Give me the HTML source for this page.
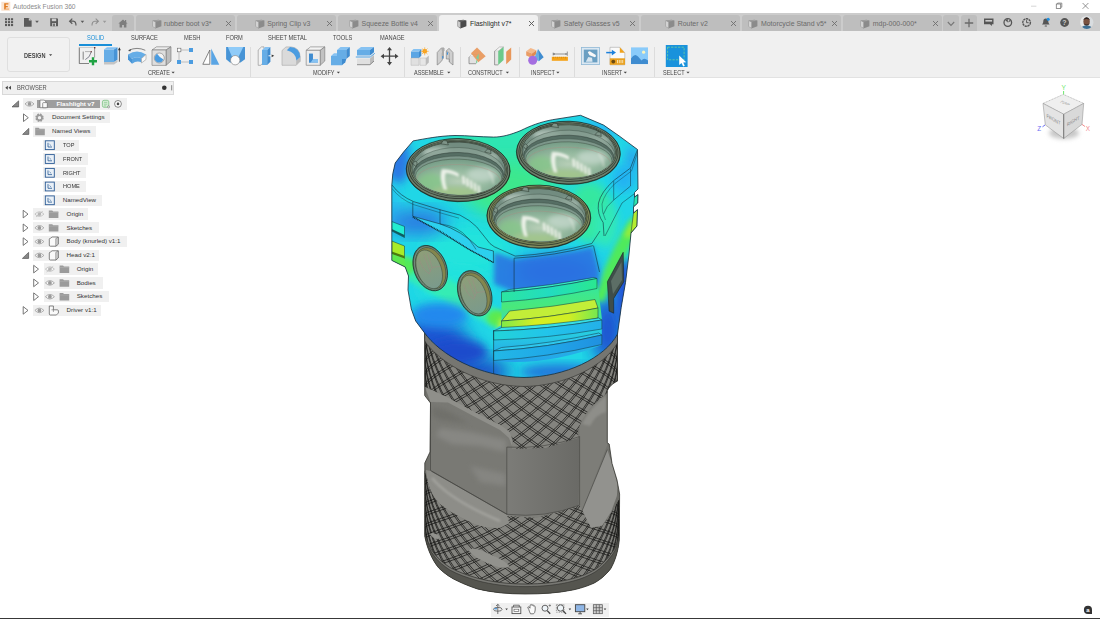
<!DOCTYPE html>
<html lang="en">
<head>
<meta charset="utf-8">
<title>Autodesk Fusion 360</title>
<style>
*{box-sizing:border-box;margin:0;padding:0}
html,body{width:1100px;height:619px;overflow:hidden;background:#fff;font-family:"Liberation Sans",sans-serif;}
#app{position:relative;width:1100px;height:619px;overflow:hidden;background:#fff}
.abs{position:absolute}
#titlebar{position:absolute;left:0;top:0;width:1100px;height:13px;background:#fff}
#titlebar .ttl{position:absolute;left:13px;top:2px;font-size:6.66px;color:#8a8a8a;line-height:9px;white-space:nowrap}
#tabbar{position:absolute;left:0;top:13px;width:1100px;height:18.500px;background:#cccccc}
.tab{position:absolute;top:2px;height:16.500px;background:#bebebe;border-radius:3px 3px 0 0;font-size:6.95px;color:#6a6a6a;line-height:16px;white-space:nowrap}
.tab.active{background:#f0f0f0;color:#2a2a2a}
.tab .tc{position:absolute;left:0;top:0.900px;width:91px;height:16px;display:flex;align-items:center;justify-content:center}
.tab .tc .cube{margin-right:2.5px;flex:none}
.tab .tx{position:absolute;left:89px;top:4.800px}
#toolbar{position:absolute;left:0;top:31px;width:1100px;height:47px;background:#f0f0f0;border-bottom:1px solid #e2e2e2}
.tbtab{position:absolute;top:3px;font-size:6.5px;color:#444;line-height:8px;white-space:nowrap;transform:scaleX(0.875);transform-origin:0 0}
.grp{position:absolute;top:38px;font-size:6.4px;color:#444;line-height:8px;white-space:nowrap;transform:scaleX(0.865);transform-origin:0 0}
.dbox{position:absolute;left:6.5px;top:6px;width:63px;height:35px;border:1px solid #dfdfdf;border-radius:3px;background:#f1f1f1}
.dlbl{position:absolute;left:23.9px;top:20.500px;font-size:6.3px;line-height:8px;color:#444;font-weight:bold;letter-spacing:0;transform:scaleX(0.89);transform-origin:0 0}
.sep{position:absolute;top:16px;width:1px;height:30px;background:#dcdcdc}
#browserhdr{position:absolute;left:2px;top:81px;width:172px;height:13.500px;background:#f0f0f0;border:1px solid #d9d9d9}
.bh{left:16.500px;top:83.800px;font-size:6.700px;color:#555;line-height:8px;white-space:nowrap;transform:scaleX(0.86);transform-origin:0 0}
.row{position:absolute;height:11.400px;background:#f0f0f0}
.rt{position:absolute;font-size:6.220px;line-height:8px;color:#333;white-space:nowrap;transform-origin:0 0}
</style>
</head>
<body>
<div id="app">
<div id="titlebar"><svg class="abs" style="left:1px;top:1px" width="10" height="11" viewBox="0 0 10 11"><rect x="0.3" y="0.8" width="9" height="9" fill="#fbe3cf"/><path d="M3.2 2.2 H7.4 V3.6 H4.8 V5 H6.8 V6.3 H4.8 V8.6 H3.2 Z" fill="#e07a1f"/><path d="M4.6 7.4 H8 V8.8 H4.6 Z" fill="#f4b37a"/></svg><span class="ttl">Autodesk Fusion 360</span>
<svg class="abs" style="left:1026px;top:0" width="74" height="13" viewBox="0 0 74 13"><path d="M5 6.2 H10.4" stroke="#d0d0d0" stroke-width="0.9"/><rect x="30.3" y="4" width="4.4" height="4.4" fill="none" stroke="#777" stroke-width="0.8"/><path d="M31.6 4 V3.1 H35.8 V7.2 H34.8" fill="none" stroke="#777" stroke-width="0.8"/><path d="M56.6 3 L62.4 8.8 M62.4 3 L56.6 8.800" stroke="#777" stroke-width="0.8" fill="none"/></svg></div>
<div id="tabbar">
<svg class="abs" style="left:0;top:0" width="135" height="18" viewBox="0 0 135 18">
<g fill="#5a5a5a">
<rect x="5" y="5.2" width="2.1" height="2.1"/><rect x="8" y="5.2" width="2.1" height="2.1"/><rect x="11" y="5.2" width="2.1" height="2.1"/>
<rect x="5" y="8.1" width="2.1" height="2.1"/><rect x="8" y="8.1" width="2.1" height="2.1"/><rect x="11" y="8.1" width="2.1" height="2.1"/>
<rect x="5" y="11" width="2.1" height="2.1"/><rect x="8" y="11" width="2.1" height="2.1"/><rect x="11" y="11" width="2.1" height="2.1"/>
<path d="M24 5 h4.8 l2.8 2.6 v6.1 h-7.6 z"/>
<path d="M35.200 7.800 h3.600 l-1.800 2.200 z"/>
<path d="M50.2 5.2 h7 l0.8 0.8 v7.2 h-7.8 z"/>
<path d="M80.600 7.800 h3.600 l-1.800 2.200 z"/>
</g>
<path d="M28.8 5 v2.6 h2.8" fill="#ccc" stroke="none"/>
<rect x="51.8" y="5.6" width="4.4" height="2.6" fill="#ccc"/><rect x="52.2" y="10" width="3.8" height="3.2" fill="#ccc"/><rect x="53.2" y="10.6" width="1.6" height="2.6" fill="#5a5a5a"/>
<path d="M72.3 5.6 L69.6 8.2 L72.3 10.8 M69.8 8.2 H73.2 Q76 8.4 76 12.6" fill="none" stroke="#5a5a5a" stroke-width="1.2"/>
<path d="M95.7 5.6 L98.4 8.2 L95.7 10.8 M98.2 8.2 H94.8 Q92 8.4 92 12.6" fill="none" stroke="#8e8e8e" stroke-width="1.1"/>
<path d="M102.800 7.800 h3.600 l-1.800 2.200 z" fill="#9a9a9a"/>
</svg>
<div class="tab" style="left:112px;width:22px"><svg class="abs" style="left:6px;top:4px" width="10" height="9" viewBox="0 0 10 9"><path d="M5 0.4 L9.6 4.6 H8.4 V8.6 H5.9 V6 H4.1 V8.6 H1.6 V4.6 H0.4 Z" fill="#7d7d7d"/><rect x="7" y="1" width="1.2" height="2.2" fill="#7d7d7d"/></svg></div>
<div class="tab" style="left:136px;width:99px"><div class="tc"><svg class="cube" width="10" height="10" viewBox="0 0 10 10"><path d="M0.6 1.6 L6.4 0.8 L9.4 1.6 L9.4 7.2 L3.4 9.4 L0.6 7.6 Z" fill="#8b8b8b"/><path d="M0.9 2.1 L3.4 2.9 L3.4 8.9 L0.9 7.4 Z" fill="#d2d2d2"/><path d="M0.9 1.8 L6.3 1.1 L9 1.8 L3.5 2.6 Z" fill="#a5a5a5"/></svg><span>rubber boot v3*</span></div><svg class="tx" width="7" height="7" viewBox="0 0 7 7"><path d="M1 1 L6 6 M6 1 L1 6" stroke="#6e6e6e" stroke-width="0.9" fill="none"/></svg></div>
<div class="tab" style="left:237px;width:99px"><div class="tc"><svg class="cube" width="10" height="10" viewBox="0 0 10 10"><path d="M0.6 1.6 L6.4 0.8 L9.4 1.6 L9.4 7.2 L3.4 9.4 L0.6 7.6 Z" fill="#8b8b8b"/><path d="M0.9 2.1 L3.4 2.9 L3.4 8.9 L0.9 7.4 Z" fill="#d2d2d2"/><path d="M0.9 1.8 L6.3 1.1 L9 1.8 L3.5 2.6 Z" fill="#a5a5a5"/></svg><span>Spring Clip v3</span></div><svg class="tx" width="7" height="7" viewBox="0 0 7 7"><path d="M1 1 L6 6 M6 1 L1 6" stroke="#6e6e6e" stroke-width="0.9" fill="none"/></svg></div>
<div class="tab" style="left:338px;width:99px"><div class="tc"><svg class="cube" width="10" height="10" viewBox="0 0 10 10"><path d="M0.6 1.6 L6.4 0.8 L9.4 1.6 L9.4 7.2 L3.4 9.4 L0.6 7.6 Z" fill="#8b8b8b"/><path d="M0.9 2.1 L3.4 2.9 L3.4 8.9 L0.9 7.4 Z" fill="#d2d2d2"/><path d="M0.9 1.8 L6.3 1.1 L9 1.8 L3.5 2.6 Z" fill="#a5a5a5"/></svg><span>Squeeze Bottle v4</span></div><svg class="tx" width="7" height="7" viewBox="0 0 7 7"><path d="M1 1 L6 6 M6 1 L1 6" stroke="#6e6e6e" stroke-width="0.9" fill="none"/></svg></div>
<div class="tab active" style="left:439px;width:99px"><div class="tc"><svg class="cube" width="10" height="10" viewBox="0 0 10 10"><path d="M0.6 1.6 L6.4 0.8 L9.4 1.6 L9.4 7.2 L3.4 9.4 L0.6 7.6 Z" fill="#4a4a4a"/><path d="M0.9 2.1 L3.4 2.9 L3.4 8.9 L0.9 7.4 Z" fill="#c8c8c8"/><path d="M0.9 1.8 L6.3 1.1 L9 1.8 L3.5 2.6 Z" fill="#777"/></svg><span>Flashlight v7*</span></div><svg class="tx" width="7" height="7" viewBox="0 0 7 7"><path d="M1 1 L6 6 M6 1 L1 6" stroke="#555" stroke-width="0.9" fill="none"/></svg></div>
<div class="tab" style="left:540px;width:99px"><div class="tc"><svg class="cube" width="10" height="10" viewBox="0 0 10 10"><path d="M0.6 1.6 L6.4 0.8 L9.4 1.6 L9.4 7.2 L3.4 9.4 L0.6 7.6 Z" fill="#8b8b8b"/><path d="M0.9 2.1 L3.4 2.9 L3.4 8.9 L0.9 7.4 Z" fill="#d2d2d2"/><path d="M0.9 1.8 L6.3 1.1 L9 1.8 L3.5 2.6 Z" fill="#a5a5a5"/></svg><span>Safety Glasses v5</span></div><svg class="tx" width="7" height="7" viewBox="0 0 7 7"><path d="M1 1 L6 6 M6 1 L1 6" stroke="#6e6e6e" stroke-width="0.9" fill="none"/></svg></div>
<div class="tab" style="left:641px;width:99px"><div class="tc"><svg class="cube" width="10" height="10" viewBox="0 0 10 10"><path d="M0.6 1.6 L6.4 0.8 L9.4 1.6 L9.4 7.2 L3.4 9.4 L0.6 7.6 Z" fill="#8b8b8b"/><path d="M0.9 2.1 L3.4 2.9 L3.4 8.9 L0.9 7.4 Z" fill="#d2d2d2"/><path d="M0.9 1.8 L6.3 1.1 L9 1.8 L3.5 2.6 Z" fill="#a5a5a5"/></svg><span>Router v2</span></div><svg class="tx" width="7" height="7" viewBox="0 0 7 7"><path d="M1 1 L6 6 M6 1 L1 6" stroke="#6e6e6e" stroke-width="0.9" fill="none"/></svg></div>
<div class="tab" style="left:742px;width:99px"><div class="tc"><svg class="cube" width="10" height="10" viewBox="0 0 10 10"><path d="M0.6 1.6 L6.4 0.8 L9.4 1.6 L9.4 7.2 L3.4 9.4 L0.6 7.6 Z" fill="#8b8b8b"/><path d="M0.9 2.1 L3.4 2.9 L3.4 8.9 L0.9 7.4 Z" fill="#d2d2d2"/><path d="M0.9 1.8 L6.3 1.1 L9 1.8 L3.5 2.6 Z" fill="#a5a5a5"/></svg><span>Motorcycle Stand v5*</span></div><svg class="tx" width="7" height="7" viewBox="0 0 7 7"><path d="M1 1 L6 6 M6 1 L1 6" stroke="#6e6e6e" stroke-width="0.9" fill="none"/></svg></div>
<div class="tab" style="left:843px;width:99px"><div class="tc"><svg class="cube" width="10" height="10" viewBox="0 0 10 10"><path d="M0.6 1.6 L6.4 0.8 L9.4 1.6 L9.4 7.2 L3.4 9.4 L0.6 7.6 Z" fill="#8b8b8b"/><path d="M0.9 2.1 L3.4 2.9 L3.4 8.9 L0.9 7.4 Z" fill="#d2d2d2"/><path d="M0.9 1.8 L6.3 1.1 L9 1.8 L3.5 2.6 Z" fill="#a5a5a5"/></svg><span>mdp-000-000*</span></div><svg class="tx" width="7" height="7" viewBox="0 0 7 7"><path d="M1 1 L6 6 M6 1 L1 6" stroke="#6e6e6e" stroke-width="0.9" fill="none"/></svg></div>
<div class="tab" style="left:943px;width:16px"><svg class="abs" style="left:4px;top:6px" width="8" height="6" viewBox="0 0 8 6"><path d="M0.8 1 L4 4.4 L7.2 1" stroke="#777" stroke-width="1.1" fill="none"/></svg></div>
<div class="tab" style="left:961px;width:16px"><svg class="abs" style="left:3px;top:3px" width="10" height="10" viewBox="0 0 10 10"><path d="M5 0.8 V9.2 M0.8 5 H9.2" stroke="#6a6a6a" stroke-width="1.3" fill="none"/></svg></div>
<svg class="abs" style="left:980px;top:0" width="120" height="18" viewBox="0 0 120 18">
<path d="M4 5.6 h9.5 v5.6 h-1.6 v1.8 l-2 -1.8 h-5.9 z" fill="#555"/><rect x="5.4" y="7" width="6.7" height="1.6" fill="#ccc"/>
<circle cx="27.8" cy="9.5" r="3.8" fill="none" stroke="#555" stroke-width="1.3"/><path d="M27.8 9.5 L25 7 L27.8 6 Z M27.8 9.5 L31 8 L30 6.4 Z" fill="#555"/>
<circle cx="46.6" cy="9.5" r="3.8" fill="none" stroke="#555" stroke-width="1.4" stroke-dasharray="2.2 0.6"/><path d="M46.6 7.2 V9.7 H48.6" fill="none" stroke="#555" stroke-width="1"/>
<path d="M62 11.6 q1.3 -1 1.3 -3.4 q0 -2.6 2.5 -2.6 q2.5 0 2.5 2.6 q0 2.4 1.3 3.4 z" fill="#555"/><rect x="64.6" y="12.4" width="2.4" height="1" rx="0.5" fill="#555"/><circle cx="68.2" cy="6.3" r="1.5" fill="#1e8fe0"/>
<circle cx="84.6" cy="9.5" r="4.4" fill="#555"/>
<clipPath id="avc"><circle cx="106.8" cy="9.3" r="6.6"/></clipPath>
<g clip-path="url(#avc)"><rect x="100" y="2" width="14" height="15" fill="#d9dde0"/><rect x="100" y="2" width="3.5" height="15" fill="#e8e8e8"/><ellipse cx="106.6" cy="8.6" rx="3.2" ry="4.2" fill="#7a5240"/><path d="M103.2 7 q3.4 -5.5 6.8 0 q-3.4 -2 -6.8 0z" fill="#2a2220"/><path d="M103.6 10 q3 5 6 0 q-3 3 -6 0z" fill="#2e2624"/><path d="M100 17 q1 -4.5 6.6 -4.5 q5.6 0 6.6 4.500z" fill="#3d6f94"/></g>
</svg>
<span class="abs" style="left:1062px;top:5px;font-size:7px;font-weight:bold;color:#ccc;line-height:9px;width:5px;text-align:center">?</span>
</div>
<div id="toolbar">
<div class="dbox"></div><span class="dlbl">DESIGN</span>
<span class="tbtab" style="left:86.8px;color:#1a8fd8">SOLID</span>
<span class="tbtab" style="left:131px">SURFACE</span>
<span class="tbtab" style="left:184.2px">MESH</span>
<span class="tbtab" style="left:225.6px">FORM</span>
<span class="tbtab" style="left:267.6px">SHEET METAL</span>
<span class="tbtab" style="left:332.5px">TOOLS</span>
<span class="tbtab" style="left:379.8px">MANAGE</span>
<div class="abs" style="left:79px;top:13px;width:33px;height:1.6px;background:#1a8fd8"></div>
<span class="grp" style="left:147.5px">CREATE</span>
<span class="grp" style="left:312.8px">MODIFY</span>
<span class="grp" style="left:414.2px">ASSEMBLE</span>
<span class="grp" style="left:468.2px">CONSTRUCT</span>
<span class="grp" style="left:531.4px">INSPECT</span>
<span class="grp" style="left:601.8px">INSERT</span>
<span class="grp" style="left:663.2px">SELECT</span>
<div class="sep" style="left:250px"></div><div class="sep" style="left:404px"></div><div class="sep" style="left:459.5px"></div><div class="sep" style="left:518.5px"></div><div class="sep" style="left:574.2px"></div><div class="sep" style="left:654.2px"></div>
<svg class="abs" style="left:0;top:0" width="1100" height="47" viewBox="0 31 1100 47">
<g fill="#444"><path d="M49 54.2 h3.2 l-1.6 1.9z"/><path d="M171.5 71.7 h3.2 l-1.6 1.9z"/><path d="M336.8 71.7 h3.2 l-1.6 1.9z"/><path d="M447.2 71.7 h3.2 l-1.6 1.9z"/><path d="M505.8 71.7 h3.2 l-1.6 1.9z"/><path d="M556.3 71.7 h3.2 l-1.6 1.9z"/><path d="M623.7 71.700 h3.2 l-1.6 1.9z"/><path d="M686.4 71.7 h3.2 l-1.600 1.9z"/></g>
<!-- 1 sketch -->
<g fill="none" stroke-width="0.7"><path d="M79.3 47.4 V63.6" stroke="#444"/><path d="M79.3 47.5 H94.6" stroke="#bbb"/><path d="M94.6 47.4 V57.5" stroke="#777"/><path d="M79.3 63.5 H89" stroke="#555"/><path d="M83.2 51.6 V59.6" stroke="#555"/><path d="M85 51.6 H90" stroke="#999"/><path d="M85.3 59.6 Q90 57.5 91.200 52" stroke="#556"/></g>
<rect x="94" y="47" width="1.4" height="1.4" fill="#633"/><rect x="90.500" y="51" width="1.3" height="1.3" fill="#633"/>
<path d="M93 57.2 V65.2 M89 61.2 H97" stroke="#1fa343" stroke-width="2.4" fill="none"/>
<!-- 2 extrude -->
<path d="M104 49.5 H114 V62 H104Z" fill="#66ade6"/><path d="M104 49.5 L107 47.300 H117.500 L114 49.5Z" fill="#86c2f2"/><path d="M114 49.5 L117.500 47.3 V59.700 L114 62Z" fill="#4794d6"/><path d="M104 62 H114 L117.500 59.7 V62 L114 64.500 H104Z" fill="#c4c4c4"/>
<path d="M119.400 48.5 V61.700" stroke="#333" stroke-width="0.8"/><path d="M118 50.2 L119.400 47.300 L120.800 50.2Z" fill="#333"/>
<!-- 3 revolve -->
<path d="M128 54.500 Q137 48.500 146 54.500 L141.500 58.500 Q137 56 132 58.800Z" fill="#66ade6"/><path d="M128 54.500 L132 58.800 V63.700 L128 59.5Z" fill="#4794d6"/><path d="M132 58.800 Q137 56 141.500 58.500 V62.500 Q137 60 132 63.700Z" fill="#59a3e0"/><path d="M141.500 58.500 L146 54.500 V59.500 L141.500 63Z" fill="#fafafa" stroke="#888" stroke-width="0.5"/>
<path d="M128.800 50.300 Q137 46.500 145.300 50.300" stroke="#555" stroke-width="0.7" fill="none"/><path d="M128 51 L131 49 L130.500 51.200Z" fill="#444"/>
<!-- 4 hole -->
<path d="M152 50 L156.500 46.800 H171 L166 50Z" fill="#ececec" stroke="#777" stroke-width="0.6"/><path d="M166 50 L171 46.800 V61 L166 65.400Z" fill="#bdbdbd" stroke="#777" stroke-width="0.6"/><path d="M152 50 H166 V65.400 H152Z" fill="#dedede" stroke="#777" stroke-width="0.6"/><circle cx="159.300" cy="58" r="5" fill="#f4f4f4" stroke="#888" stroke-width="0.7"/><path d="M157 53.800 Q159.500 57.500 163.500 59.500 Q162 62.600 159.300 62.600 Q154.700 62.300 154.700 58 Q154.900 55 157 53.800Z" fill="#4b9ce0"/>
<!-- 5 pattern -->
<path d="M179 50 H191 M179 50 V62 M179 62 H191" stroke="#aaa" stroke-width="0.7" fill="none"/><rect x="177.300" y="48.200" width="3.600" height="3.600" fill="#fff" stroke="#666" stroke-width="0.600"/><rect x="189" y="48" width="4" height="4" fill="#4b9ce0"/><rect x="177" y="60" width="4" height="4" fill="#4b9ce0"/><rect x="189" y="60" width="4" height="4" fill="#4b9ce0"/>
<!-- 6 mirror -->
<path d="M202.800 64.300 H209.800 V50Z" fill="#fff" stroke="#666" stroke-width="0.8"/><path d="M211.200 48.400 V64.700 H219.300Z" fill="#5aa5e4"/>
<!-- 7 form -->
<path d="M226.100 47 H245 V59.300 L240.500 62.500 H230 L226.100 59.300Z" fill="#4794d6"/><path d="M227.800 47 H243.300 L238.200 57.500 H232.300Z" fill="#8fcbf8"/><circle cx="235.200" cy="60.200" r="4.700" fill="#fbfbfb" stroke="#888" stroke-width="0.7"/>
<!-- 8 press pull -->
<path d="M258.200 50 L261.500 46.900 H264 V62 L260.500 65.300 H258.200Z" fill="#f2f2f2" stroke="#888" stroke-width="0.6"/><path d="M262 50 H267.200 V65 H262Z" fill="#66ade6"/><path d="M262 50 L265.200 46.900 H270.400 L267.200 50Z" fill="#86c2f2"/><path d="M267.200 50 L270.400 46.900 V61.800 L267.200 65Z" fill="#3f8cd0"/><path d="M268.500 55.800 H272" stroke="#fff" stroke-width="1"/><path d="M271.600 54.400 L274.200 55.800 L271.600 57.200Z" fill="#333"/>
<!-- 9 fillet -->
<path d="M282 50.500 L286 46.900 H291 Q299.800 47.500 300.200 57 V61.200 L296.200 65.300 H282Z" fill="#dadada" stroke="#999" stroke-width="0.5"/><path d="M296.200 65.300 L300.200 61.200 V57 L296.200 60.500Z" fill="#bbb"/><path d="M290 47 Q299.800 47.500 300.200 57 L296.400 60.500 Q296 52.500 286.800 50.200Z" fill="#4b9ce0"/>
<!-- 10 shell -->
<path d="M306.200 50.300 L310.500 46.900 H324.800 L320.200 50.300Z" fill="#f4f4f4" stroke="#777" stroke-width="0.6"/><path d="M320.200 50.300 L324.800 46.900 V61 L320.200 65.300Z" fill="#c2c2c2" stroke="#777" stroke-width="0.600"/><path d="M306.200 50.300 H320.200 V65.300 H306.200Z" fill="#ececec" stroke="#777" stroke-width="0.6"/><path d="M309 53.800 H312.800 V59 H318 V62.600 H309Z" fill="#3f8cd0"/><path d="M312.800 59 H318 V62.600 H310.500Z" fill="#86c2f2"/><path d="M309 53.800 H312.800 V59 L310.500 62.600 H309Z" fill="#3f8cd0"/>
<!-- 11 combine -->
<path d="M337 50 L340.500 47 H349.800 L346.300 50Z" fill="#86c2f2"/><path d="M337 50 H346.300 V59 H337Z" fill="#66ade6"/><path d="M346.300 50 L349.800 47 V56 L346.300 59Z" fill="#3f8cd0"/><path d="M331 56 L334 53.200 H337 V56Z" fill="#86c2f2"/><path d="M331 56 H337 V59 H342 V65.300 H331Z" fill="#66ade6"/><path d="M342 59 H346.300 L345.300 62.300 L342 65.300Z" fill="#3f8cd0"/>
<!-- 12 split -->
<path d="M357 50 L361 46.900 H374 L370 50Z" fill="#86c2f2"/><path d="M357 50 H370 V55.500 H357Z" fill="#66ade6"/><path d="M370 50 L374 46.900 V52.300 L370 55.500Z" fill="#3f8cd0"/><path d="M355.800 57 H370.300 L374.800 53.300" stroke="#3a96e0" stroke-width="0.9" fill="none"/><path d="M357 58.500 H370 V64.600 H357Z" fill="#e0e0e0"/><path d="M370 58.500 L374 55 V61 L370 64.600Z" fill="#bcbcbc"/><path d="M357 64.700 H370 L374 61" stroke="#666" stroke-width="0.7" fill="none"/>
<!-- 13 move -->
<path d="M389.500 49 V63.500 M382.500 56.200 H396.500" stroke="#444" stroke-width="1.300" fill="none"/><path d="M389.500 47 L392 50.300 H387Z M389.500 65.400 L392 62.100 H387Z M380.600 56.200 L384 53.700 V58.700Z M398.500 56.200 L395 53.700 V58.700Z" fill="#444"/>
<!-- 14 new component -->
<path d="M411 51.600 L413.500 49 H421.300 L419 51.600Z" fill="#86c2f2"/><path d="M411 51.600 H419 V58 H411Z" fill="#5aa5e4"/><path d="M419 51.600 L421.300 49 V55.800 L419 58Z" fill="#3f8cd0"/><path d="M411 58 H419 V65.300 H411Z" fill="#e0e0e0" stroke="#aaa" stroke-width="0.400"/><path d="M420 58 L422.500 55.600 H428.800 L426 58Z" fill="#f2f2f2"/><path d="M420 58 H426 V65.300 H420Z" fill="#e6e6e6" stroke="#aaa" stroke-width="0.400"/><path d="M426 58 L428.800 55.600 V62.500 L426 65.300Z" fill="#bcbcbc"/>
<circle cx="424.700" cy="51.300" r="2.300" fill="#f79a10"/><path d="M424.700 47.300 V55.300 M420.700 51.300 H428.700 M421.900 48.500 L427.500 54.100 M427.500 48.500 L421.900 54.100" stroke="#f9ab2c" stroke-width="0.700"/>
<!-- 15 joint -->
<path d="M437.200 52.500 L441.300 48 H444 V51 L442.300 52.800 V60 L439.300 63.500 L437.200 65Z" fill="#cfcfcf" stroke="#777" stroke-width="0.600"/><path d="M441.300 48 H444 V58 L442.300 60 V52.800Z" fill="#aaa"/><path d="M446.300 51 L449 48.300 L453 52.500 V65 L449.300 62 V59 H446.300Z" fill="#cfcfcf" stroke="#777" stroke-width="0.600"/><path d="M446.300 51 L449.300 52.800 V62" stroke="#888" stroke-width="0.500" fill="none"/><rect x="442.300" y="56" width="0.900" height="2.600" fill="#2f8ce0"/><rect x="446.900" y="52.300" width="1" height="2.400" fill="#2f8ce0"/>
<!-- 16 offset plane -->
<path d="M469 57 L471.500 54.500 H478 L476 57Z" fill="#f0f0f0" stroke="#999" stroke-width="0.400"/><path d="M469 57 H476 V63.600 H469Z" fill="#e2e2e2"/><path d="M469 57 V63.700 H476" stroke="#666" stroke-width="0.600" fill="none"/><path d="M477 47.600 L485.700 56.300 L478.300 62.200 L471 53.300Z" fill="#e8975a" fill-opacity="0.920"/><path d="M478.700 53.500 L476 58 L478.700 59.700Z" fill="#79cfa0"/><path d="M476.300 60.500 L477.200 60 V63 L476.300 63.600Z" fill="#59c07f"/>
<!-- 17 midplane -->
<path d="M494.600 51.200 L499.500 47 H503.600 L498.200 51.200Z" fill="#f6f6f6" stroke="#888" stroke-width="0.500"/><path d="M494.600 51.200 H498.200 V64.900 H494.600Z" fill="#e6e6e6"/><path d="M494.600 51.200 V64.900 H498.200" stroke="#666" stroke-width="0.600" fill="none"/><path d="M498.200 51.200 L503.600 47 V60 L498.200 64.900Z" fill="#6cc98a"/><path d="M506.200 51.800 L511.200 47.500 V59.500 L506.200 64.300Z" fill="#e8975a"/>
<!-- 18 inspect -->
<path d="M526.200 51.300 L530.600 48 L536.300 50.300 L532 53.600Z" fill="#f4b98c"/><path d="M526.200 51.300 L532 53.600 V58 L526.200 55.500Z" fill="#ea9c66"/><path d="M532 53.600 L536.300 50.300 V54 L532 58Z" fill="#e08a50"/><path d="M538 49 L534 58.500 L538.800 61.200Z" fill="#66ade6"/><path d="M538 49 L538.800 61.200 L543.700 57.200Z" fill="#3f8cd0"/><circle cx="532.700" cy="60.300" r="4.500" fill="#a46ee0"/>
<!-- 19 measure -->
<rect x="551.800" y="56.800" width="16.100" height="4" fill="#f5a31a"/><path d="M553.500 56.800 v1.600 M555.500 56.800 v1 M557.500 56.800 v1.600 M559.500 56.800 v1 M561.500 56.800 v1.600 M563.500 56.800 v1 M565.500 56.800 v1.600" stroke="#c77f08" stroke-width="0.500"/><path d="M553 54 H567 M553.200 52.600 V55.400 M567.300 51.500 V55.800" stroke="#555" stroke-width="0.600" fill="none"/><path d="M553.200 54 l1.500 -0.800 v1.600z M567 54 l-1.500 -0.800 v1.600z" fill="#555"/>
<!-- 20 decal -->
<rect x="581.600" y="47.400" width="17.900" height="17.200" fill="#dbe8f2" stroke="#8fb8d6" stroke-width="0.800"/><rect x="583.800" y="49.600" width="13.600" height="12.800" fill="#6a9fc2"/><path d="M587.800 52.300 Q589.500 50.500 591 52 L595.800 55 Q596.400 56.800 594.800 57.300 L589.500 55.300Z" fill="#f8f8f8"/><path d="M588.300 57 L592 57.800 L592.500 61.800 H585.800Z" fill="#d8e6f0"/>
<!-- 21 insert -->
<path d="M610 47.300 H619.800 L624.800 52.800 V64.800 H610Z" fill="#fafafa" stroke="#999" stroke-width="0.500"/><path d="M619.800 47.300 V52.800 H624.800Z" fill="#f0a21c"/><rect x="609.800" y="58.300" width="15.200" height="6.500" fill="#e8a020"/><circle cx="613.300" cy="61.600" r="1.900" fill="#6b4a10"/><path d="M617.500 60 v3.200 M619.300 60 v3.200 M621 60 v3.200 M622.700 60 v3.200" stroke="#fbe6b8" stroke-width="0.900"/><path d="M606.200 52.600 H612.500" stroke="#1c80dc" stroke-width="1.500"/><path d="M611.800 49.800 L616 52.600 L611.800 55.400Z" fill="#1c80dc"/>
<!-- 22 canvas -->
<rect x="631" y="47.400" width="17" height="16.700" fill="#8acbfa"/><path d="M631 64.100 V58.500 Q634.500 52.500 638 56.500 L641.500 60.500 Q644 57 648 60.500 V64.100Z" fill="#3f8cd0"/><circle cx="643.600" cy="52.200" r="1.600" fill="#f8f4c0"/>
<!-- 23 select -->
<rect x="665.800" y="45" width="21.800" height="22" fill="#1992dc"/><rect x="667.600" y="47.200" width="16.500" height="12.600" fill="none" stroke="#7fdc8c" stroke-width="0.700" stroke-dasharray="2.200 1.300"/><path d="M679.200 55.500 L679.200 65 L681.500 63 L683.200 66.500 L684.800 65.800 L683.200 62.500 L686.200 62.300Z" fill="#fff"/>
</svg>

</div>
<!--BROWSER-->
<div id="browserhdr"></div>
<span class="abs bh">BROWSER</span>
<svg class="abs" style="left:0;top:78px" width="180" height="20" viewBox="0 78 180 20"><path d="M7.800 85.800 V89.800 L5.300 87.800Z M11 85.800 V89.800 L8.500 87.800Z" fill="#444"/><circle cx="164.300" cy="87.800" r="2.300" fill="#333"/><path d="M171.700 85.200 V90.400" stroke="#666" stroke-width="0.800"/></svg>
<div class="row" style="left:23px;top:98.2px;width:104.0px"></div>
<div class="abs" style="left:36.9px;top:99.5px;width:63px;height:8.7px;background:#9e9e9e"></div>
<span class="rt" style="left:56.5px;top:99.6px;color:#fff;font-weight:bold">Flashlight v7</span>
<div class="row" style="left:33.1px;top:112.0px;width:76.9px"></div>
<span class="rt" style="left:52px;top:113.4px">Document Settings</span>
<div class="row" style="left:33.1px;top:125.7px;width:62.6px"></div>
<span class="rt" style="left:52px;top:127.1px">Named Views</span>
<div class="row" style="left:43.3px;top:139.5px;width:35.5px"></div>
<span class="rt" style="left:62.7px;top:140.9px;transform:scaleX(0.9)">TOP</span>
<div class="row" style="left:43.3px;top:153.3px;width:44.4px"></div>
<span class="rt" style="left:62.7px;top:154.7px;transform:scaleX(0.9)">FRONT</span>
<div class="row" style="left:43.3px;top:167.1px;width:42.4px"></div>
<span class="rt" style="left:62.7px;top:168.5px;transform:scaleX(0.9)">RIGHT</span>
<div class="row" style="left:43.3px;top:180.8px;width:42.4px"></div>
<span class="rt" style="left:62.7px;top:182.2px;transform:scaleX(0.9)">HOME</span>
<div class="row" style="left:43.3px;top:194.6px;width:58.6px"></div>
<span class="rt" style="left:62.7px;top:196.0px">NamedView</span>
<div class="row" style="left:33px;top:208.4px;width:54.8px"></div>
<span class="rt" style="left:66.6px;top:209.8px">Origin</span>
<div class="row" style="left:33px;top:222.1px;width:65.7px"></div>
<span class="rt" style="left:66.6px;top:223.5px">Sketches</span>
<div class="row" style="left:33px;top:235.9px;width:93.7px"></div>
<span class="rt" style="left:66.6px;top:237.3px">Body (knurled) v1:1</span>
<div class="row" style="left:33px;top:249.7px;width:65.7px"></div>
<span class="rt" style="left:66.6px;top:251.1px">Head v2:1</span>
<div class="row" style="left:43.5px;top:263.4px;width:54.2px"></div>
<span class="rt" style="left:76.7px;top:264.8px">Origin</span>
<div class="row" style="left:43.5px;top:277.2px;width:59.0px"></div>
<span class="rt" style="left:76.7px;top:278.6px">Bodies</span>
<div class="row" style="left:43.5px;top:291.0px;width:65.7px"></div>
<span class="rt" style="left:76.7px;top:292.4px">Sketches</span>
<div class="row" style="left:33px;top:304.7px;width:68.3px"></div>
<span class="rt" style="left:66.6px;top:306.1px">Driver v1:1</span>
<svg class="abs" style="left:0;top:95px" width="180" height="225" viewBox="0 95 180 225">
<path d="M18.6 100.9 V106.9 H12Z" fill="#888" stroke="#555" stroke-width="0.7"/>
<path d="M25 103.9 Q29.5 99.30000000000001 34 103.9 Q29.5 108.5 25 103.9Z" fill="#f6f6f6" stroke="#9a9a9a" stroke-width="0.8"/><circle cx="29.5" cy="103.9" r="1.9" fill="#9a9a9a"/>
<path d="M40 100.10000000000001 H44.200 L46 101.9 V107.7 H40Z" fill="#fafafa" stroke="#666" stroke-width="0.6"/><path d="M42.700 103.4 Q42.700 102.60000000000001 43.500 102.60000000000001 H46.500 Q47.300 102.60000000000001 47.300 103.4 V107.7 H42.700Z" fill="#fafafa" stroke="#555" stroke-width="0.6"/>
<rect x="102.400" y="100.30000000000001" width="6.400" height="7" rx="1.600" fill="#d5ecd6" stroke="#7cc283" stroke-width="0.8"/><path d="M104 102.4 h3.200 M104 104.2 h3.200 M104 105.9 h2" stroke="#7cc283" stroke-width="0.600"/><circle cx="108.600" cy="106.9" r="1" fill="#fff" stroke="#555" stroke-width="0.5"/>
<circle cx="118" cy="103.9" r="3.400" fill="#fff" stroke="#555" stroke-width="0.7"/><circle cx="118" cy="103.9" r="1.300" fill="#444"/>
<path d="M23.5 113.9 V121.5 L28.3 117.7Z" fill="#fff" stroke="#555" stroke-width="0.8"/>
<circle cx="39.500" cy="117.7" r="3" fill="none" stroke="#9a9a9a" stroke-width="2.400" stroke-dasharray="1.500 0.860"/><circle cx="39.500" cy="117.7" r="2.500" fill="none" stroke="#9a9a9a" stroke-width="1.500"/>
<path d="M28.799999999999997 128.4 V134.4 H22.599999999999998Z" fill="#888" stroke="#555" stroke-width="0.7"/>
<path d="M35.2 127.80000000000001 H38.6 L39.6 128.8 H44.800000000000004 V135.20000000000002 H35.2Z" fill="#9b9b9b"/><path d="M35.2 129.8 H44.800000000000004" stroke="#b5b5b5" stroke-width="0.5"/>
<rect x="45.300" y="140.79999999999998" width="9" height="8.800" fill="#e9f0f7" stroke="#2a5a94" stroke-width="0.9"/><path d="M48 142.79999999999998 V147.0 H52" stroke="#2a5a94" stroke-width="0.8" fill="none"/><path d="M49.500 144.2 L51.200 145.79999999999998" stroke="#2a5a94" stroke-width="0.6"/>
<rect x="45.300" y="154.6" width="9" height="8.800" fill="#e9f0f7" stroke="#2a5a94" stroke-width="0.9"/><path d="M48 156.6 V160.8 H52" stroke="#2a5a94" stroke-width="0.8" fill="none"/><path d="M49.500 158.0 L51.200 159.6" stroke="#2a5a94" stroke-width="0.6"/>
<rect x="45.300" y="168.4" width="9" height="8.800" fill="#e9f0f7" stroke="#2a5a94" stroke-width="0.9"/><path d="M48 170.4 V174.60000000000002 H52" stroke="#2a5a94" stroke-width="0.8" fill="none"/><path d="M49.500 171.8 L51.200 173.4" stroke="#2a5a94" stroke-width="0.6"/>
<rect x="45.300" y="182.1" width="9" height="8.800" fill="#e9f0f7" stroke="#2a5a94" stroke-width="0.9"/><path d="M48 184.1 V188.3 H52" stroke="#2a5a94" stroke-width="0.8" fill="none"/><path d="M49.500 185.5 L51.200 187.1" stroke="#2a5a94" stroke-width="0.6"/>
<rect x="45.300" y="195.9" width="9" height="8.800" fill="#e9f0f7" stroke="#2a5a94" stroke-width="0.9"/><path d="M48 197.9 V202.10000000000002 H52" stroke="#2a5a94" stroke-width="0.8" fill="none"/><path d="M49.500 199.3 L51.200 200.9" stroke="#2a5a94" stroke-width="0.6"/>
<path d="M23.2 210.29999999999998 V217.9 L28.0 214.1Z" fill="#fff" stroke="#555" stroke-width="0.8"/>
<path d="M34.9 214.1 Q39.4 209.5 43.9 214.1 Q39.4 218.7 34.9 214.1Z" fill="#f6f6f6" stroke="#b8b8b8" stroke-width="0.8"/><circle cx="39.4" cy="214.1" r="1.9" fill="#b8b8b8"/><path d="M36.1 216.9 L42.699999999999996 211.29999999999998" stroke="#b0b0b0" stroke-width="0.7"/>
<path d="M48.8 210.5 H52.199999999999996 L53.199999999999996 211.5 H58.4 V217.9 H48.8Z" fill="#9b9b9b"/><path d="M48.8 212.5 H58.4" stroke="#b5b5b5" stroke-width="0.5"/>
<path d="M23.2 224.0 V231.60000000000002 L28.0 227.8Z" fill="#fff" stroke="#555" stroke-width="0.8"/>
<path d="M34.9 227.8 Q39.4 223.20000000000002 43.9 227.8 Q39.4 232.4 34.9 227.8Z" fill="#f6f6f6" stroke="#9a9a9a" stroke-width="0.8"/><circle cx="39.4" cy="227.8" r="1.9" fill="#9a9a9a"/>
<path d="M48.8 224.20000000000002 H52.199999999999996 L53.199999999999996 225.20000000000002 H58.4 V231.60000000000002 H48.8Z" fill="#9b9b9b"/><path d="M48.8 226.20000000000002 H58.4" stroke="#b5b5b5" stroke-width="0.5"/>
<path d="M23.2 237.79999999999998 V245.4 L28.0 241.6Z" fill="#fff" stroke="#555" stroke-width="0.8"/>
<path d="M34.9 241.6 Q39.4 237.0 43.9 241.6 Q39.4 246.2 34.9 241.6Z" fill="#f6f6f6" stroke="#9a9a9a" stroke-width="0.8"/><circle cx="39.4" cy="241.6" r="1.9" fill="#9a9a9a"/>
<path d="M49.3 239.2 Q49.3 238.4 50.4 238.29999999999998 L52.099999999999994 237.0 H58.199999999999996 V244.2 L55.8 246.2 H50.4 Q49.3 246.2 49.3 245.2Z" fill="#fafafa" stroke="#555" stroke-width="0.7"/><path d="M55.8 238.6 L58.199999999999996 237.0 V244.2 L55.8 246.2Z" fill="#d6d6d6" stroke="#555" stroke-width="0.5"/>
<path d="M28.6 252.4 V258.4 H22.4Z" fill="#888" stroke="#555" stroke-width="0.7"/>
<path d="M34.9 255.4 Q39.4 250.8 43.9 255.4 Q39.4 260.0 34.9 255.4Z" fill="#f6f6f6" stroke="#9a9a9a" stroke-width="0.8"/><circle cx="39.4" cy="255.4" r="1.9" fill="#9a9a9a"/>
<path d="M49.3 253.0 Q49.3 252.20000000000002 50.4 252.1 L52.099999999999994 250.8 H58.199999999999996 V258.0 L55.8 260.0 H50.4 Q49.3 260.0 49.3 259.0Z" fill="#fafafa" stroke="#555" stroke-width="0.7"/><path d="M55.8 252.4 L58.199999999999996 250.8 V258.0 L55.8 260.0Z" fill="#d6d6d6" stroke="#555" stroke-width="0.5"/>
<path d="M33.7 265.3 V272.90000000000003 L38.5 269.1Z" fill="#fff" stroke="#555" stroke-width="0.8"/>
<path d="M45.4 269.1 Q49.9 264.5 54.4 269.1 Q49.9 273.70000000000005 45.4 269.1Z" fill="#f6f6f6" stroke="#b8b8b8" stroke-width="0.8"/><circle cx="49.9" cy="269.1" r="1.9" fill="#b8b8b8"/><path d="M46.6 271.90000000000003 L53.199999999999996 266.3" stroke="#b0b0b0" stroke-width="0.7"/>
<path d="M59.6 265.5 H63.0 L64.0 266.5 H69.2 V272.90000000000003 H59.6Z" fill="#9b9b9b"/><path d="M59.6 267.5 H69.2" stroke="#b5b5b5" stroke-width="0.5"/>
<path d="M33.7 279.09999999999997 V286.7 L38.5 282.9Z" fill="#fff" stroke="#555" stroke-width="0.8"/>
<path d="M45.4 282.9 Q49.9 278.29999999999995 54.4 282.9 Q49.9 287.5 45.4 282.9Z" fill="#f6f6f6" stroke="#9a9a9a" stroke-width="0.8"/><circle cx="49.9" cy="282.9" r="1.9" fill="#9a9a9a"/>
<path d="M59.6 279.29999999999995 H63.0 L64.0 280.29999999999995 H69.2 V286.7 H59.6Z" fill="#9b9b9b"/><path d="M59.6 281.29999999999995 H69.2" stroke="#b5b5b5" stroke-width="0.5"/>
<path d="M33.7 292.9 V300.5 L38.5 296.7Z" fill="#fff" stroke="#555" stroke-width="0.8"/>
<path d="M45.4 296.7 Q49.9 292.09999999999997 54.4 296.7 Q49.9 301.3 45.4 296.7Z" fill="#f6f6f6" stroke="#9a9a9a" stroke-width="0.8"/><circle cx="49.9" cy="296.7" r="1.9" fill="#9a9a9a"/>
<path d="M59.6 293.09999999999997 H63.0 L64.0 294.09999999999997 H69.2 V300.5 H59.6Z" fill="#9b9b9b"/><path d="M59.6 295.09999999999997 H69.2" stroke="#b5b5b5" stroke-width="0.5"/>
<path d="M23.2 306.59999999999997 V314.2 L28.0 310.4Z" fill="#fff" stroke="#555" stroke-width="0.8"/>
<path d="M34.9 310.4 Q39.4 305.79999999999995 43.9 310.4 Q39.4 315.0 34.9 310.4Z" fill="#f6f6f6" stroke="#9a9a9a" stroke-width="0.8"/><circle cx="39.4" cy="310.4" r="1.9" fill="#9a9a9a"/>
<path d="M49.3 306.0 H53.4 V309.79999999999995 H57.4 Q58.4 309.79999999999995 58.4 311.0 V313.0 L56.4 315.0 H50.3 Q49.3 315.0 49.3 314.0Z" fill="#fafafa" stroke="#555" stroke-width="0.7"/><path d="M51.4 309.79999999999995 H53.4 M53.4 309.79999999999995 V312.0" stroke="#555" stroke-width="0.5" fill="none"/>
</svg>
<!--/BROWSER-->
<div id="canvas">
<!--MODEL-->
<svg class="abs" style="left:380px;top:100px" width="280" height="500" viewBox="380 100 280 500">
<defs>
<filter id="b10" x="-30%" y="-30%" width="160%" height="160%"><feGaussianBlur stdDeviation="9"/></filter>
<filter id="b6" x="-30%" y="-30%" width="160%" height="160%"><feGaussianBlur stdDeviation="5"/></filter>
<filter id="b3" x="-30%" y="-30%" width="160%" height="160%"><feGaussianBlur stdDeviation="2.5"/></filter>
<filter id="b1" x="-30%" y="-30%" width="160%" height="160%"><feGaussianBlur stdDeviation="1"/></filter>
<clipPath id="headclip"><path d="M391.800 185 L392.800 173.700 L395.200 163 Q403 152 413.100 140.900 C425 138.800 438 136 455 135.500 C468 135.500 480 137 493.600 137.100 C502 137 510 135 520.900 130.500 C530 126 540 122 552.600 119.700 L580.500 115.300 L603.600 125.100 L619.100 135.900 L637.500 149.500 L638 189 L634.500 192.500 L634.500 197 L638 194.500 L637.800 203 L633.500 207 L633.500 213 L637.500 209.500 L637 226 L631 233 L629 254 L625.500 282.600 L621.200 307.500 L617.500 334 C605 358 565 377 524 377.5 C480 377 440 355 423.900 332 L415.7 321 L411.300 309 L408 290 L408.5 276 L405.200 267 L391.8 260.400 Z"/></clipPath>
<clipPath id="bodyclip"><path d="M424.7 330 L424.7 395.5 L430.500 403 L430 452 L424.800 463 L424.700 536 C427 548 432 560 439 568.300 C445 574 451 578 458.200 581.300 C464 584 470 586.500 477.300 588.900 C492 592.500 508 594 525 594 C542 594 558 593 572.700 590 C580 588.500 586 586.500 591.800 584.100 C599 581 606 575 610.900 568.400 C615 561 618 552 619.300 540 L619.600 494 L617 480 L612 463.400 L609.200 444 L607.300 442.800 L607.300 390.600 C610 385 614 383 617.500 381 L617.500 330 Z"/></clipPath>
<clipPath id="k1"><path d="M424 330 L424.700 386.5 L448.4 397.8 L477.8 413.7 L500.4 425 L509.5 431.7 L512.9 440.8 L512 449 L545.700 448 L578 438 L578.400 429.5 L581.8 420.4 L590.900 406.9 L606.7 393.3 L618.500 384.300 L618.500 330 Z"/></clipPath>
<clipPath id="k2"><path d="M424 470 L427 478 Q429 490 434.900 498.400 Q443 508 455.200 514.300 Q466 521 477.800 525.600 Q490 529 500.400 527.800 L509.500 523.300 L507 516 L536.6 518 L579.600 505.500 L591 528 L602.200 526 L612 512 L620 498 L620.0 534.5 C617.0 544.5 615.0 548.5 612.0 552.5 C607.0 559.5 601.0 565.5 595.0 569.5 C588.0 573.5 581.0 576.5 573.0 578.5 C558.0 582.5 542.0 584.0 525.0 584.0 C508.0 584.0 492.0 582.0 477.0 578.0 C467.0 575.0 458.0 572.0 450.0 567.5 C444.0 563.5 439.0 559.5 435.0 554.5 C430.0 548.5 427.0 541.5 424.7 533.5 Z"/></clipPath>
<radialGradient id="lensg" cx="0.5" cy="0.62" r="0.6"><stop offset="0" stop-color="#b6ceb6"/><stop offset="0.5" stop-color="#96baa0"/><stop offset="1" stop-color="#789e88"/></radialGradient>
<linearGradient id="panelg" x1="0" x2="1" y1="0" y2="0"><stop offset="0" stop-color="#7c7c78"/><stop offset="0.5" stop-color="#73736f"/><stop offset="1" stop-color="#6a6a66"/></linearGradient>
<linearGradient id="bodyg" x1="0" x2="1" y1="0" y2="0"><stop offset="0" stop-color="#6c6c67"/><stop offset="0.12" stop-color="#7c7c77"/><stop offset="0.6" stop-color="#7e7e79"/><stop offset="0.9" stop-color="#74746f"/><stop offset="1" stop-color="#666661"/></linearGradient>
</defs>
<g clip-path="url(#bodyclip)">
<rect x="420" y="325" width="205" height="275" fill="url(#bodyg)"/>
<path d="M430.500 402 L425.300 389 L448.4 397.8 L477.800 413.700 L502.900 426.500 L512.700 434.300 L511.900 446 L506.800 447 L506.800 514.300 L430.500 470.400 Z" fill="#797974"/>
<path d="M425.300 387.500 L448.4 396.3 L477.800 412.200 L502.900 425 L511 431.500 L513.500 440 L511.900 446 L509 438 L500 430 L477 418 L448 402.500 L430.500 402 Z" fill="#8f8f8a"/>
<path d="M440 428 L470 432 L506 440 L506 452 L480 446 L452 444 L436 436 Z" fill="#878783" filter="url(#b3)"/>
<path d="M470 466 L506 474 L506 486 L480 482 Z" fill="#858581" filter="url(#b3)"/>
<path d="M432 406 L450 412 L470 424 L440 420 L432 416 Z" fill="#70706b" filter="url(#b3)"/>
<path d="M506.800 447.100 Q545 449.500 579.600 436.500 L579.600 505.200 Q545 518.500 506.800 514.300 Z" fill="url(#panelg)"/>
<path d="M579.800 422 Q583 410 607.300 390.600 L607.300 445 L581.200 512.900 L578.500 523.800 Z" fill="#7d7d78"/>
<path d="M582 424 Q590 408 606 396 L606 412 Q596 414 590 426 Z" fill="#8e8e89" filter="url(#b1)"/>
<path d="M607.300 449.700 L612 463.400 L617.500 484 L616.900 496 L611 512 L602.200 525.600 L590.900 527.800 L581.200 521 L581.200 512.900 Z" fill="#92928e"/>
<path d="M426 470 L431.500 471.300 L507.200 514.300 L510 520 L509.500 523.300 L500.400 527.800 Q490 529 477.800 525.600 Q466 521 455.200 514.300 Q443 508 434.900 498.400 Q429 490 427 478 Z" fill="#8d8d88"/>
<path d="M432 478 Q450 500 500 521" stroke="#a2a29d" stroke-width="2.500" fill="none" filter="url(#b1)"/>
<path d="M431.500 471.300 L507.200 514.300" stroke="#40403c" stroke-width="0.600" fill="none"/>
</g>
<g clip-path="url(#bodyclip)">
<path d="M424 330 L424.700 386.5 L448.4 397.8 L477.8 413.7 L500.4 425 L509.5 431.7 L512.9 440.8 L512 449 L545.700 448 L578 438 L578.400 429.5 L581.8 420.4 L590.900 406.9 L606.7 393.3 L618.500 384.300 L618.500 330 Z" fill="#84847f"/>
<path d="M424 470 L427 478 Q429 490 434.900 498.400 Q443 508 455.200 514.300 Q466 521 477.800 525.600 Q490 529 500.400 527.800 L509.500 523.300 L507 516 L536.6 518 L579.600 505.500 L591 528 L602.200 526 L612 512 L620 498 L620.0 534.5 C617.0 544.5 615.0 548.5 612.0 552.5 C607.0 559.5 601.0 565.5 595.0 569.5 C588.0 573.5 581.0 576.5 573.0 578.5 C558.0 582.5 542.0 584.0 525.0 584.0 C508.0 584.0 492.0 582.0 477.0 578.0 C467.0 575.0 458.0 572.0 450.0 567.5 C444.0 563.5 439.0 559.5 435.0 554.5 C430.0 548.5 427.0 541.5 424.7 533.5 Z" fill="#84847f"/>
<g clip-path="url(#k1)" fill="none" stroke="#161614" stroke-width="0.75">
<path d="M424.0 78.5 L424.4 89.2 L425.5 99.9 L427.3 110.5 L429.9 120.9 L433.1 131.3 L437.1 141.5 L441.6 151.6 L446.8 161.4 L452.6 171.0 L458.8 180.3 L465.6 189.4 L472.8 198.1 L480.3 206.5 L488.2 214.6 L496.3 222.4 L504.6 229.8 L513.0 236.9 L521.5 243.6 L530.0 249.9 L538.4 255.8 L546.7 261.4 L554.8 266.7 L562.7 271.6 L570.2 276.1 L577.4 280.4 L584.2 284.3 L590.4 288.0 L596.2 291.4 L601.4 294.6 L605.9 297.6 L609.9 300.4 L613.1 303.0 L615.7 305.5 L617.5 307.9 L618.6 310.3 L619.0 312.6 M424.0 312.6 L424.4 310.3 L425.5 307.9 L427.3 305.5 L429.9 303.0 L433.1 300.4 L437.1 297.6 L441.6 294.6 L446.8 291.4 L452.6 288.0 L458.8 284.3 L465.6 280.4 L472.8 276.1 L480.3 271.6 L488.2 266.7 L496.3 261.4 L504.6 255.8 L513.0 249.9 L521.5 243.6 L530.0 236.9 L538.4 229.8 L546.7 222.4 L554.8 214.6 L562.7 206.5 L570.2 198.1 L577.4 189.4 L584.2 180.3 L590.4 171.0 L596.2 161.4 L601.4 151.6 L605.9 141.5 L609.9 131.3 L613.1 120.9 L615.7 110.5 L617.5 99.9 L618.6 89.2 L619.0 78.5 M424.0 81.0 L424.4 91.7 L425.5 102.4 L427.3 113.0 L429.9 123.4 L433.1 133.8 L437.1 144.0 L441.6 154.1 L446.8 163.9 L452.6 173.5 L458.8 182.8 L465.6 191.9 L472.8 200.6 L480.3 209.0 L488.2 217.1 L496.3 224.9 L504.6 232.3 L513.0 239.4 L521.5 246.1 L530.0 252.4 L538.4 258.3 L546.7 263.9 L554.8 269.2 L562.7 274.1 L570.2 278.6 L577.4 282.9 L584.2 286.8 L590.4 290.5 L596.2 293.9 L601.4 297.1 L605.9 300.1 L609.9 302.9 L613.1 305.5 L615.7 308.0 L617.5 310.4 L618.6 312.8 L619.0 315.1 M424.0 315.1 L424.4 312.8 L425.5 310.4 L427.3 308.0 L429.9 305.5 L433.1 302.9 L437.1 300.1 L441.6 297.1 L446.8 293.9 L452.6 290.5 L458.8 286.8 L465.6 282.9 L472.8 278.6 L480.3 274.1 L488.2 269.2 L496.3 263.9 L504.6 258.3 L513.0 252.4 L521.5 246.1 L530.0 239.4 L538.4 232.3 L546.7 224.9 L554.8 217.1 L562.7 209.0 L570.2 200.6 L577.4 191.9 L584.2 182.8 L590.4 173.5 L596.2 163.9 L601.4 154.1 L605.9 144.0 L609.9 133.8 L613.1 123.4 L615.7 113.0 L617.5 102.4 L618.6 91.7 L619.0 81.0 M424.0 91.1 L424.4 101.8 L425.5 112.5 L427.3 123.1 L429.9 133.5 L433.1 143.9 L437.1 154.1 L441.6 164.2 L446.8 174.0 L452.6 183.6 L458.8 192.9 L465.6 202.0 L472.8 210.7 L480.3 219.1 L488.2 227.2 L496.3 235.0 L504.6 242.4 L513.0 249.5 L521.5 256.1 L530.0 262.5 L538.4 268.4 L546.7 274.0 L554.8 279.3 L562.7 284.2 L570.2 288.7 L577.4 293.0 L584.2 296.9 L590.4 300.6 L596.2 304.0 L601.4 307.2 L605.9 310.2 L609.9 313.0 L613.1 315.6 L615.7 318.1 L617.5 320.5 L618.6 322.9 L619.0 325.2 M424.0 325.2 L424.4 322.9 L425.5 320.5 L427.3 318.1 L429.9 315.6 L433.1 313.0 L437.1 310.2 L441.6 307.2 L446.8 304.0 L452.6 300.6 L458.8 296.9 L465.6 293.0 L472.8 288.7 L480.3 284.2 L488.2 279.3 L496.3 274.0 L504.6 268.4 L513.0 262.5 L521.5 256.1 L530.0 249.5 L538.4 242.4 L546.7 235.0 L554.8 227.2 L562.7 219.1 L570.2 210.7 L577.4 202.0 L584.2 192.9 L590.4 183.6 L596.2 174.0 L601.4 164.2 L605.9 154.1 L609.9 143.9 L613.1 133.5 L615.7 123.1 L617.5 112.5 L618.6 101.8 L619.0 91.1 M424.0 93.6 L424.4 104.3 L425.5 115.0 L427.3 125.6 L429.9 136.0 L433.1 146.4 L437.1 156.6 L441.6 166.7 L446.8 176.5 L452.6 186.1 L458.8 195.4 L465.6 204.5 L472.8 213.2 L480.3 221.6 L488.2 229.7 L496.3 237.5 L504.6 244.9 L513.0 252.0 L521.5 258.6 L530.0 265.0 L538.4 270.9 L546.7 276.5 L554.8 281.8 L562.7 286.7 L570.2 291.2 L577.4 295.5 L584.2 299.4 L590.4 303.1 L596.2 306.5 L601.4 309.7 L605.9 312.7 L609.9 315.5 L613.1 318.1 L615.7 320.6 L617.5 323.0 L618.6 325.4 L619.0 327.7 M424.0 327.7 L424.4 325.4 L425.5 323.0 L427.3 320.6 L429.9 318.1 L433.1 315.5 L437.1 312.7 L441.6 309.7 L446.8 306.5 L452.6 303.1 L458.8 299.4 L465.6 295.5 L472.8 291.2 L480.3 286.7 L488.2 281.8 L496.3 276.5 L504.6 270.9 L513.0 265.0 L521.5 258.6 L530.0 252.0 L538.4 244.9 L546.7 237.5 L554.8 229.7 L562.7 221.6 L570.2 213.2 L577.4 204.5 L584.2 195.4 L590.4 186.1 L596.2 176.5 L601.4 166.7 L605.9 156.6 L609.9 146.4 L613.1 136.0 L615.7 125.6 L617.5 115.0 L618.6 104.3 L619.0 93.6 M424.0 103.7 L424.4 114.4 L425.5 125.1 L427.3 135.7 L429.9 146.1 L433.1 156.5 L437.1 166.7 L441.6 176.8 L446.8 186.6 L452.6 196.2 L458.8 205.5 L465.6 214.6 L472.8 223.3 L480.3 231.7 L488.2 239.8 L496.3 247.6 L504.6 255.0 L513.0 262.1 L521.5 268.8 L530.0 275.1 L538.4 281.0 L546.7 286.6 L554.8 291.9 L562.7 296.8 L570.2 301.3 L577.4 305.6 L584.2 309.5 L590.4 313.2 L596.2 316.6 L601.4 319.8 L605.9 322.8 L609.9 325.6 L613.1 328.2 L615.7 330.7 L617.5 333.1 L618.6 335.5 L619.0 337.8 M424.0 337.8 L424.4 335.5 L425.5 333.1 L427.3 330.7 L429.9 328.2 L433.1 325.6 L437.1 322.8 L441.6 319.8 L446.8 316.6 L452.6 313.2 L458.8 309.5 L465.6 305.6 L472.8 301.3 L480.3 296.8 L488.2 291.9 L496.3 286.6 L504.6 281.0 L513.0 275.1 L521.5 268.8 L530.0 262.1 L538.4 255.0 L546.7 247.6 L554.8 239.8 L562.7 231.7 L570.2 223.3 L577.4 214.6 L584.2 205.5 L590.4 196.2 L596.2 186.6 L601.4 176.8 L605.9 166.7 L609.9 156.5 L613.1 146.1 L615.7 135.7 L617.5 125.1 L618.6 114.4 L619.0 103.7 M424.0 106.2 L424.4 116.9 L425.5 127.6 L427.3 138.2 L429.9 148.6 L433.1 159.0 L437.1 169.2 L441.6 179.3 L446.8 189.1 L452.6 198.7 L458.8 208.0 L465.6 217.1 L472.8 225.8 L480.3 234.2 L488.2 242.3 L496.3 250.1 L504.6 257.5 L513.0 264.6 L521.5 271.2 L530.0 277.6 L538.4 283.5 L546.7 289.1 L554.8 294.4 L562.7 299.3 L570.2 303.8 L577.4 308.1 L584.2 312.0 L590.4 315.7 L596.2 319.1 L601.4 322.3 L605.9 325.3 L609.9 328.1 L613.1 330.7 L615.7 333.2 L617.5 335.6 L618.6 338.0 L619.0 340.3 M424.0 340.3 L424.4 338.0 L425.5 335.6 L427.3 333.2 L429.9 330.7 L433.1 328.1 L437.1 325.3 L441.6 322.3 L446.8 319.1 L452.6 315.7 L458.8 312.0 L465.6 308.1 L472.8 303.8 L480.3 299.3 L488.2 294.4 L496.3 289.1 L504.6 283.5 L513.0 277.6 L521.5 271.2 L530.0 264.6 L538.4 257.5 L546.7 250.1 L554.8 242.3 L562.7 234.2 L570.2 225.8 L577.4 217.1 L584.2 208.0 L590.4 198.7 L596.2 189.1 L601.4 179.3 L605.9 169.2 L609.9 159.0 L613.1 148.6 L615.7 138.2 L617.5 127.6 L618.6 116.9 L619.0 106.2 M424.0 116.3 L424.4 127.0 L425.5 137.7 L427.3 148.3 L429.9 158.7 L433.1 169.1 L437.1 179.3 L441.6 189.4 L446.8 199.2 L452.6 208.8 L458.8 218.1 L465.6 227.2 L472.8 235.9 L480.3 244.3 L488.2 252.4 L496.3 260.2 L504.6 267.6 L513.0 274.7 L521.5 281.4 L530.0 287.7 L538.4 293.6 L546.7 299.2 L554.8 304.5 L562.7 309.4 L570.2 313.9 L577.4 318.2 L584.2 322.1 L590.4 325.8 L596.2 329.2 L601.4 332.4 L605.9 335.4 L609.9 338.2 L613.1 340.8 L615.7 343.3 L617.5 345.7 L618.6 348.1 L619.0 350.4 M424.0 350.4 L424.4 348.1 L425.5 345.7 L427.3 343.3 L429.9 340.8 L433.1 338.2 L437.1 335.4 L441.6 332.4 L446.8 329.2 L452.6 325.8 L458.8 322.1 L465.6 318.2 L472.8 313.9 L480.3 309.4 L488.2 304.5 L496.3 299.2 L504.6 293.6 L513.0 287.7 L521.5 281.4 L530.0 274.7 L538.4 267.6 L546.7 260.2 L554.8 252.4 L562.7 244.3 L570.2 235.9 L577.4 227.2 L584.2 218.1 L590.4 208.8 L596.2 199.2 L601.4 189.4 L605.9 179.3 L609.9 169.1 L613.1 158.7 L615.7 148.3 L617.5 137.7 L618.6 127.0 L619.0 116.3 M424.0 118.8 L424.4 129.5 L425.5 140.2 L427.3 150.8 L429.9 161.2 L433.1 171.6 L437.1 181.8 L441.6 191.9 L446.8 201.7 L452.6 211.3 L458.8 220.6 L465.6 229.7 L472.8 238.4 L480.3 246.8 L488.2 254.9 L496.3 262.7 L504.6 270.1 L513.0 277.2 L521.5 283.9 L530.0 290.2 L538.4 296.1 L546.7 301.7 L554.8 307.0 L562.7 311.9 L570.2 316.4 L577.4 320.7 L584.2 324.6 L590.4 328.3 L596.2 331.7 L601.4 334.9 L605.9 337.9 L609.9 340.7 L613.1 343.3 L615.7 345.8 L617.5 348.2 L618.6 350.6 L619.0 352.9 M424.0 352.9 L424.4 350.6 L425.5 348.2 L427.3 345.8 L429.9 343.3 L433.1 340.7 L437.1 337.9 L441.6 334.9 L446.8 331.7 L452.6 328.3 L458.8 324.6 L465.6 320.7 L472.8 316.4 L480.3 311.9 L488.2 307.0 L496.3 301.7 L504.6 296.1 L513.0 290.2 L521.5 283.9 L530.0 277.2 L538.4 270.1 L546.7 262.7 L554.8 254.9 L562.7 246.8 L570.2 238.4 L577.4 229.7 L584.2 220.6 L590.4 211.3 L596.2 201.7 L601.4 191.9 L605.9 181.8 L609.9 171.6 L613.1 161.2 L615.7 150.8 L617.5 140.2 L618.6 129.5 L619.0 118.8 M424.0 128.9 L424.4 139.6 L425.5 150.3 L427.3 160.9 L429.9 171.3 L433.1 181.7 L437.1 191.9 L441.6 202.0 L446.8 211.8 L452.6 221.4 L458.8 230.7 L465.6 239.8 L472.8 248.5 L480.3 256.9 L488.2 265.0 L496.3 272.8 L504.6 280.2 L513.0 287.3 L521.5 293.9 L530.0 300.3 L538.4 306.2 L546.7 311.8 L554.8 317.1 L562.7 322.0 L570.2 326.5 L577.4 330.8 L584.2 334.7 L590.4 338.4 L596.2 341.8 L601.4 345.0 L605.9 348.0 L609.9 350.8 L613.1 353.4 L615.7 355.9 L617.5 358.3 L618.6 360.7 L619.0 363.0 M424.0 363.0 L424.4 360.7 L425.5 358.3 L427.3 355.9 L429.9 353.4 L433.1 350.8 L437.1 348.0 L441.6 345.0 L446.8 341.8 L452.6 338.4 L458.8 334.7 L465.6 330.8 L472.8 326.5 L480.3 322.0 L488.2 317.1 L496.3 311.8 L504.6 306.2 L513.0 300.3 L521.5 293.9 L530.0 287.3 L538.4 280.2 L546.7 272.8 L554.8 265.0 L562.7 256.9 L570.2 248.5 L577.4 239.8 L584.2 230.7 L590.4 221.4 L596.2 211.8 L601.4 202.0 L605.9 191.9 L609.9 181.7 L613.1 171.3 L615.7 160.9 L617.5 150.3 L618.6 139.6 L619.0 128.9 M424.0 131.4 L424.4 142.1 L425.5 152.8 L427.3 163.4 L429.9 173.8 L433.1 184.2 L437.1 194.4 L441.6 204.5 L446.8 214.3 L452.6 223.9 L458.8 233.2 L465.6 242.3 L472.8 251.0 L480.3 259.4 L488.2 267.5 L496.3 275.3 L504.6 282.7 L513.0 289.8 L521.5 296.4 L530.0 302.8 L538.4 308.7 L546.7 314.3 L554.8 319.6 L562.7 324.5 L570.2 329.0 L577.4 333.3 L584.2 337.2 L590.4 340.9 L596.2 344.3 L601.4 347.5 L605.9 350.5 L609.9 353.3 L613.1 355.9 L615.7 358.4 L617.5 360.8 L618.6 363.2 L619.0 365.5 M424.0 365.5 L424.4 363.2 L425.5 360.8 L427.3 358.4 L429.9 355.9 L433.1 353.3 L437.1 350.5 L441.6 347.5 L446.8 344.3 L452.6 340.9 L458.8 337.2 L465.6 333.3 L472.8 329.0 L480.3 324.5 L488.2 319.6 L496.3 314.3 L504.6 308.7 L513.0 302.8 L521.5 296.4 L530.0 289.8 L538.4 282.7 L546.7 275.3 L554.8 267.5 L562.7 259.4 L570.2 251.0 L577.4 242.3 L584.2 233.2 L590.4 223.9 L596.2 214.3 L601.4 204.5 L605.9 194.4 L609.9 184.2 L613.1 173.8 L615.7 163.4 L617.5 152.8 L618.6 142.1 L619.0 131.4 M424.0 141.5 L424.4 152.2 L425.5 162.9 L427.3 173.5 L429.9 183.9 L433.1 194.3 L437.1 204.5 L441.6 214.6 L446.8 224.4 L452.6 234.0 L458.8 243.3 L465.6 252.4 L472.8 261.1 L480.3 269.5 L488.2 277.6 L496.3 285.4 L504.6 292.8 L513.0 299.9 L521.5 306.6 L530.0 312.9 L538.4 318.8 L546.7 324.4 L554.8 329.7 L562.7 334.6 L570.2 339.1 L577.4 343.4 L584.2 347.3 L590.4 351.0 L596.2 354.4 L601.4 357.6 L605.9 360.6 L609.9 363.4 L613.1 366.0 L615.7 368.5 L617.5 370.9 L618.6 373.3 L619.0 375.6 M424.0 375.6 L424.4 373.3 L425.5 370.9 L427.3 368.5 L429.9 366.0 L433.1 363.4 L437.1 360.6 L441.6 357.6 L446.8 354.4 L452.6 351.0 L458.8 347.3 L465.6 343.4 L472.8 339.1 L480.3 334.6 L488.2 329.7 L496.3 324.4 L504.6 318.8 L513.0 312.9 L521.5 306.6 L530.0 299.9 L538.4 292.8 L546.7 285.4 L554.8 277.6 L562.7 269.5 L570.2 261.1 L577.4 252.4 L584.2 243.3 L590.4 234.0 L596.2 224.4 L601.4 214.6 L605.9 204.5 L609.9 194.3 L613.1 183.9 L615.7 173.5 L617.5 162.9 L618.6 152.2 L619.0 141.5 M424.0 144.0 L424.4 154.7 L425.5 165.4 L427.3 176.0 L429.9 186.4 L433.1 196.8 L437.1 207.0 L441.6 217.1 L446.8 226.9 L452.6 236.5 L458.8 245.8 L465.6 254.9 L472.8 263.6 L480.3 272.0 L488.2 280.1 L496.3 287.9 L504.6 295.3 L513.0 302.4 L521.5 309.1 L530.0 315.4 L538.4 321.3 L546.7 326.9 L554.8 332.2 L562.7 337.1 L570.2 341.6 L577.4 345.9 L584.2 349.8 L590.4 353.5 L596.2 356.9 L601.4 360.1 L605.9 363.1 L609.9 365.9 L613.1 368.5 L615.7 371.0 L617.5 373.4 L618.6 375.8 L619.0 378.1 M424.0 378.1 L424.4 375.8 L425.5 373.4 L427.3 371.0 L429.9 368.5 L433.1 365.9 L437.1 363.1 L441.6 360.1 L446.8 356.9 L452.6 353.5 L458.8 349.8 L465.6 345.9 L472.8 341.6 L480.3 337.1 L488.2 332.2 L496.3 326.9 L504.6 321.3 L513.0 315.4 L521.5 309.1 L530.0 302.4 L538.4 295.3 L546.7 287.9 L554.8 280.1 L562.7 272.0 L570.2 263.6 L577.4 254.9 L584.2 245.8 L590.4 236.5 L596.2 226.9 L601.4 217.1 L605.9 207.0 L609.9 196.8 L613.1 186.4 L615.7 176.0 L617.5 165.4 L618.6 154.7 L619.0 144.0 M424.0 154.1 L424.4 164.8 L425.5 175.5 L427.3 186.1 L429.9 196.5 L433.1 206.9 L437.1 217.1 L441.6 227.2 L446.8 237.0 L452.6 246.6 L458.8 255.9 L465.6 265.0 L472.8 273.7 L480.3 282.1 L488.2 290.2 L496.3 298.0 L504.6 305.4 L513.0 312.5 L521.5 319.1 L530.0 325.5 L538.4 331.4 L546.7 337.0 L554.8 342.3 L562.7 347.2 L570.2 351.7 L577.4 356.0 L584.2 359.9 L590.4 363.6 L596.2 367.0 L601.4 370.2 L605.9 373.2 L609.9 376.0 L613.1 378.6 L615.7 381.1 L617.5 383.5 L618.6 385.9 L619.0 388.2 M424.0 388.2 L424.4 385.9 L425.5 383.5 L427.3 381.1 L429.9 378.6 L433.1 376.0 L437.1 373.2 L441.6 370.2 L446.8 367.0 L452.6 363.6 L458.8 359.9 L465.6 356.0 L472.8 351.7 L480.3 347.2 L488.2 342.3 L496.3 337.0 L504.6 331.4 L513.0 325.5 L521.5 319.1 L530.0 312.5 L538.4 305.4 L546.7 298.0 L554.8 290.2 L562.7 282.1 L570.2 273.7 L577.4 265.0 L584.2 255.9 L590.4 246.6 L596.2 237.0 L601.4 227.2 L605.9 217.1 L609.9 206.9 L613.1 196.5 L615.7 186.1 L617.5 175.5 L618.6 164.8 L619.0 154.1 M424.0 156.6 L424.4 167.3 L425.5 178.0 L427.3 188.6 L429.9 199.0 L433.1 209.4 L437.1 219.6 L441.6 229.7 L446.8 239.5 L452.6 249.1 L458.8 258.4 L465.6 267.5 L472.8 276.2 L480.3 284.6 L488.2 292.7 L496.3 300.5 L504.6 307.9 L513.0 315.0 L521.5 321.6 L530.0 328.0 L538.4 333.9 L546.7 339.5 L554.8 344.8 L562.7 349.7 L570.2 354.2 L577.4 358.5 L584.2 362.4 L590.4 366.1 L596.2 369.5 L601.4 372.7 L605.9 375.7 L609.9 378.5 L613.1 381.1 L615.7 383.6 L617.5 386.0 L618.6 388.4 L619.0 390.7 M424.0 390.7 L424.4 388.4 L425.5 386.0 L427.3 383.6 L429.9 381.1 L433.1 378.5 L437.1 375.7 L441.6 372.7 L446.8 369.5 L452.6 366.1 L458.8 362.4 L465.6 358.5 L472.8 354.2 L480.3 349.7 L488.2 344.8 L496.3 339.5 L504.6 333.9 L513.0 328.0 L521.5 321.6 L530.0 315.0 L538.4 307.9 L546.7 300.5 L554.8 292.7 L562.7 284.6 L570.2 276.2 L577.4 267.5 L584.2 258.4 L590.4 249.1 L596.2 239.5 L601.4 229.7 L605.9 219.6 L609.9 209.4 L613.1 199.0 L615.7 188.6 L617.5 178.0 L618.6 167.3 L619.0 156.6 M424.0 166.7 L424.4 177.4 L425.5 188.1 L427.3 198.7 L429.9 209.1 L433.1 219.5 L437.1 229.7 L441.6 239.8 L446.8 249.6 L452.6 259.2 L458.8 268.5 L465.6 277.6 L472.8 286.3 L480.3 294.7 L488.2 302.8 L496.3 310.6 L504.6 318.0 L513.0 325.1 L521.5 331.8 L530.0 338.1 L538.4 344.0 L546.7 349.6 L554.8 354.9 L562.7 359.8 L570.2 364.3 L577.4 368.6 L584.2 372.5 L590.4 376.2 L596.2 379.6 L601.4 382.8 L605.9 385.8 L609.9 388.6 L613.1 391.2 L615.7 393.7 L617.5 396.1 L618.6 398.5 L619.0 400.8 M424.0 400.8 L424.4 398.5 L425.5 396.1 L427.3 393.7 L429.9 391.2 L433.1 388.6 L437.1 385.8 L441.6 382.8 L446.8 379.6 L452.6 376.2 L458.8 372.5 L465.6 368.6 L472.8 364.3 L480.3 359.8 L488.2 354.9 L496.3 349.6 L504.6 344.0 L513.0 338.1 L521.5 331.8 L530.0 325.1 L538.4 318.0 L546.7 310.6 L554.8 302.8 L562.7 294.7 L570.2 286.3 L577.4 277.6 L584.2 268.5 L590.4 259.2 L596.2 249.6 L601.4 239.8 L605.9 229.7 L609.9 219.5 L613.1 209.1 L615.7 198.7 L617.5 188.1 L618.6 177.4 L619.0 166.7 M424.0 169.2 L424.4 179.9 L425.5 190.6 L427.3 201.2 L429.9 211.6 L433.1 222.0 L437.1 232.2 L441.6 242.3 L446.8 252.1 L452.6 261.7 L458.8 271.0 L465.6 280.1 L472.8 288.8 L480.3 297.2 L488.2 305.3 L496.3 313.1 L504.6 320.5 L513.0 327.6 L521.5 334.2 L530.0 340.6 L538.4 346.5 L546.7 352.1 L554.8 357.4 L562.7 362.3 L570.2 366.8 L577.4 371.1 L584.2 375.0 L590.4 378.7 L596.2 382.1 L601.4 385.3 L605.9 388.3 L609.9 391.1 L613.1 393.7 L615.7 396.2 L617.5 398.6 L618.6 401.0 L619.0 403.3 M424.0 403.3 L424.4 401.0 L425.5 398.6 L427.3 396.2 L429.9 393.7 L433.1 391.1 L437.1 388.3 L441.6 385.3 L446.8 382.1 L452.6 378.7 L458.8 375.0 L465.6 371.1 L472.8 366.8 L480.3 362.3 L488.2 357.4 L496.3 352.1 L504.6 346.5 L513.0 340.6 L521.5 334.2 L530.0 327.6 L538.4 320.5 L546.7 313.1 L554.8 305.3 L562.7 297.2 L570.2 288.8 L577.4 280.1 L584.2 271.0 L590.4 261.7 L596.2 252.1 L601.4 242.3 L605.9 232.2 L609.9 222.0 L613.1 211.6 L615.7 201.2 L617.5 190.6 L618.6 179.9 L619.0 169.2 M424.0 179.3 L424.4 190.0 L425.5 200.7 L427.3 211.3 L429.9 221.7 L433.1 232.1 L437.1 242.3 L441.6 252.4 L446.8 262.2 L452.6 271.8 L458.8 281.1 L465.6 290.2 L472.8 298.9 L480.3 307.3 L488.2 315.4 L496.3 323.2 L504.6 330.6 L513.0 337.7 L521.5 344.4 L530.0 350.7 L538.4 356.6 L546.7 362.2 L554.8 367.5 L562.7 372.4 L570.2 376.9 L577.4 381.2 L584.2 385.1 L590.4 388.8 L596.2 392.2 L601.4 395.4 L605.9 398.4 L609.9 401.2 L613.1 403.8 L615.7 406.3 L617.5 408.7 L618.6 411.1 L619.0 413.4 M424.0 413.4 L424.4 411.1 L425.5 408.7 L427.3 406.3 L429.9 403.8 L433.1 401.2 L437.1 398.4 L441.6 395.4 L446.8 392.2 L452.6 388.8 L458.8 385.1 L465.6 381.2 L472.8 376.9 L480.3 372.4 L488.2 367.5 L496.3 362.2 L504.6 356.6 L513.0 350.7 L521.5 344.4 L530.0 337.7 L538.4 330.6 L546.7 323.2 L554.8 315.4 L562.7 307.3 L570.2 298.9 L577.4 290.2 L584.2 281.1 L590.4 271.8 L596.2 262.2 L601.4 252.4 L605.9 242.3 L609.9 232.1 L613.1 221.7 L615.7 211.3 L617.5 200.7 L618.6 190.0 L619.0 179.3 M424.0 181.8 L424.4 192.5 L425.5 203.2 L427.3 213.8 L429.9 224.2 L433.1 234.6 L437.1 244.8 L441.6 254.9 L446.8 264.7 L452.6 274.3 L458.8 283.6 L465.6 292.7 L472.8 301.4 L480.3 309.8 L488.2 317.9 L496.3 325.7 L504.6 333.1 L513.0 340.2 L521.5 346.9 L530.0 353.2 L538.4 359.1 L546.7 364.7 L554.8 370.0 L562.7 374.9 L570.2 379.4 L577.4 383.7 L584.2 387.6 L590.4 391.3 L596.2 394.7 L601.4 397.9 L605.9 400.9 L609.9 403.7 L613.1 406.3 L615.7 408.8 L617.5 411.2 L618.6 413.6 L619.0 415.9 M424.0 415.9 L424.4 413.6 L425.5 411.2 L427.3 408.8 L429.9 406.3 L433.1 403.7 L437.1 400.9 L441.6 397.9 L446.8 394.7 L452.6 391.3 L458.8 387.6 L465.6 383.7 L472.8 379.4 L480.3 374.9 L488.2 370.0 L496.3 364.7 L504.6 359.1 L513.0 353.2 L521.5 346.9 L530.0 340.2 L538.4 333.1 L546.7 325.7 L554.8 317.9 L562.7 309.8 L570.2 301.4 L577.4 292.7 L584.2 283.6 L590.4 274.3 L596.2 264.7 L601.4 254.9 L605.9 244.8 L609.9 234.6 L613.1 224.2 L615.7 213.8 L617.5 203.2 L618.6 192.5 L619.0 181.8 M424.0 191.9 L424.4 202.6 L425.5 213.3 L427.3 223.9 L429.9 234.3 L433.1 244.7 L437.1 254.9 L441.6 265.0 L446.8 274.8 L452.6 284.4 L458.8 293.7 L465.6 302.8 L472.8 311.5 L480.3 319.9 L488.2 328.0 L496.3 335.8 L504.6 343.2 L513.0 350.3 L521.5 356.9 L530.0 363.3 L538.4 369.2 L546.7 374.8 L554.8 380.1 L562.7 385.0 L570.2 389.5 L577.4 393.8 L584.2 397.7 L590.4 401.4 L596.2 404.8 L601.4 408.0 L605.9 411.0 L609.9 413.8 L613.1 416.4 L615.7 418.9 L617.5 421.3 L618.6 423.7 L619.0 426.0 M424.0 426.0 L424.4 423.7 L425.5 421.3 L427.3 418.9 L429.9 416.4 L433.1 413.8 L437.1 411.0 L441.6 408.0 L446.8 404.8 L452.6 401.4 L458.8 397.7 L465.6 393.8 L472.8 389.5 L480.3 385.0 L488.2 380.1 L496.3 374.8 L504.6 369.2 L513.0 363.3 L521.5 356.9 L530.0 350.3 L538.4 343.2 L546.7 335.8 L554.8 328.0 L562.7 319.9 L570.2 311.5 L577.4 302.8 L584.2 293.7 L590.4 284.4 L596.2 274.8 L601.4 265.0 L605.9 254.9 L609.9 244.7 L613.1 234.3 L615.7 223.9 L617.5 213.3 L618.6 202.6 L619.0 191.9 M424.0 194.4 L424.4 205.1 L425.5 215.8 L427.3 226.4 L429.9 236.8 L433.1 247.2 L437.1 257.4 L441.6 267.5 L446.8 277.3 L452.6 286.9 L458.8 296.2 L465.6 305.3 L472.8 314.0 L480.3 322.4 L488.2 330.5 L496.3 338.3 L504.6 345.7 L513.0 352.8 L521.5 359.4 L530.0 365.8 L538.4 371.7 L546.7 377.3 L554.8 382.6 L562.7 387.5 L570.2 392.0 L577.4 396.3 L584.2 400.2 L590.4 403.9 L596.2 407.3 L601.4 410.5 L605.9 413.5 L609.9 416.3 L613.1 418.9 L615.7 421.4 L617.5 423.8 L618.6 426.2 L619.0 428.5 M424.0 428.5 L424.4 426.2 L425.5 423.8 L427.3 421.4 L429.9 418.9 L433.1 416.3 L437.1 413.5 L441.6 410.5 L446.8 407.3 L452.6 403.9 L458.8 400.2 L465.6 396.3 L472.8 392.0 L480.3 387.5 L488.2 382.6 L496.3 377.3 L504.6 371.7 L513.0 365.8 L521.5 359.4 L530.0 352.8 L538.4 345.7 L546.7 338.3 L554.8 330.5 L562.7 322.4 L570.2 314.0 L577.4 305.3 L584.2 296.2 L590.4 286.9 L596.2 277.3 L601.4 267.5 L605.9 257.4 L609.9 247.2 L613.1 236.8 L615.7 226.4 L617.5 215.8 L618.6 205.1 L619.0 194.4 M424.0 204.5 L424.4 215.2 L425.5 225.9 L427.3 236.5 L429.9 246.9 L433.1 257.3 L437.1 267.5 L441.6 277.6 L446.8 287.4 L452.6 297.0 L458.8 306.3 L465.6 315.4 L472.8 324.1 L480.3 332.5 L488.2 340.6 L496.3 348.4 L504.6 355.8 L513.0 362.9 L521.5 369.6 L530.0 375.9 L538.4 381.8 L546.7 387.4 L554.8 392.7 L562.7 397.6 L570.2 402.1 L577.4 406.4 L584.2 410.3 L590.4 414.0 L596.2 417.4 L601.4 420.6 L605.9 423.6 L609.9 426.4 L613.1 429.0 L615.7 431.5 L617.5 433.9 L618.6 436.3 L619.0 438.6 M424.0 438.6 L424.4 436.3 L425.5 433.9 L427.3 431.5 L429.9 429.0 L433.1 426.4 L437.1 423.6 L441.6 420.6 L446.8 417.4 L452.6 414.0 L458.8 410.3 L465.6 406.4 L472.8 402.1 L480.3 397.6 L488.2 392.7 L496.3 387.4 L504.6 381.8 L513.0 375.9 L521.5 369.6 L530.0 362.9 L538.4 355.8 L546.7 348.4 L554.8 340.6 L562.7 332.5 L570.2 324.1 L577.4 315.4 L584.2 306.3 L590.4 297.0 L596.2 287.4 L601.4 277.6 L605.9 267.5 L609.9 257.3 L613.1 246.9 L615.7 236.5 L617.5 225.9 L618.6 215.2 L619.0 204.5 M424.0 207.0 L424.4 217.7 L425.5 228.4 L427.3 239.0 L429.9 249.4 L433.1 259.8 L437.1 270.0 L441.6 280.1 L446.8 289.9 L452.6 299.5 L458.8 308.8 L465.6 317.9 L472.8 326.6 L480.3 335.0 L488.2 343.1 L496.3 350.9 L504.6 358.3 L513.0 365.4 L521.5 372.1 L530.0 378.4 L538.4 384.3 L546.7 389.9 L554.8 395.2 L562.7 400.1 L570.2 404.6 L577.4 408.9 L584.2 412.8 L590.4 416.5 L596.2 419.9 L601.4 423.1 L605.9 426.1 L609.9 428.9 L613.1 431.5 L615.7 434.0 L617.5 436.4 L618.6 438.8 L619.0 441.1 M424.0 441.1 L424.4 438.8 L425.5 436.4 L427.3 434.0 L429.9 431.5 L433.1 428.9 L437.1 426.1 L441.6 423.1 L446.8 419.9 L452.6 416.5 L458.8 412.8 L465.6 408.9 L472.8 404.6 L480.3 400.1 L488.2 395.2 L496.3 389.9 L504.6 384.3 L513.0 378.4 L521.5 372.1 L530.0 365.4 L538.4 358.3 L546.7 350.9 L554.8 343.1 L562.7 335.0 L570.2 326.6 L577.4 317.9 L584.2 308.8 L590.4 299.5 L596.2 289.9 L601.4 280.1 L605.9 270.0 L609.9 259.8 L613.1 249.4 L615.7 239.0 L617.5 228.4 L618.6 217.7 L619.0 207.0 M424.0 217.1 L424.4 227.8 L425.5 238.5 L427.3 249.1 L429.9 259.5 L433.1 269.9 L437.1 280.1 L441.6 290.2 L446.8 300.0 L452.6 309.6 L458.8 318.9 L465.6 328.0 L472.8 336.7 L480.3 345.1 L488.2 353.2 L496.3 361.0 L504.6 368.4 L513.0 375.5 L521.5 382.1 L530.0 388.5 L538.4 394.4 L546.7 400.0 L554.8 405.3 L562.7 410.2 L570.2 414.7 L577.4 419.0 L584.2 422.9 L590.4 426.6 L596.2 430.0 L601.4 433.2 L605.9 436.2 L609.9 439.0 L613.1 441.6 L615.7 444.1 L617.5 446.5 L618.6 448.9 L619.0 451.2 M424.0 451.2 L424.4 448.9 L425.5 446.5 L427.3 444.1 L429.9 441.6 L433.1 439.0 L437.1 436.2 L441.6 433.2 L446.8 430.0 L452.6 426.6 L458.8 422.9 L465.6 419.0 L472.8 414.7 L480.3 410.2 L488.2 405.3 L496.3 400.0 L504.6 394.4 L513.0 388.5 L521.5 382.1 L530.0 375.5 L538.4 368.4 L546.7 361.0 L554.8 353.2 L562.7 345.1 L570.2 336.7 L577.4 328.0 L584.2 318.9 L590.4 309.6 L596.2 300.0 L601.4 290.2 L605.9 280.1 L609.9 269.9 L613.1 259.5 L615.7 249.1 L617.5 238.5 L618.6 227.8 L619.0 217.1 M424.0 219.6 L424.4 230.3 L425.5 241.0 L427.3 251.6 L429.9 262.0 L433.1 272.4 L437.1 282.6 L441.6 292.7 L446.8 302.5 L452.6 312.1 L458.8 321.4 L465.6 330.5 L472.8 339.2 L480.3 347.6 L488.2 355.7 L496.3 363.5 L504.6 370.9 L513.0 378.0 L521.5 384.6 L530.0 391.0 L538.4 396.9 L546.7 402.5 L554.8 407.8 L562.7 412.7 L570.2 417.2 L577.4 421.5 L584.2 425.4 L590.4 429.1 L596.2 432.5 L601.4 435.7 L605.9 438.7 L609.9 441.5 L613.1 444.1 L615.7 446.6 L617.5 449.0 L618.6 451.4 L619.0 453.7 M424.0 453.7 L424.4 451.4 L425.5 449.0 L427.3 446.6 L429.9 444.1 L433.1 441.5 L437.1 438.7 L441.6 435.7 L446.8 432.5 L452.6 429.1 L458.8 425.4 L465.6 421.5 L472.8 417.2 L480.3 412.7 L488.2 407.8 L496.3 402.5 L504.6 396.9 L513.0 391.0 L521.5 384.6 L530.0 378.0 L538.4 370.9 L546.7 363.5 L554.8 355.7 L562.7 347.6 L570.2 339.2 L577.4 330.5 L584.2 321.4 L590.4 312.1 L596.2 302.5 L601.4 292.7 L605.9 282.6 L609.9 272.4 L613.1 262.0 L615.7 251.6 L617.5 241.0 L618.6 230.3 L619.0 219.6 M424.0 229.7 L424.4 240.4 L425.5 251.1 L427.3 261.7 L429.9 272.1 L433.1 282.5 L437.1 292.7 L441.6 302.8 L446.8 312.6 L452.6 322.2 L458.8 331.5 L465.6 340.6 L472.8 349.3 L480.3 357.7 L488.2 365.8 L496.3 373.6 L504.6 381.0 L513.0 388.1 L521.5 394.8 L530.0 401.1 L538.4 407.0 L546.7 412.6 L554.8 417.9 L562.7 422.8 L570.2 427.3 L577.4 431.6 L584.2 435.5 L590.4 439.2 L596.2 442.6 L601.4 445.8 L605.9 448.8 L609.9 451.6 L613.1 454.2 L615.7 456.7 L617.5 459.1 L618.6 461.5 L619.0 463.8 M424.0 463.8 L424.4 461.5 L425.5 459.1 L427.3 456.7 L429.9 454.2 L433.1 451.6 L437.1 448.8 L441.6 445.8 L446.8 442.6 L452.6 439.2 L458.8 435.5 L465.6 431.6 L472.8 427.3 L480.3 422.8 L488.2 417.9 L496.3 412.6 L504.6 407.0 L513.0 401.1 L521.5 394.8 L530.0 388.1 L538.4 381.0 L546.7 373.6 L554.8 365.8 L562.7 357.7 L570.2 349.3 L577.4 340.6 L584.2 331.5 L590.4 322.2 L596.2 312.6 L601.4 302.8 L605.9 292.7 L609.9 282.5 L613.1 272.1 L615.7 261.7 L617.5 251.1 L618.6 240.4 L619.0 229.7 M424.0 232.2 L424.4 242.9 L425.5 253.6 L427.3 264.2 L429.9 274.6 L433.1 285.0 L437.1 295.2 L441.6 305.3 L446.8 315.1 L452.6 324.7 L458.8 334.0 L465.6 343.1 L472.8 351.8 L480.3 360.2 L488.2 368.3 L496.3 376.1 L504.6 383.5 L513.0 390.6 L521.5 397.2 L530.0 403.6 L538.4 409.5 L546.7 415.1 L554.8 420.4 L562.7 425.3 L570.2 429.8 L577.4 434.1 L584.2 438.0 L590.4 441.7 L596.2 445.1 L601.4 448.3 L605.9 451.3 L609.9 454.1 L613.1 456.7 L615.7 459.2 L617.5 461.6 L618.6 464.0 L619.0 466.3 M424.0 466.3 L424.4 464.0 L425.5 461.6 L427.3 459.2 L429.9 456.7 L433.1 454.1 L437.1 451.3 L441.6 448.3 L446.8 445.1 L452.6 441.7 L458.8 438.0 L465.6 434.1 L472.8 429.8 L480.3 425.3 L488.2 420.4 L496.3 415.1 L504.6 409.5 L513.0 403.6 L521.5 397.2 L530.0 390.6 L538.4 383.5 L546.7 376.1 L554.8 368.3 L562.7 360.2 L570.2 351.8 L577.4 343.1 L584.2 334.0 L590.4 324.7 L596.2 315.1 L601.4 305.3 L605.9 295.2 L609.9 285.0 L613.1 274.6 L615.7 264.2 L617.5 253.6 L618.6 242.9 L619.0 232.2 M424.0 242.3 L424.4 253.0 L425.5 263.7 L427.3 274.3 L429.9 284.7 L433.1 295.1 L437.1 305.3 L441.6 315.4 L446.8 325.2 L452.6 334.8 L458.8 344.1 L465.6 353.2 L472.8 361.9 L480.3 370.3 L488.2 378.4 L496.3 386.2 L504.6 393.6 L513.0 400.7 L521.5 407.4 L530.0 413.7 L538.4 419.6 L546.7 425.2 L554.8 430.5 L562.7 435.4 L570.2 439.9 L577.4 444.2 L584.2 448.1 L590.4 451.8 L596.2 455.2 L601.4 458.4 L605.9 461.4 L609.9 464.2 L613.1 466.8 L615.7 469.3 L617.5 471.7 L618.6 474.1 L619.0 476.4 M424.0 476.4 L424.4 474.1 L425.5 471.7 L427.3 469.3 L429.9 466.8 L433.1 464.2 L437.1 461.4 L441.6 458.4 L446.8 455.2 L452.6 451.8 L458.8 448.1 L465.6 444.2 L472.8 439.9 L480.3 435.4 L488.2 430.5 L496.3 425.2 L504.6 419.6 L513.0 413.7 L521.5 407.4 L530.0 400.7 L538.4 393.6 L546.7 386.2 L554.8 378.4 L562.7 370.3 L570.2 361.9 L577.4 353.2 L584.2 344.1 L590.4 334.8 L596.2 325.2 L601.4 315.4 L605.9 305.3 L609.9 295.1 L613.1 284.7 L615.7 274.3 L617.5 263.7 L618.6 253.0 L619.0 242.3 M424.0 244.8 L424.4 255.5 L425.5 266.2 L427.3 276.8 L429.9 287.2 L433.1 297.6 L437.1 307.8 L441.6 317.9 L446.8 327.7 L452.6 337.3 L458.8 346.6 L465.6 355.7 L472.8 364.4 L480.3 372.8 L488.2 380.9 L496.3 388.7 L504.6 396.1 L513.0 403.2 L521.5 409.9 L530.0 416.2 L538.4 422.1 L546.7 427.7 L554.8 433.0 L562.7 437.9 L570.2 442.4 L577.4 446.7 L584.2 450.6 L590.4 454.3 L596.2 457.7 L601.4 460.9 L605.9 463.9 L609.9 466.7 L613.1 469.3 L615.7 471.8 L617.5 474.2 L618.6 476.6 L619.0 478.9 M424.0 478.9 L424.4 476.6 L425.5 474.2 L427.3 471.8 L429.9 469.3 L433.1 466.7 L437.1 463.9 L441.6 460.9 L446.8 457.7 L452.6 454.3 L458.8 450.6 L465.6 446.7 L472.8 442.4 L480.3 437.9 L488.2 433.0 L496.3 427.7 L504.6 422.1 L513.0 416.2 L521.5 409.9 L530.0 403.2 L538.4 396.1 L546.7 388.7 L554.8 380.9 L562.7 372.8 L570.2 364.4 L577.4 355.7 L584.2 346.6 L590.4 337.3 L596.2 327.7 L601.4 317.9 L605.9 307.8 L609.9 297.6 L613.1 287.2 L615.7 276.8 L617.5 266.2 L618.6 255.5 L619.0 244.8 M424.0 254.9 L424.4 265.6 L425.5 276.3 L427.3 286.9 L429.9 297.3 L433.1 307.7 L437.1 317.9 L441.6 328.0 L446.8 337.8 L452.6 347.4 L458.8 356.7 L465.6 365.8 L472.8 374.5 L480.3 382.9 L488.2 391.0 L496.3 398.8 L504.6 406.2 L513.0 413.3 L521.5 419.9 L530.0 426.3 L538.4 432.2 L546.7 437.8 L554.8 443.1 L562.7 448.0 L570.2 452.5 L577.4 456.8 L584.2 460.7 L590.4 464.4 L596.2 467.8 L601.4 471.0 L605.9 474.0 L609.9 476.8 L613.1 479.4 L615.7 481.9 L617.5 484.3 L618.6 486.7 L619.0 489.0 M424.0 489.0 L424.4 486.7 L425.5 484.3 L427.3 481.9 L429.9 479.4 L433.1 476.8 L437.1 474.0 L441.6 471.0 L446.8 467.8 L452.6 464.4 L458.8 460.7 L465.6 456.8 L472.8 452.5 L480.3 448.0 L488.2 443.1 L496.3 437.8 L504.6 432.2 L513.0 426.3 L521.5 419.9 L530.0 413.3 L538.4 406.2 L546.7 398.8 L554.8 391.0 L562.7 382.9 L570.2 374.5 L577.4 365.8 L584.2 356.7 L590.4 347.4 L596.2 337.8 L601.4 328.0 L605.9 317.9 L609.9 307.7 L613.1 297.3 L615.7 286.9 L617.5 276.3 L618.6 265.6 L619.0 254.9 M424.0 257.4 L424.4 268.1 L425.5 278.8 L427.3 289.4 L429.9 299.8 L433.1 310.2 L437.1 320.4 L441.6 330.5 L446.8 340.3 L452.6 349.9 L458.8 359.2 L465.6 368.3 L472.8 377.0 L480.3 385.4 L488.2 393.5 L496.3 401.3 L504.6 408.7 L513.0 415.8 L521.5 422.4 L530.0 428.8 L538.4 434.7 L546.7 440.3 L554.8 445.6 L562.7 450.5 L570.2 455.0 L577.4 459.3 L584.2 463.2 L590.4 466.9 L596.2 470.3 L601.4 473.5 L605.9 476.5 L609.9 479.3 L613.1 481.9 L615.7 484.4 L617.5 486.8 L618.6 489.2 L619.0 491.5 M424.0 491.5 L424.4 489.2 L425.5 486.8 L427.3 484.4 L429.9 481.9 L433.1 479.3 L437.1 476.5 L441.6 473.5 L446.8 470.3 L452.6 466.9 L458.8 463.2 L465.6 459.3 L472.8 455.0 L480.3 450.5 L488.2 445.6 L496.3 440.3 L504.6 434.7 L513.0 428.8 L521.5 422.4 L530.0 415.8 L538.4 408.7 L546.7 401.3 L554.8 393.5 L562.7 385.4 L570.2 377.0 L577.4 368.3 L584.2 359.2 L590.4 349.9 L596.2 340.3 L601.4 330.5 L605.9 320.4 L609.9 310.2 L613.1 299.8 L615.7 289.4 L617.5 278.8 L618.6 268.1 L619.0 257.4 M424.0 267.5 L424.4 278.2 L425.5 288.9 L427.3 299.5 L429.9 309.9 L433.1 320.3 L437.1 330.5 L441.6 340.6 L446.8 350.4 L452.6 360.0 L458.8 369.3 L465.6 378.4 L472.8 387.1 L480.3 395.5 L488.2 403.6 L496.3 411.4 L504.6 418.8 L513.0 425.9 L521.5 432.6 L530.0 438.9 L538.4 444.8 L546.7 450.4 L554.8 455.7 L562.7 460.6 L570.2 465.1 L577.4 469.4 L584.2 473.3 L590.4 477.0 L596.2 480.4 L601.4 483.6 L605.9 486.6 L609.9 489.4 L613.1 492.0 L615.7 494.5 L617.5 496.9 L618.6 499.3 L619.0 501.6 M424.0 501.6 L424.4 499.3 L425.5 496.9 L427.3 494.5 L429.9 492.0 L433.1 489.4 L437.1 486.6 L441.6 483.6 L446.8 480.4 L452.6 477.0 L458.8 473.3 L465.6 469.4 L472.8 465.1 L480.3 460.6 L488.2 455.7 L496.3 450.4 L504.6 444.8 L513.0 438.9 L521.5 432.6 L530.0 425.9 L538.4 418.8 L546.7 411.4 L554.8 403.6 L562.7 395.5 L570.2 387.1 L577.4 378.4 L584.2 369.3 L590.4 360.0 L596.2 350.4 L601.4 340.6 L605.9 330.5 L609.9 320.3 L613.1 309.9 L615.7 299.5 L617.5 288.9 L618.6 278.2 L619.0 267.5 M424.0 270.0 L424.4 280.7 L425.5 291.4 L427.3 302.0 L429.9 312.4 L433.1 322.8 L437.1 333.0 L441.6 343.1 L446.8 352.9 L452.6 362.5 L458.8 371.8 L465.6 380.9 L472.8 389.6 L480.3 398.0 L488.2 406.1 L496.3 413.9 L504.6 421.3 L513.0 428.4 L521.5 435.1 L530.0 441.4 L538.4 447.3 L546.7 452.9 L554.8 458.2 L562.7 463.1 L570.2 467.6 L577.4 471.9 L584.2 475.8 L590.4 479.5 L596.2 482.9 L601.4 486.1 L605.9 489.1 L609.9 491.9 L613.1 494.5 L615.7 497.0 L617.5 499.4 L618.6 501.8 L619.0 504.1 M424.0 504.1 L424.4 501.8 L425.5 499.4 L427.3 497.0 L429.9 494.5 L433.1 491.9 L437.1 489.1 L441.6 486.1 L446.8 482.9 L452.6 479.5 L458.8 475.8 L465.6 471.9 L472.8 467.6 L480.3 463.1 L488.2 458.2 L496.3 452.9 L504.6 447.3 L513.0 441.4 L521.5 435.1 L530.0 428.4 L538.4 421.3 L546.7 413.9 L554.8 406.1 L562.7 398.0 L570.2 389.6 L577.4 380.9 L584.2 371.8 L590.4 362.5 L596.2 352.9 L601.4 343.1 L605.9 333.0 L609.9 322.8 L613.1 312.4 L615.7 302.0 L617.5 291.4 L618.6 280.7 L619.0 270.0 M424.0 280.1 L424.4 290.8 L425.5 301.5 L427.3 312.1 L429.9 322.5 L433.1 332.9 L437.1 343.1 L441.6 353.2 L446.8 363.0 L452.6 372.6 L458.8 381.9 L465.6 391.0 L472.8 399.7 L480.3 408.1 L488.2 416.2 L496.3 424.0 L504.6 431.4 L513.0 438.5 L521.5 445.1 L530.0 451.5 L538.4 457.4 L546.7 463.0 L554.8 468.3 L562.7 473.2 L570.2 477.7 L577.4 482.0 L584.2 485.9 L590.4 489.6 L596.2 493.0 L601.4 496.2 L605.9 499.2 L609.9 502.0 L613.1 504.6 L615.7 507.1 L617.5 509.5 L618.6 511.9 L619.0 514.2 M424.0 514.2 L424.4 511.9 L425.5 509.5 L427.3 507.1 L429.9 504.6 L433.1 502.0 L437.1 499.2 L441.6 496.2 L446.8 493.0 L452.6 489.6 L458.8 485.9 L465.6 482.0 L472.8 477.7 L480.3 473.2 L488.2 468.3 L496.3 463.0 L504.6 457.4 L513.0 451.5 L521.5 445.1 L530.0 438.5 L538.4 431.4 L546.7 424.0 L554.8 416.2 L562.7 408.1 L570.2 399.7 L577.4 391.0 L584.2 381.9 L590.4 372.6 L596.2 363.0 L601.4 353.2 L605.9 343.1 L609.9 332.9 L613.1 322.5 L615.7 312.1 L617.5 301.5 L618.6 290.8 L619.0 280.1 M424.0 282.6 L424.4 293.3 L425.5 304.0 L427.3 314.6 L429.9 325.0 L433.1 335.4 L437.1 345.6 L441.6 355.7 L446.8 365.5 L452.6 375.1 L458.8 384.4 L465.6 393.5 L472.8 402.2 L480.3 410.6 L488.2 418.7 L496.3 426.5 L504.6 433.9 L513.0 441.0 L521.5 447.6 L530.0 454.0 L538.4 459.9 L546.7 465.5 L554.8 470.8 L562.7 475.7 L570.2 480.2 L577.4 484.5 L584.2 488.4 L590.4 492.1 L596.2 495.5 L601.4 498.7 L605.9 501.7 L609.9 504.5 L613.1 507.1 L615.7 509.6 L617.5 512.0 L618.6 514.4 L619.0 516.7 M424.0 516.7 L424.4 514.4 L425.5 512.0 L427.3 509.6 L429.9 507.1 L433.1 504.5 L437.1 501.7 L441.6 498.7 L446.8 495.5 L452.6 492.1 L458.8 488.4 L465.6 484.5 L472.8 480.2 L480.3 475.7 L488.2 470.8 L496.3 465.5 L504.6 459.9 L513.0 454.0 L521.5 447.6 L530.0 441.0 L538.4 433.9 L546.7 426.5 L554.8 418.7 L562.7 410.6 L570.2 402.2 L577.4 393.5 L584.2 384.4 L590.4 375.1 L596.2 365.5 L601.4 355.7 L605.9 345.6 L609.9 335.4 L613.1 325.0 L615.7 314.6 L617.5 304.0 L618.6 293.3 L619.0 282.6 M424.0 292.7 L424.4 303.4 L425.5 314.1 L427.3 324.7 L429.9 335.1 L433.1 345.5 L437.1 355.7 L441.6 365.8 L446.8 375.6 L452.6 385.2 L458.8 394.5 L465.6 403.6 L472.8 412.3 L480.3 420.7 L488.2 428.8 L496.3 436.6 L504.6 444.0 L513.0 451.1 L521.5 457.8 L530.0 464.1 L538.4 470.0 L546.7 475.6 L554.8 480.9 L562.7 485.8 L570.2 490.3 L577.4 494.6 L584.2 498.5 L590.4 502.2 L596.2 505.6 L601.4 508.8 L605.9 511.8 L609.9 514.6 L613.1 517.2 L615.7 519.7 L617.5 522.1 L618.6 524.5 L619.0 526.8 M424.0 526.8 L424.4 524.5 L425.5 522.1 L427.3 519.7 L429.9 517.2 L433.1 514.6 L437.1 511.8 L441.6 508.8 L446.8 505.6 L452.6 502.2 L458.8 498.5 L465.6 494.6 L472.8 490.3 L480.3 485.8 L488.2 480.9 L496.3 475.6 L504.6 470.0 L513.0 464.1 L521.5 457.8 L530.0 451.1 L538.4 444.0 L546.7 436.6 L554.8 428.8 L562.7 420.7 L570.2 412.3 L577.4 403.6 L584.2 394.5 L590.4 385.2 L596.2 375.6 L601.4 365.8 L605.9 355.7 L609.9 345.5 L613.1 335.1 L615.7 324.7 L617.5 314.1 L618.6 303.4 L619.0 292.7 M424.0 295.2 L424.4 305.9 L425.5 316.6 L427.3 327.2 L429.9 337.6 L433.1 348.0 L437.1 358.2 L441.6 368.3 L446.8 378.1 L452.6 387.7 L458.8 397.0 L465.6 406.1 L472.8 414.8 L480.3 423.2 L488.2 431.3 L496.3 439.1 L504.6 446.5 L513.0 453.6 L521.5 460.2 L530.0 466.6 L538.4 472.5 L546.7 478.1 L554.8 483.4 L562.7 488.3 L570.2 492.8 L577.4 497.1 L584.2 501.0 L590.4 504.7 L596.2 508.1 L601.4 511.3 L605.9 514.3 L609.9 517.1 L613.1 519.7 L615.7 522.2 L617.5 524.6 L618.6 527.0 L619.0 529.3 M424.0 529.3 L424.4 527.0 L425.5 524.6 L427.3 522.2 L429.9 519.7 L433.1 517.1 L437.1 514.3 L441.6 511.3 L446.8 508.1 L452.6 504.7 L458.8 501.0 L465.6 497.1 L472.8 492.8 L480.3 488.3 L488.2 483.4 L496.3 478.1 L504.6 472.5 L513.0 466.6 L521.5 460.2 L530.0 453.6 L538.4 446.5 L546.7 439.1 L554.8 431.3 L562.7 423.2 L570.2 414.8 L577.4 406.1 L584.2 397.0 L590.4 387.7 L596.2 378.1 L601.4 368.3 L605.9 358.2 L609.9 348.0 L613.1 337.6 L615.7 327.2 L617.5 316.6 L618.6 305.9 L619.0 295.2 M424.0 305.3 L424.4 316.0 L425.5 326.7 L427.3 337.3 L429.9 347.7 L433.1 358.1 L437.1 368.3 L441.6 378.4 L446.8 388.2 L452.6 397.8 L458.8 407.1 L465.6 416.2 L472.8 424.9 L480.3 433.3 L488.2 441.4 L496.3 449.2 L504.6 456.6 L513.0 463.7 L521.5 470.4 L530.0 476.7 L538.4 482.6 L546.7 488.2 L554.8 493.5 L562.7 498.4 L570.2 502.9 L577.4 507.2 L584.2 511.1 L590.4 514.8 L596.2 518.2 L601.4 521.4 L605.9 524.4 L609.9 527.2 L613.1 529.8 L615.7 532.3 L617.5 534.7 L618.6 537.1 L619.0 539.4 M424.0 539.4 L424.4 537.1 L425.5 534.7 L427.3 532.3 L429.9 529.8 L433.1 527.2 L437.1 524.4 L441.6 521.4 L446.8 518.2 L452.6 514.8 L458.8 511.1 L465.6 507.2 L472.8 502.9 L480.3 498.4 L488.2 493.5 L496.3 488.2 L504.6 482.6 L513.0 476.7 L521.5 470.4 L530.0 463.7 L538.4 456.6 L546.7 449.2 L554.8 441.4 L562.7 433.3 L570.2 424.9 L577.4 416.2 L584.2 407.1 L590.4 397.8 L596.2 388.2 L601.4 378.4 L605.9 368.3 L609.9 358.1 L613.1 347.7 L615.7 337.3 L617.5 326.7 L618.6 316.0 L619.0 305.3 M424.0 307.8 L424.4 318.5 L425.5 329.2 L427.3 339.8 L429.9 350.2 L433.1 360.6 L437.1 370.8 L441.6 380.9 L446.8 390.7 L452.6 400.3 L458.8 409.6 L465.6 418.7 L472.8 427.4 L480.3 435.8 L488.2 443.9 L496.3 451.7 L504.6 459.1 L513.0 466.2 L521.5 472.9 L530.0 479.2 L538.4 485.1 L546.7 490.7 L554.8 496.0 L562.7 500.9 L570.2 505.4 L577.4 509.7 L584.2 513.6 L590.4 517.3 L596.2 520.7 L601.4 523.9 L605.9 526.9 L609.9 529.7 L613.1 532.3 L615.7 534.8 L617.5 537.2 L618.6 539.6 L619.0 541.9 M424.0 541.9 L424.4 539.6 L425.5 537.2 L427.3 534.8 L429.9 532.3 L433.1 529.7 L437.1 526.9 L441.6 523.9 L446.8 520.7 L452.6 517.3 L458.8 513.6 L465.6 509.7 L472.8 505.4 L480.3 500.9 L488.2 496.0 L496.3 490.7 L504.6 485.1 L513.0 479.2 L521.5 472.9 L530.0 466.2 L538.4 459.1 L546.7 451.7 L554.8 443.9 L562.7 435.8 L570.2 427.4 L577.4 418.7 L584.2 409.6 L590.4 400.3 L596.2 390.7 L601.4 380.9 L605.9 370.8 L609.9 360.6 L613.1 350.2 L615.7 339.8 L617.5 329.2 L618.6 318.5 L619.0 307.8 M424.0 317.9 L424.4 328.6 L425.5 339.3 L427.3 349.9 L429.9 360.3 L433.1 370.7 L437.1 380.9 L441.6 391.0 L446.8 400.8 L452.6 410.4 L458.8 419.7 L465.6 428.8 L472.8 437.5 L480.3 445.9 L488.2 454.0 L496.3 461.8 L504.6 469.2 L513.0 476.3 L521.5 482.9 L530.0 489.3 L538.4 495.2 L546.7 500.8 L554.8 506.1 L562.7 511.0 L570.2 515.5 L577.4 519.8 L584.2 523.7 L590.4 527.4 L596.2 530.8 L601.4 534.0 L605.9 537.0 L609.9 539.8 L613.1 542.4 L615.7 544.9 L617.5 547.3 L618.6 549.7 L619.0 552.0 M424.0 552.0 L424.4 549.7 L425.5 547.3 L427.3 544.9 L429.9 542.4 L433.1 539.8 L437.1 537.0 L441.6 534.0 L446.8 530.8 L452.6 527.4 L458.8 523.7 L465.6 519.8 L472.8 515.5 L480.3 511.0 L488.2 506.1 L496.3 500.8 L504.6 495.2 L513.0 489.3 L521.5 482.9 L530.0 476.3 L538.4 469.2 L546.7 461.8 L554.8 454.0 L562.7 445.9 L570.2 437.5 L577.4 428.8 L584.2 419.7 L590.4 410.4 L596.2 400.8 L601.4 391.0 L605.9 380.9 L609.9 370.7 L613.1 360.3 L615.7 349.9 L617.5 339.3 L618.6 328.6 L619.0 317.9 M424.0 320.4 L424.4 331.1 L425.5 341.8 L427.3 352.4 L429.9 362.8 L433.1 373.2 L437.1 383.4 L441.6 393.5 L446.8 403.3 L452.6 412.9 L458.8 422.2 L465.6 431.3 L472.8 440.0 L480.3 448.4 L488.2 456.5 L496.3 464.3 L504.6 471.7 L513.0 478.8 L521.5 485.4 L530.0 491.8 L538.4 497.7 L546.7 503.3 L554.8 508.6 L562.7 513.5 L570.2 518.0 L577.4 522.3 L584.2 526.2 L590.4 529.9 L596.2 533.3 L601.4 536.5 L605.9 539.5 L609.9 542.3 L613.1 544.9 L615.7 547.4 L617.5 549.8 L618.6 552.2 L619.0 554.5 M424.0 554.5 L424.4 552.2 L425.5 549.8 L427.3 547.4 L429.9 544.9 L433.1 542.3 L437.1 539.5 L441.6 536.5 L446.8 533.3 L452.6 529.9 L458.8 526.2 L465.6 522.3 L472.8 518.0 L480.3 513.5 L488.2 508.6 L496.3 503.3 L504.6 497.7 L513.0 491.8 L521.5 485.4 L530.0 478.8 L538.4 471.7 L546.7 464.3 L554.8 456.5 L562.7 448.4 L570.2 440.0 L577.4 431.3 L584.2 422.2 L590.4 412.9 L596.2 403.3 L601.4 393.5 L605.9 383.4 L609.9 373.2 L613.1 362.8 L615.7 352.4 L617.5 341.8 L618.6 331.1 L619.0 320.4 M424.0 330.5 L424.4 341.2 L425.5 351.9 L427.3 362.5 L429.9 372.9 L433.1 383.3 L437.1 393.5 L441.6 403.6 L446.8 413.4 L452.6 423.0 L458.8 432.3 L465.6 441.4 L472.8 450.1 L480.3 458.5 L488.2 466.6 L496.3 474.4 L504.6 481.8 L513.0 488.9 L521.5 495.6 L530.0 501.9 L538.4 507.8 L546.7 513.4 L554.8 518.7 L562.7 523.6 L570.2 528.1 L577.4 532.4 L584.2 536.3 L590.4 540.0 L596.2 543.4 L601.4 546.6 L605.9 549.6 L609.9 552.4 L613.1 555.0 L615.7 557.5 L617.5 559.9 L618.6 562.3 L619.0 564.6 M424.0 564.6 L424.4 562.3 L425.5 559.9 L427.3 557.5 L429.9 555.0 L433.1 552.4 L437.1 549.6 L441.6 546.6 L446.8 543.4 L452.6 540.0 L458.8 536.3 L465.6 532.4 L472.8 528.1 L480.3 523.6 L488.2 518.7 L496.3 513.4 L504.6 507.8 L513.0 501.9 L521.5 495.6 L530.0 488.9 L538.4 481.8 L546.7 474.4 L554.8 466.6 L562.7 458.5 L570.2 450.1 L577.4 441.4 L584.2 432.3 L590.4 423.0 L596.2 413.4 L601.4 403.6 L605.9 393.5 L609.9 383.3 L613.1 372.9 L615.7 362.5 L617.5 351.9 L618.6 341.2 L619.0 330.5 M424.0 333.0 L424.4 343.7 L425.5 354.4 L427.3 365.0 L429.9 375.4 L433.1 385.8 L437.1 396.0 L441.6 406.1 L446.8 415.9 L452.6 425.5 L458.8 434.8 L465.6 443.9 L472.8 452.6 L480.3 461.0 L488.2 469.1 L496.3 476.9 L504.6 484.3 L513.0 491.4 L521.5 498.1 L530.0 504.4 L538.4 510.3 L546.7 515.9 L554.8 521.2 L562.7 526.1 L570.2 530.6 L577.4 534.9 L584.2 538.8 L590.4 542.5 L596.2 545.9 L601.4 549.1 L605.9 552.1 L609.9 554.9 L613.1 557.5 L615.7 560.0 L617.5 562.4 L618.6 564.8 L619.0 567.1 M424.0 567.1 L424.4 564.8 L425.5 562.4 L427.3 560.0 L429.9 557.5 L433.1 554.9 L437.1 552.1 L441.6 549.1 L446.8 545.9 L452.6 542.5 L458.8 538.8 L465.6 534.9 L472.8 530.6 L480.3 526.1 L488.2 521.2 L496.3 515.9 L504.6 510.3 L513.0 504.4 L521.5 498.1 L530.0 491.4 L538.4 484.3 L546.7 476.9 L554.8 469.1 L562.7 461.0 L570.2 452.6 L577.4 443.9 L584.2 434.8 L590.4 425.5 L596.2 415.9 L601.4 406.1 L605.9 396.0 L609.9 385.8 L613.1 375.4 L615.7 365.0 L617.5 354.4 L618.6 343.7 L619.0 333.0 M424.0 343.1 L424.4 353.8 L425.5 364.5 L427.3 375.1 L429.9 385.5 L433.1 395.9 L437.1 406.1 L441.6 416.2 L446.8 426.0 L452.6 435.6 L458.8 444.9 L465.6 454.0 L472.8 462.7 L480.3 471.1 L488.2 479.2 L496.3 487.0 L504.6 494.4 L513.0 501.5 L521.5 508.1 L530.0 514.5 L538.4 520.4 L546.7 526.0 L554.8 531.3 L562.7 536.2 L570.2 540.7 L577.4 545.0 L584.2 548.9 L590.4 552.6 L596.2 556.0 L601.4 559.2 L605.9 562.2 L609.9 565.0 L613.1 567.6 L615.7 570.1 L617.5 572.5 L618.6 574.9 L619.0 577.2 M424.0 577.2 L424.4 574.9 L425.5 572.5 L427.3 570.1 L429.9 567.6 L433.1 565.0 L437.1 562.2 L441.6 559.2 L446.8 556.0 L452.6 552.6 L458.8 548.9 L465.6 545.0 L472.8 540.7 L480.3 536.2 L488.2 531.3 L496.3 526.0 L504.6 520.4 L513.0 514.5 L521.5 508.1 L530.0 501.5 L538.4 494.4 L546.7 487.0 L554.8 479.2 L562.7 471.1 L570.2 462.7 L577.4 454.0 L584.2 444.9 L590.4 435.6 L596.2 426.0 L601.4 416.2 L605.9 406.1 L609.9 395.9 L613.1 385.5 L615.7 375.1 L617.5 364.5 L618.6 353.8 L619.0 343.1 M424.0 345.6 L424.4 356.3 L425.5 367.0 L427.3 377.6 L429.9 388.0 L433.1 398.4 L437.1 408.6 L441.6 418.7 L446.8 428.5 L452.6 438.1 L458.8 447.4 L465.6 456.5 L472.8 465.2 L480.3 473.6 L488.2 481.7 L496.3 489.5 L504.6 496.9 L513.0 504.0 L521.5 510.6 L530.0 517.0 L538.4 522.9 L546.7 528.5 L554.8 533.8 L562.7 538.7 L570.2 543.2 L577.4 547.5 L584.2 551.4 L590.4 555.1 L596.2 558.5 L601.4 561.7 L605.9 564.7 L609.9 567.5 L613.1 570.1 L615.7 572.6 L617.5 575.0 L618.6 577.4 L619.0 579.7 M424.0 579.7 L424.4 577.4 L425.5 575.0 L427.3 572.6 L429.9 570.1 L433.1 567.5 L437.1 564.7 L441.6 561.7 L446.8 558.5 L452.6 555.1 L458.8 551.4 L465.6 547.5 L472.8 543.2 L480.3 538.7 L488.2 533.8 L496.3 528.5 L504.6 522.9 L513.0 517.0 L521.5 510.6 L530.0 504.0 L538.4 496.9 L546.7 489.5 L554.8 481.7 L562.7 473.6 L570.2 465.2 L577.4 456.5 L584.2 447.4 L590.4 438.1 L596.2 428.5 L601.4 418.7 L605.9 408.6 L609.9 398.4 L613.1 388.0 L615.7 377.6 L617.5 367.0 L618.6 356.3 L619.0 345.6 M424.0 355.7 L424.4 366.4 L425.5 377.1 L427.3 387.7 L429.9 398.1 L433.1 408.5 L437.1 418.7 L441.6 428.8 L446.8 438.6 L452.6 448.2 L458.8 457.5 L465.6 466.6 L472.8 475.3 L480.3 483.7 L488.2 491.8 L496.3 499.6 L504.6 507.0 L513.0 514.1 L521.5 520.8 L530.0 527.1 L538.4 533.0 L546.7 538.6 L554.8 543.9 L562.7 548.8 L570.2 553.3 L577.4 557.6 L584.2 561.5 L590.4 565.2 L596.2 568.6 L601.4 571.8 L605.9 574.8 L609.9 577.6 L613.1 580.2 L615.7 582.7 L617.5 585.1 L618.6 587.5 L619.0 589.8 M424.0 589.8 L424.4 587.5 L425.5 585.1 L427.3 582.7 L429.9 580.2 L433.1 577.6 L437.1 574.8 L441.6 571.8 L446.8 568.6 L452.6 565.2 L458.8 561.5 L465.6 557.6 L472.8 553.3 L480.3 548.8 L488.2 543.9 L496.3 538.6 L504.6 533.0 L513.0 527.1 L521.5 520.8 L530.0 514.1 L538.4 507.0 L546.7 499.6 L554.8 491.8 L562.7 483.7 L570.2 475.3 L577.4 466.6 L584.2 457.5 L590.4 448.2 L596.2 438.6 L601.4 428.8 L605.9 418.7 L609.9 408.5 L613.1 398.1 L615.7 387.7 L617.5 377.1 L618.6 366.4 L619.0 355.7 M424.0 358.2 L424.4 368.9 L425.5 379.6 L427.3 390.2 L429.9 400.6 L433.1 411.0 L437.1 421.2 L441.6 431.3 L446.8 441.1 L452.6 450.7 L458.8 460.0 L465.6 469.1 L472.8 477.8 L480.3 486.2 L488.2 494.3 L496.3 502.1 L504.6 509.5 L513.0 516.6 L521.5 523.2 L530.0 529.6 L538.4 535.5 L546.7 541.1 L554.8 546.4 L562.7 551.3 L570.2 555.8 L577.4 560.1 L584.2 564.0 L590.4 567.7 L596.2 571.1 L601.4 574.3 L605.9 577.3 L609.9 580.1 L613.1 582.7 L615.7 585.2 L617.5 587.6 L618.6 590.0 L619.0 592.3 M424.0 592.3 L424.4 590.0 L425.5 587.6 L427.3 585.2 L429.9 582.7 L433.1 580.1 L437.1 577.3 L441.6 574.3 L446.8 571.1 L452.6 567.7 L458.8 564.0 L465.6 560.1 L472.8 555.8 L480.3 551.3 L488.2 546.4 L496.3 541.1 L504.6 535.5 L513.0 529.6 L521.5 523.2 L530.0 516.6 L538.4 509.5 L546.7 502.1 L554.8 494.3 L562.7 486.2 L570.2 477.8 L577.4 469.1 L584.2 460.0 L590.4 450.7 L596.2 441.1 L601.4 431.3 L605.9 421.2 L609.9 411.0 L613.1 400.6 L615.7 390.2 L617.5 379.6 L618.6 368.9 L619.0 358.2 M424.0 368.3 L424.4 379.0 L425.5 389.7 L427.3 400.3 L429.9 410.7 L433.1 421.1 L437.1 431.3 L441.6 441.4 L446.8 451.2 L452.6 460.8 L458.8 470.1 L465.6 479.2 L472.8 487.9 L480.3 496.3 L488.2 504.4 L496.3 512.2 L504.6 519.6 L513.0 526.7 L521.5 533.4 L530.0 539.7 L538.4 545.6 L546.7 551.2 L554.8 556.5 L562.7 561.4 L570.2 565.9 L577.4 570.2 L584.2 574.1 L590.4 577.8 L596.2 581.2 L601.4 584.4 L605.9 587.4 L609.9 590.2 L613.1 592.8 L615.7 595.3 L617.5 597.7 L618.6 600.1 L619.0 602.4 M424.0 602.4 L424.4 600.1 L425.5 597.7 L427.3 595.3 L429.9 592.8 L433.1 590.2 L437.1 587.4 L441.6 584.4 L446.8 581.2 L452.6 577.8 L458.8 574.1 L465.6 570.2 L472.8 565.9 L480.3 561.4 L488.2 556.5 L496.3 551.2 L504.6 545.6 L513.0 539.7 L521.5 533.4 L530.0 526.7 L538.4 519.6 L546.7 512.2 L554.8 504.4 L562.7 496.3 L570.2 487.9 L577.4 479.2 L584.2 470.1 L590.4 460.8 L596.2 451.2 L601.4 441.4 L605.9 431.3 L609.9 421.1 L613.1 410.7 L615.7 400.3 L617.5 389.7 L618.6 379.0 L619.0 368.3 M424.0 370.8 L424.4 381.5 L425.5 392.2 L427.3 402.8 L429.9 413.2 L433.1 423.6 L437.1 433.8 L441.6 443.9 L446.8 453.7 L452.6 463.3 L458.8 472.6 L465.6 481.7 L472.8 490.4 L480.3 498.8 L488.2 506.9 L496.3 514.7 L504.6 522.1 L513.0 529.2 L521.5 535.9 L530.0 542.2 L538.4 548.1 L546.7 553.7 L554.8 559.0 L562.7 563.9 L570.2 568.4 L577.4 572.7 L584.2 576.6 L590.4 580.3 L596.2 583.7 L601.4 586.9 L605.9 589.9 L609.9 592.7 L613.1 595.3 L615.7 597.8 L617.5 600.2 L618.6 602.6 L619.0 604.9 M424.0 604.9 L424.4 602.6 L425.5 600.2 L427.3 597.8 L429.9 595.3 L433.1 592.7 L437.1 589.9 L441.6 586.9 L446.8 583.7 L452.6 580.3 L458.8 576.6 L465.6 572.7 L472.8 568.4 L480.3 563.9 L488.2 559.0 L496.3 553.7 L504.6 548.1 L513.0 542.2 L521.5 535.9 L530.0 529.2 L538.4 522.1 L546.7 514.7 L554.8 506.9 L562.7 498.8 L570.2 490.4 L577.4 481.7 L584.2 472.6 L590.4 463.3 L596.2 453.7 L601.4 443.9 L605.9 433.8 L609.9 423.6 L613.1 413.2 L615.7 402.8 L617.5 392.2 L618.6 381.5 L619.0 370.8 M424.0 380.9 L424.4 391.6 L425.5 402.3 L427.3 412.9 L429.9 423.3 L433.1 433.7 L437.1 443.9 L441.6 454.0 L446.8 463.8 L452.6 473.4 L458.8 482.7 L465.6 491.8 L472.8 500.5 L480.3 508.9 L488.2 517.0 L496.3 524.8 L504.6 532.2 L513.0 539.3 L521.5 546.0 L530.0 552.3 L538.4 558.2 L546.7 563.8 L554.8 569.1 L562.7 574.0 L570.2 578.5 L577.4 582.8 L584.2 586.7 L590.4 590.4 L596.2 593.8 L601.4 597.0 L605.9 600.0 L609.9 602.8 L613.1 605.4 L615.7 607.9 L617.5 610.3 L618.6 612.7 L619.0 615.0 M424.0 615.0 L424.4 612.7 L425.5 610.3 L427.3 607.9 L429.9 605.4 L433.1 602.8 L437.1 600.0 L441.6 597.0 L446.8 593.8 L452.6 590.4 L458.8 586.7 L465.6 582.8 L472.8 578.5 L480.3 574.0 L488.2 569.1 L496.3 563.8 L504.6 558.2 L513.0 552.3 L521.5 546.0 L530.0 539.3 L538.4 532.2 L546.7 524.8 L554.8 517.0 L562.7 508.9 L570.2 500.5 L577.4 491.8 L584.2 482.7 L590.4 473.4 L596.2 463.8 L601.4 454.0 L605.9 443.9 L609.9 433.7 L613.1 423.3 L615.7 412.9 L617.5 402.3 L618.6 391.6 L619.0 380.9 M424.0 383.4 L424.4 394.1 L425.5 404.8 L427.3 415.4 L429.9 425.8 L433.1 436.2 L437.1 446.4 L441.6 456.5 L446.8 466.3 L452.6 475.9 L458.8 485.2 L465.6 494.3 L472.8 503.0 L480.3 511.4 L488.2 519.5 L496.3 527.3 L504.6 534.7 L513.0 541.8 L521.5 548.5 L530.0 554.8 L538.4 560.7 L546.7 566.3 L554.8 571.6 L562.7 576.5 L570.2 581.0 L577.4 585.3 L584.2 589.2 L590.4 592.9 L596.2 596.3 L601.4 599.5 L605.9 602.5 L609.9 605.3 L613.1 607.9 L615.7 610.4 L617.5 612.8 L618.6 615.2 L619.0 617.5 M424.0 617.5 L424.4 615.2 L425.5 612.8 L427.3 610.4 L429.9 607.9 L433.1 605.3 L437.1 602.5 L441.6 599.5 L446.8 596.3 L452.6 592.9 L458.8 589.2 L465.6 585.3 L472.8 581.0 L480.3 576.5 L488.2 571.6 L496.3 566.3 L504.6 560.7 L513.0 554.8 L521.5 548.5 L530.0 541.8 L538.4 534.7 L546.7 527.3 L554.8 519.5 L562.7 511.4 L570.2 503.0 L577.4 494.3 L584.2 485.2 L590.4 475.9 L596.2 466.3 L601.4 456.5 L605.9 446.4 L609.9 436.2 L613.1 425.8 L615.7 415.4 L617.5 404.8 L618.6 394.1 L619.0 383.4 M424.0 393.5 L424.4 404.2 L425.5 414.9 L427.3 425.5 L429.9 435.9 L433.1 446.3 L437.1 456.5 L441.6 466.6 L446.8 476.4 L452.6 486.0 L458.8 495.3 L465.6 504.4 L472.8 513.1 L480.3 521.5 L488.2 529.6 L496.3 537.4 L504.6 544.8 L513.0 551.9 L521.5 558.5 L530.0 564.9 L538.4 570.8 L546.7 576.4 L554.8 581.7 L562.7 586.6 L570.2 591.1 L577.4 595.4 L584.2 599.3 L590.4 603.0 L596.2 606.4 L601.4 609.6 L605.9 612.6 L609.9 615.4 L613.1 618.0 L615.7 620.5 L617.5 622.9 L618.6 625.3 L619.0 627.6 M424.0 627.6 L424.4 625.3 L425.5 622.9 L427.3 620.5 L429.9 618.0 L433.1 615.4 L437.1 612.6 L441.6 609.6 L446.8 606.4 L452.6 603.0 L458.8 599.3 L465.6 595.4 L472.8 591.1 L480.3 586.6 L488.2 581.7 L496.3 576.4 L504.6 570.8 L513.0 564.9 L521.5 558.5 L530.0 551.9 L538.4 544.8 L546.7 537.4 L554.8 529.6 L562.7 521.5 L570.2 513.1 L577.4 504.4 L584.2 495.3 L590.4 486.0 L596.2 476.4 L601.4 466.6 L605.9 456.5 L609.9 446.3 L613.1 435.9 L615.7 425.5 L617.5 414.9 L618.6 404.2 L619.0 393.5 M424.0 396.0 L424.4 406.7 L425.5 417.4 L427.3 428.0 L429.9 438.4 L433.1 448.8 L437.1 459.0 L441.6 469.1 L446.8 478.9 L452.6 488.5 L458.8 497.8 L465.6 506.9 L472.8 515.6 L480.3 524.0 L488.2 532.1 L496.3 539.9 L504.6 547.3 L513.0 554.4 L521.5 561.0 L530.0 567.4 L538.4 573.3 L546.7 578.9 L554.8 584.2 L562.7 589.1 L570.2 593.6 L577.4 597.9 L584.2 601.8 L590.4 605.5 L596.2 608.9 L601.4 612.1 L605.9 615.1 L609.9 617.9 L613.1 620.5 L615.7 623.0 L617.5 625.4 L618.6 627.8 L619.0 630.1 M424.0 630.1 L424.4 627.8 L425.5 625.4 L427.3 623.0 L429.9 620.5 L433.1 617.9 L437.1 615.1 L441.6 612.1 L446.8 608.9 L452.6 605.5 L458.8 601.8 L465.6 597.9 L472.8 593.6 L480.3 589.1 L488.2 584.2 L496.3 578.9 L504.6 573.3 L513.0 567.4 L521.5 561.0 L530.0 554.4 L538.4 547.3 L546.7 539.9 L554.8 532.1 L562.7 524.0 L570.2 515.6 L577.4 506.9 L584.2 497.8 L590.4 488.5 L596.2 478.9 L601.4 469.1 L605.9 459.0 L609.9 448.8 L613.1 438.4 L615.7 428.0 L617.5 417.4 L618.6 406.7 L619.0 396.0 M424.0 406.1 L424.4 416.8 L425.5 427.5 L427.3 438.1 L429.9 448.5 L433.1 458.9 L437.1 469.1 L441.6 479.2 L446.8 489.0 L452.6 498.6 L458.8 507.9 L465.6 517.0 L472.8 525.7 L480.3 534.1 L488.2 542.2 L496.3 550.0 L504.6 557.4 L513.0 564.5 L521.5 571.1 L530.0 577.5 L538.4 583.4 L546.7 589.0 L554.8 594.3 L562.7 599.2 L570.2 603.7 L577.4 608.0 L584.2 611.9 L590.4 615.6 L596.2 619.0 L601.4 622.2 L605.9 625.2 L609.9 628.0 L613.1 630.6 L615.7 633.1 L617.5 635.5 L618.6 637.9 L619.0 640.2 M424.0 640.2 L424.4 637.9 L425.5 635.5 L427.3 633.1 L429.9 630.6 L433.1 628.0 L437.1 625.2 L441.6 622.2 L446.8 619.0 L452.6 615.6 L458.8 611.9 L465.6 608.0 L472.8 603.7 L480.3 599.2 L488.2 594.3 L496.3 589.0 L504.6 583.4 L513.0 577.5 L521.5 571.1 L530.0 564.5 L538.4 557.4 L546.7 550.0 L554.8 542.2 L562.7 534.1 L570.2 525.7 L577.4 517.0 L584.2 507.9 L590.4 498.6 L596.2 489.0 L601.4 479.2 L605.9 469.1 L609.9 458.9 L613.1 448.5 L615.7 438.1 L617.5 427.5 L618.6 416.8 L619.0 406.1 M424.0 408.6 L424.4 419.3 L425.5 430.0 L427.3 440.6 L429.9 451.0 L433.1 461.4 L437.1 471.6 L441.6 481.7 L446.8 491.5 L452.6 501.1 L458.8 510.4 L465.6 519.5 L472.8 528.2 L480.3 536.6 L488.2 544.7 L496.3 552.5 L504.6 559.9 L513.0 567.0 L521.5 573.6 L530.0 580.0 L538.4 585.9 L546.7 591.5 L554.8 596.8 L562.7 601.7 L570.2 606.2 L577.4 610.5 L584.2 614.4 L590.4 618.1 L596.2 621.5 L601.4 624.7 L605.9 627.7 L609.9 630.5 L613.1 633.1 L615.7 635.6 L617.5 638.0 L618.6 640.4 L619.0 642.7 M424.0 642.7 L424.4 640.4 L425.5 638.0 L427.3 635.6 L429.9 633.1 L433.1 630.5 L437.1 627.7 L441.6 624.7 L446.8 621.5 L452.6 618.1 L458.8 614.4 L465.6 610.5 L472.8 606.2 L480.3 601.7 L488.2 596.8 L496.3 591.5 L504.6 585.9 L513.0 580.0 L521.5 573.6 L530.0 567.0 L538.4 559.9 L546.7 552.5 L554.8 544.7 L562.7 536.6 L570.2 528.2 L577.4 519.5 L584.2 510.4 L590.4 501.1 L596.2 491.5 L601.4 481.7 L605.9 471.6 L609.9 461.4 L613.1 451.0 L615.7 440.6 L617.5 430.0 L618.6 419.3 L619.0 408.6 M424.0 418.7 L424.4 429.4 L425.5 440.1 L427.3 450.7 L429.9 461.1 L433.1 471.5 L437.1 481.7 L441.6 491.8 L446.8 501.6 L452.6 511.2 L458.8 520.5 L465.6 529.6 L472.8 538.3 L480.3 546.7 L488.2 554.8 L496.3 562.6 L504.6 570.0 L513.0 577.1 L521.5 583.8 L530.0 590.1 L538.4 596.0 L546.7 601.6 L554.8 606.9 L562.7 611.8 L570.2 616.3 L577.4 620.6 L584.2 624.5 L590.4 628.2 L596.2 631.6 L601.4 634.8 L605.9 637.8 L609.9 640.6 L613.1 643.2 L615.7 645.7 L617.5 648.1 L618.6 650.5 L619.0 652.8 M424.0 652.8 L424.4 650.5 L425.5 648.1 L427.3 645.7 L429.9 643.2 L433.1 640.6 L437.1 637.8 L441.6 634.8 L446.8 631.6 L452.6 628.2 L458.8 624.5 L465.6 620.6 L472.8 616.3 L480.3 611.8 L488.2 606.9 L496.3 601.6 L504.6 596.0 L513.0 590.1 L521.5 583.8 L530.0 577.1 L538.4 570.0 L546.7 562.6 L554.8 554.8 L562.7 546.7 L570.2 538.3 L577.4 529.6 L584.2 520.5 L590.4 511.2 L596.2 501.6 L601.4 491.8 L605.9 481.7 L609.9 471.5 L613.1 461.1 L615.7 450.7 L617.5 440.1 L618.6 429.4 L619.0 418.7 M424.0 421.2 L424.4 431.9 L425.5 442.6 L427.3 453.2 L429.9 463.6 L433.1 474.0 L437.1 484.2 L441.6 494.3 L446.8 504.1 L452.6 513.7 L458.8 523.0 L465.6 532.1 L472.8 540.8 L480.3 549.2 L488.2 557.3 L496.3 565.1 L504.6 572.5 L513.0 579.6 L521.5 586.2 L530.0 592.6 L538.4 598.5 L546.7 604.1 L554.8 609.4 L562.7 614.3 L570.2 618.8 L577.4 623.1 L584.2 627.0 L590.4 630.7 L596.2 634.1 L601.4 637.3 L605.9 640.3 L609.9 643.1 L613.1 645.7 L615.7 648.2 L617.5 650.6 L618.6 653.0 L619.0 655.3 M424.0 655.3 L424.4 653.0 L425.5 650.6 L427.3 648.2 L429.9 645.7 L433.1 643.1 L437.1 640.3 L441.6 637.3 L446.8 634.1 L452.6 630.7 L458.8 627.0 L465.6 623.1 L472.8 618.8 L480.3 614.3 L488.2 609.4 L496.3 604.1 L504.6 598.5 L513.0 592.6 L521.5 586.2 L530.0 579.6 L538.4 572.5 L546.7 565.1 L554.8 557.3 L562.7 549.2 L570.2 540.8 L577.4 532.1 L584.2 523.0 L590.4 513.7 L596.2 504.1 L601.4 494.3 L605.9 484.2 L609.9 474.0 L613.1 463.6 L615.7 453.2 L617.5 442.6 L618.6 431.9 L619.0 421.2 M424.0 431.3 L424.4 442.0 L425.5 452.7 L427.3 463.3 L429.9 473.7 L433.1 484.1 L437.1 494.3 L441.6 504.4 L446.8 514.2 L452.6 523.8 L458.8 533.1 L465.6 542.2 L472.8 550.9 L480.3 559.3 L488.2 567.4 L496.3 575.2 L504.6 582.6 L513.0 589.7 L521.5 596.4 L530.0 602.7 L538.4 608.6 L546.7 614.2 L554.8 619.5 L562.7 624.4 L570.2 628.9 L577.4 633.2 L584.2 637.1 L590.4 640.8 L596.2 644.2 L601.4 647.4 L605.9 650.4 L609.9 653.2 L613.1 655.8 L615.7 658.3 L617.5 660.7 L618.6 663.1 L619.0 665.4 M424.0 665.4 L424.4 663.1 L425.5 660.7 L427.3 658.3 L429.9 655.8 L433.1 653.2 L437.1 650.4 L441.6 647.4 L446.8 644.2 L452.6 640.8 L458.8 637.1 L465.6 633.2 L472.8 628.9 L480.3 624.4 L488.2 619.5 L496.3 614.2 L504.6 608.6 L513.0 602.7 L521.5 596.4 L530.0 589.7 L538.4 582.6 L546.7 575.2 L554.8 567.4 L562.7 559.3 L570.2 550.9 L577.4 542.2 L584.2 533.1 L590.4 523.8 L596.2 514.2 L601.4 504.4 L605.9 494.3 L609.9 484.1 L613.1 473.7 L615.7 463.3 L617.5 452.7 L618.6 442.0 L619.0 431.3 M424.0 433.8 L424.4 444.5 L425.5 455.2 L427.3 465.8 L429.9 476.2 L433.1 486.6 L437.1 496.8 L441.6 506.9 L446.8 516.7 L452.6 526.3 L458.8 535.6 L465.6 544.7 L472.8 553.4 L480.3 561.8 L488.2 569.9 L496.3 577.7 L504.6 585.1 L513.0 592.2 L521.5 598.9 L530.0 605.2 L538.4 611.1 L546.7 616.7 L554.8 622.0 L562.7 626.9 L570.2 631.4 L577.4 635.7 L584.2 639.6 L590.4 643.3 L596.2 646.7 L601.4 649.9 L605.9 652.9 L609.9 655.7 L613.1 658.3 L615.7 660.8 L617.5 663.2 L618.6 665.6 L619.0 667.9 M424.0 667.9 L424.4 665.6 L425.5 663.2 L427.3 660.8 L429.9 658.3 L433.1 655.7 L437.1 652.9 L441.6 649.9 L446.8 646.7 L452.6 643.3 L458.8 639.6 L465.6 635.7 L472.8 631.4 L480.3 626.9 L488.2 622.0 L496.3 616.7 L504.6 611.1 L513.0 605.2 L521.5 598.9 L530.0 592.2 L538.4 585.1 L546.7 577.7 L554.8 569.9 L562.7 561.8 L570.2 553.4 L577.4 544.7 L584.2 535.6 L590.4 526.3 L596.2 516.7 L601.4 506.9 L605.9 496.8 L609.9 486.6 L613.1 476.2 L615.7 465.8 L617.5 455.2 L618.6 444.5 L619.0 433.8 M424.0 443.9 L424.4 454.6 L425.5 465.3 L427.3 475.9 L429.9 486.3 L433.1 496.7 L437.1 506.9 L441.6 517.0 L446.8 526.8 L452.6 536.4 L458.8 545.7 L465.6 554.8 L472.8 563.5 L480.3 571.9 L488.2 580.0 L496.3 587.8 L504.6 595.2 L513.0 602.3 L521.5 609.0 L530.0 615.3 L538.4 621.2 L546.7 626.8 L554.8 632.1 L562.7 637.0 L570.2 641.5 L577.4 645.8 L584.2 649.7 L590.4 653.4 L596.2 656.8 L601.4 660.0 L605.9 663.0 L609.9 665.8 L613.1 668.4 L615.7 670.9 L617.5 673.3 L618.6 675.7 L619.0 678.0 M424.0 678.0 L424.4 675.7 L425.5 673.3 L427.3 670.9 L429.9 668.4 L433.1 665.8 L437.1 663.0 L441.6 660.0 L446.8 656.8 L452.6 653.4 L458.8 649.7 L465.6 645.8 L472.8 641.5 L480.3 637.0 L488.2 632.1 L496.3 626.8 L504.6 621.2 L513.0 615.3 L521.5 609.0 L530.0 602.3 L538.4 595.2 L546.7 587.8 L554.8 580.0 L562.7 571.9 L570.2 563.5 L577.4 554.8 L584.2 545.7 L590.4 536.4 L596.2 526.8 L601.4 517.0 L605.9 506.9 L609.9 496.7 L613.1 486.3 L615.7 475.9 L617.5 465.3 L618.6 454.6 L619.0 443.9 M424.0 446.4 L424.4 457.1 L425.5 467.8 L427.3 478.4 L429.9 488.8 L433.1 499.2 L437.1 509.4 L441.6 519.5 L446.8 529.3 L452.6 538.9 L458.8 548.2 L465.6 557.3 L472.8 566.0 L480.3 574.4 L488.2 582.5 L496.3 590.3 L504.6 597.7 L513.0 604.8 L521.5 611.5 L530.0 617.8 L538.4 623.7 L546.7 629.3 L554.8 634.6 L562.7 639.5 L570.2 644.0 L577.4 648.3 L584.2 652.2 L590.4 655.9 L596.2 659.3 L601.4 662.5 L605.9 665.5 L609.9 668.3 L613.1 670.9 L615.7 673.4 L617.5 675.8 L618.6 678.2 L619.0 680.5 M424.0 680.5 L424.4 678.2 L425.5 675.8 L427.3 673.4 L429.9 670.9 L433.1 668.3 L437.1 665.5 L441.6 662.5 L446.8 659.3 L452.6 655.9 L458.8 652.2 L465.6 648.3 L472.8 644.0 L480.3 639.5 L488.2 634.6 L496.3 629.3 L504.6 623.7 L513.0 617.8 L521.5 611.5 L530.0 604.8 L538.4 597.7 L546.7 590.3 L554.8 582.5 L562.7 574.4 L570.2 566.0 L577.4 557.3 L584.2 548.2 L590.4 538.9 L596.2 529.3 L601.4 519.5 L605.9 509.4 L609.9 499.2 L613.1 488.8 L615.7 478.4 L617.5 467.8 L618.6 457.1 L619.0 446.4 M424.0 456.5 L424.4 467.2 L425.5 477.9 L427.3 488.5 L429.9 498.9 L433.1 509.3 L437.1 519.5 L441.6 529.6 L446.8 539.4 L452.6 549.0 L458.8 558.3 L465.6 567.4 L472.8 576.1 L480.3 584.5 L488.2 592.6 L496.3 600.4 L504.6 607.8 L513.0 614.9 L521.5 621.5 L530.0 627.9 L538.4 633.8 L546.7 639.4 L554.8 644.7 L562.7 649.6 L570.2 654.1 L577.4 658.4 L584.2 662.3 L590.4 666.0 L596.2 669.4 L601.4 672.6 L605.9 675.6 L609.9 678.4 L613.1 681.0 L615.7 683.5 L617.5 685.9 L618.6 688.3 L619.0 690.6 M424.0 690.6 L424.4 688.3 L425.5 685.9 L427.3 683.5 L429.9 681.0 L433.1 678.4 L437.1 675.6 L441.6 672.6 L446.8 669.4 L452.6 666.0 L458.8 662.3 L465.6 658.4 L472.8 654.1 L480.3 649.6 L488.2 644.7 L496.3 639.4 L504.6 633.8 L513.0 627.9 L521.5 621.5 L530.0 614.9 L538.4 607.8 L546.7 600.4 L554.8 592.6 L562.7 584.5 L570.2 576.1 L577.4 567.4 L584.2 558.3 L590.4 549.0 L596.2 539.4 L601.4 529.6 L605.9 519.5 L609.9 509.3 L613.1 498.9 L615.7 488.5 L617.5 477.9 L618.6 467.2 L619.0 456.5 M424.0 459.0 L424.4 469.7 L425.5 480.4 L427.3 491.0 L429.9 501.4 L433.1 511.8 L437.1 522.0 L441.6 532.1 L446.8 541.9 L452.6 551.5 L458.8 560.8 L465.6 569.9 L472.8 578.6 L480.3 587.0 L488.2 595.1 L496.3 602.9 L504.6 610.3 L513.0 617.4 L521.5 624.0 L530.0 630.4 L538.4 636.3 L546.7 641.9 L554.8 647.2 L562.7 652.1 L570.2 656.6 L577.4 660.9 L584.2 664.8 L590.4 668.5 L596.2 671.9 L601.4 675.1 L605.9 678.1 L609.9 680.9 L613.1 683.5 L615.7 686.0 L617.5 688.4 L618.6 690.8 L619.0 693.1 M424.0 693.1 L424.4 690.8 L425.5 688.4 L427.3 686.0 L429.9 683.5 L433.1 680.9 L437.1 678.1 L441.6 675.1 L446.8 671.9 L452.6 668.5 L458.8 664.8 L465.6 660.9 L472.8 656.6 L480.3 652.1 L488.2 647.2 L496.3 641.9 L504.6 636.3 L513.0 630.4 L521.5 624.0 L530.0 617.4 L538.4 610.3 L546.7 602.9 L554.8 595.1 L562.7 587.0 L570.2 578.6 L577.4 569.9 L584.2 560.8 L590.4 551.5 L596.2 541.9 L601.4 532.1 L605.9 522.0 L609.9 511.8 L613.1 501.4 L615.7 491.0 L617.5 480.4 L618.6 469.7 L619.0 459.0 M424.0 469.1 L424.4 479.8 L425.5 490.5 L427.3 501.1 L429.9 511.5 L433.1 521.9 L437.1 532.1 L441.6 542.2 L446.8 552.0 L452.6 561.6 L458.8 570.9 L465.6 580.0 L472.8 588.7 L480.3 597.1 L488.2 605.2 L496.3 613.0 L504.6 620.4 L513.0 627.5 L521.5 634.1 L530.0 640.5 L538.4 646.4 L546.7 652.0 L554.8 657.3 L562.7 662.2 L570.2 666.7 L577.4 671.0 L584.2 674.9 L590.4 678.6 L596.2 682.0 L601.4 685.2 L605.9 688.2 L609.9 691.0 L613.1 693.6 L615.7 696.1 L617.5 698.5 L618.6 700.9 L619.0 703.2 M424.0 703.2 L424.4 700.9 L425.5 698.5 L427.3 696.1 L429.9 693.6 L433.1 691.0 L437.1 688.2 L441.6 685.2 L446.8 682.0 L452.6 678.6 L458.8 674.9 L465.6 671.0 L472.8 666.7 L480.3 662.2 L488.2 657.3 L496.3 652.0 L504.6 646.4 L513.0 640.5 L521.5 634.1 L530.0 627.5 L538.4 620.4 L546.7 613.0 L554.8 605.2 L562.7 597.1 L570.2 588.7 L577.4 580.0 L584.2 570.9 L590.4 561.6 L596.2 552.0 L601.4 542.2 L605.9 532.1 L609.9 521.9 L613.1 511.5 L615.7 501.1 L617.5 490.5 L618.6 479.8 L619.0 469.1 M424.0 471.6 L424.4 482.3 L425.5 493.0 L427.3 503.6 L429.9 514.0 L433.1 524.4 L437.1 534.6 L441.6 544.7 L446.8 554.5 L452.6 564.1 L458.8 573.4 L465.6 582.5 L472.8 591.2 L480.3 599.6 L488.2 607.7 L496.3 615.5 L504.6 622.9 L513.0 630.0 L521.5 636.6 L530.0 643.0 L538.4 648.9 L546.7 654.5 L554.8 659.8 L562.7 664.7 L570.2 669.2 L577.4 673.5 L584.2 677.4 L590.4 681.1 L596.2 684.5 L601.4 687.7 L605.9 690.7 L609.9 693.5 L613.1 696.1 L615.7 698.6 L617.5 701.0 L618.6 703.4 L619.0 705.7 M424.0 705.7 L424.4 703.4 L425.5 701.0 L427.3 698.6 L429.9 696.1 L433.1 693.5 L437.1 690.7 L441.6 687.7 L446.8 684.5 L452.6 681.1 L458.8 677.4 L465.6 673.5 L472.8 669.2 L480.3 664.7 L488.2 659.8 L496.3 654.5 L504.6 648.9 L513.0 643.0 L521.5 636.6 L530.0 630.0 L538.4 622.9 L546.7 615.5 L554.8 607.7 L562.7 599.6 L570.2 591.2 L577.4 582.5 L584.2 573.4 L590.4 564.1 L596.2 554.5 L601.4 544.7 L605.9 534.6 L609.9 524.4 L613.1 514.0 L615.7 503.6 L617.5 493.0 L618.6 482.3 L619.0 471.6"/>
</g>
<g clip-path="url(#k2)" fill="none" stroke="#161614" stroke-width="0.75">
<path d="M424.0 238.3 L424.4 248.7 L425.5 259.0 L427.3 269.3 L429.9 279.5 L433.1 289.5 L437.1 299.3 L441.6 309.0 L446.8 318.4 L452.6 327.5 L458.8 336.3 L465.6 344.8 L472.8 353.0 L480.3 360.8 L488.2 368.2 L496.3 375.2 L504.6 381.8 L513.0 388.1 L521.5 393.9 L530.0 399.2 L538.4 404.2 L546.7 408.7 L554.8 412.9 L562.7 416.6 L570.2 420.0 L577.4 423.0 L584.2 425.7 L590.4 428.0 L596.2 430.1 L601.4 431.8 L605.9 433.4 L609.9 434.7 L613.1 435.9 L615.7 436.9 L617.5 437.8 L618.6 438.6 L619.0 439.4 M424.0 439.4 L424.4 438.6 L425.5 437.8 L427.3 436.9 L429.9 435.9 L433.1 434.7 L437.1 433.4 L441.6 431.8 L446.8 430.1 L452.6 428.0 L458.8 425.7 L465.6 423.0 L472.8 420.0 L480.3 416.6 L488.2 412.9 L496.3 408.7 L504.6 404.2 L513.0 399.2 L521.5 393.9 L530.0 388.1 L538.4 381.8 L546.7 375.2 L554.8 368.2 L562.7 360.8 L570.2 353.0 L577.4 344.8 L584.2 336.3 L590.4 327.5 L596.2 318.4 L601.4 309.0 L605.9 299.3 L609.9 289.5 L613.1 279.5 L615.7 269.3 L617.5 259.0 L618.6 248.7 L619.0 238.3 M424.0 240.8 L424.4 251.2 L425.5 261.5 L427.3 271.8 L429.9 282.0 L433.1 292.0 L437.1 301.8 L441.6 311.5 L446.8 320.9 L452.6 330.0 L458.8 338.8 L465.6 347.3 L472.8 355.5 L480.3 363.3 L488.2 370.7 L496.3 377.7 L504.6 384.3 L513.0 390.6 L521.5 396.4 L530.0 401.7 L538.4 406.7 L546.7 411.2 L554.8 415.4 L562.7 419.1 L570.2 422.5 L577.4 425.5 L584.2 428.2 L590.4 430.5 L596.2 432.6 L601.4 434.3 L605.9 435.9 L609.9 437.2 L613.1 438.4 L615.7 439.4 L617.5 440.3 L618.6 441.1 L619.0 441.9 M424.0 441.9 L424.4 441.1 L425.5 440.3 L427.3 439.4 L429.9 438.4 L433.1 437.2 L437.1 435.9 L441.6 434.3 L446.8 432.6 L452.6 430.5 L458.8 428.2 L465.6 425.5 L472.8 422.5 L480.3 419.1 L488.2 415.4 L496.3 411.2 L504.6 406.7 L513.0 401.7 L521.5 396.4 L530.0 390.6 L538.4 384.3 L546.7 377.7 L554.8 370.7 L562.7 363.3 L570.2 355.5 L577.4 347.3 L584.2 338.8 L590.4 330.0 L596.2 320.9 L601.4 311.5 L605.9 301.8 L609.9 292.0 L613.1 282.0 L615.7 271.8 L617.5 261.5 L618.6 251.2 L619.0 240.8 M424.0 249.1 L424.4 259.5 L425.5 269.8 L427.3 280.1 L429.9 290.3 L433.1 300.3 L437.1 310.1 L441.6 319.8 L446.8 329.2 L452.6 338.3 L458.8 347.1 L465.6 355.6 L472.8 363.8 L480.3 371.6 L488.2 379.0 L496.3 386.0 L504.6 392.6 L513.0 398.9 L521.5 404.7 L530.0 410.0 L538.4 415.0 L546.7 419.5 L554.8 423.7 L562.7 427.4 L570.2 430.8 L577.4 433.8 L584.2 436.5 L590.4 438.8 L596.2 440.9 L601.4 442.6 L605.9 444.2 L609.9 445.5 L613.1 446.7 L615.7 447.7 L617.5 448.6 L618.6 449.4 L619.0 450.2 M424.0 450.2 L424.4 449.4 L425.5 448.6 L427.3 447.7 L429.9 446.7 L433.1 445.5 L437.1 444.2 L441.6 442.6 L446.8 440.9 L452.6 438.8 L458.8 436.5 L465.6 433.8 L472.8 430.8 L480.3 427.4 L488.2 423.7 L496.3 419.5 L504.6 415.0 L513.0 410.0 L521.5 404.7 L530.0 398.9 L538.4 392.6 L546.7 386.0 L554.8 379.0 L562.7 371.6 L570.2 363.8 L577.4 355.6 L584.2 347.1 L590.4 338.3 L596.2 329.2 L601.4 319.8 L605.9 310.1 L609.9 300.3 L613.1 290.3 L615.7 280.1 L617.5 269.8 L618.6 259.5 L619.0 249.1 M424.0 251.6 L424.4 262.0 L425.5 272.3 L427.3 282.6 L429.9 292.8 L433.1 302.8 L437.1 312.6 L441.6 322.3 L446.8 331.7 L452.6 340.8 L458.8 349.6 L465.6 358.1 L472.8 366.3 L480.3 374.1 L488.2 381.5 L496.3 388.5 L504.6 395.1 L513.0 401.4 L521.5 407.2 L530.0 412.5 L538.4 417.5 L546.7 422.0 L554.8 426.2 L562.7 429.9 L570.2 433.3 L577.4 436.3 L584.2 439.0 L590.4 441.3 L596.2 443.4 L601.4 445.1 L605.9 446.7 L609.9 448.0 L613.1 449.2 L615.7 450.2 L617.5 451.1 L618.6 451.9 L619.0 452.7 M424.0 452.7 L424.4 451.9 L425.5 451.1 L427.3 450.2 L429.9 449.2 L433.1 448.0 L437.1 446.7 L441.6 445.1 L446.8 443.4 L452.6 441.3 L458.8 439.0 L465.6 436.3 L472.8 433.3 L480.3 429.9 L488.2 426.2 L496.3 422.0 L504.6 417.5 L513.0 412.5 L521.5 407.2 L530.0 401.4 L538.4 395.1 L546.7 388.5 L554.8 381.5 L562.7 374.1 L570.2 366.3 L577.4 358.1 L584.2 349.6 L590.4 340.8 L596.2 331.7 L601.4 322.3 L605.9 312.6 L609.9 302.8 L613.1 292.8 L615.7 282.6 L617.5 272.3 L618.6 262.0 L619.0 251.6 M424.0 259.9 L424.4 270.3 L425.5 280.6 L427.3 290.9 L429.9 301.1 L433.1 311.1 L437.1 320.9 L441.6 330.6 L446.8 340.0 L452.6 349.1 L458.8 357.9 L465.6 366.4 L472.8 374.6 L480.3 382.4 L488.2 389.8 L496.3 396.8 L504.6 403.4 L513.0 409.7 L521.5 415.5 L530.0 420.8 L538.4 425.8 L546.7 430.3 L554.8 434.5 L562.7 438.2 L570.2 441.6 L577.4 444.6 L584.2 447.3 L590.4 449.6 L596.2 451.7 L601.4 453.4 L605.9 455.0 L609.9 456.3 L613.1 457.5 L615.7 458.5 L617.5 459.4 L618.6 460.2 L619.0 461.0 M424.0 461.0 L424.4 460.2 L425.5 459.4 L427.3 458.5 L429.9 457.5 L433.1 456.3 L437.1 455.0 L441.6 453.4 L446.8 451.7 L452.6 449.6 L458.8 447.3 L465.6 444.6 L472.8 441.6 L480.3 438.2 L488.2 434.5 L496.3 430.3 L504.6 425.8 L513.0 420.8 L521.5 415.5 L530.0 409.7 L538.4 403.4 L546.7 396.8 L554.8 389.8 L562.7 382.4 L570.2 374.6 L577.4 366.4 L584.2 357.9 L590.4 349.1 L596.2 340.0 L601.4 330.6 L605.9 320.9 L609.9 311.1 L613.1 301.1 L615.7 290.9 L617.5 280.6 L618.6 270.3 L619.0 259.9 M424.0 262.4 L424.4 272.8 L425.5 283.1 L427.3 293.4 L429.9 303.6 L433.1 313.6 L437.1 323.4 L441.6 333.1 L446.8 342.5 L452.6 351.6 L458.8 360.4 L465.6 368.9 L472.8 377.1 L480.3 384.9 L488.2 392.3 L496.3 399.3 L504.6 405.9 L513.0 412.2 L521.5 418.0 L530.0 423.3 L538.4 428.3 L546.7 432.8 L554.8 437.0 L562.7 440.7 L570.2 444.1 L577.4 447.1 L584.2 449.8 L590.4 452.1 L596.2 454.2 L601.4 455.9 L605.9 457.5 L609.9 458.8 L613.1 460.0 L615.7 461.0 L617.5 461.9 L618.6 462.7 L619.0 463.5 M424.0 463.5 L424.4 462.7 L425.5 461.9 L427.3 461.0 L429.9 460.0 L433.1 458.8 L437.1 457.5 L441.6 455.9 L446.8 454.2 L452.6 452.1 L458.8 449.8 L465.6 447.1 L472.8 444.1 L480.3 440.7 L488.2 437.0 L496.3 432.8 L504.6 428.3 L513.0 423.3 L521.5 418.0 L530.0 412.2 L538.4 405.9 L546.7 399.3 L554.8 392.3 L562.7 384.9 L570.2 377.1 L577.4 368.9 L584.2 360.4 L590.4 351.6 L596.2 342.5 L601.4 333.1 L605.9 323.4 L609.9 313.6 L613.1 303.6 L615.7 293.4 L617.5 283.1 L618.6 272.8 L619.0 262.4 M424.0 270.7 L424.4 281.1 L425.5 291.4 L427.3 301.7 L429.9 311.9 L433.1 321.9 L437.1 331.7 L441.6 341.4 L446.8 350.8 L452.6 359.9 L458.8 368.7 L465.6 377.2 L472.8 385.4 L480.3 393.2 L488.2 400.6 L496.3 407.6 L504.6 414.2 L513.0 420.5 L521.5 426.3 L530.0 431.6 L538.4 436.6 L546.7 441.1 L554.8 445.3 L562.7 449.0 L570.2 452.4 L577.4 455.4 L584.2 458.1 L590.4 460.4 L596.2 462.5 L601.4 464.2 L605.9 465.8 L609.9 467.1 L613.1 468.3 L615.7 469.3 L617.5 470.2 L618.6 471.0 L619.0 471.8 M424.0 471.8 L424.4 471.0 L425.5 470.2 L427.3 469.3 L429.9 468.3 L433.1 467.1 L437.1 465.8 L441.6 464.2 L446.8 462.5 L452.6 460.4 L458.8 458.1 L465.6 455.4 L472.8 452.4 L480.3 449.0 L488.2 445.3 L496.3 441.1 L504.6 436.6 L513.0 431.6 L521.5 426.3 L530.0 420.5 L538.4 414.2 L546.7 407.6 L554.8 400.6 L562.7 393.2 L570.2 385.4 L577.4 377.2 L584.2 368.7 L590.4 359.9 L596.2 350.8 L601.4 341.4 L605.9 331.7 L609.9 321.9 L613.1 311.9 L615.7 301.7 L617.5 291.4 L618.6 281.1 L619.0 270.7 M424.0 273.2 L424.4 283.6 L425.5 293.9 L427.3 304.2 L429.9 314.4 L433.1 324.4 L437.1 334.2 L441.6 343.9 L446.8 353.3 L452.6 362.4 L458.8 371.2 L465.6 379.7 L472.8 387.9 L480.3 395.7 L488.2 403.1 L496.3 410.1 L504.6 416.7 L513.0 423.0 L521.5 428.8 L530.0 434.1 L538.4 439.1 L546.7 443.6 L554.8 447.8 L562.7 451.5 L570.2 454.9 L577.4 457.9 L584.2 460.6 L590.4 462.9 L596.2 465.0 L601.4 466.7 L605.9 468.3 L609.9 469.6 L613.1 470.8 L615.7 471.8 L617.5 472.7 L618.6 473.5 L619.0 474.3 M424.0 474.3 L424.4 473.5 L425.5 472.7 L427.3 471.8 L429.9 470.8 L433.1 469.6 L437.1 468.3 L441.6 466.7 L446.8 465.0 L452.6 462.9 L458.8 460.6 L465.6 457.9 L472.8 454.9 L480.3 451.5 L488.2 447.8 L496.3 443.6 L504.6 439.1 L513.0 434.1 L521.5 428.8 L530.0 423.0 L538.4 416.7 L546.7 410.1 L554.8 403.1 L562.7 395.7 L570.2 387.9 L577.4 379.7 L584.2 371.2 L590.4 362.4 L596.2 353.3 L601.4 343.9 L605.9 334.2 L609.9 324.4 L613.1 314.4 L615.7 304.2 L617.5 293.9 L618.6 283.6 L619.0 273.2 M424.0 281.5 L424.4 291.9 L425.5 302.2 L427.3 312.5 L429.9 322.7 L433.1 332.7 L437.1 342.5 L441.6 352.2 L446.8 361.6 L452.6 370.7 L458.8 379.5 L465.6 388.0 L472.8 396.2 L480.3 404.0 L488.2 411.4 L496.3 418.4 L504.6 425.0 L513.0 431.3 L521.5 437.1 L530.0 442.4 L538.4 447.4 L546.7 451.9 L554.8 456.1 L562.7 459.8 L570.2 463.2 L577.4 466.2 L584.2 468.9 L590.4 471.2 L596.2 473.3 L601.4 475.0 L605.9 476.6 L609.9 477.9 L613.1 479.1 L615.7 480.1 L617.5 481.0 L618.6 481.8 L619.0 482.6 M424.0 482.6 L424.4 481.8 L425.5 481.0 L427.3 480.1 L429.9 479.1 L433.1 477.9 L437.1 476.6 L441.6 475.0 L446.8 473.3 L452.6 471.2 L458.8 468.9 L465.6 466.2 L472.8 463.2 L480.3 459.8 L488.2 456.1 L496.3 451.9 L504.6 447.4 L513.0 442.4 L521.5 437.1 L530.0 431.3 L538.4 425.0 L546.7 418.4 L554.8 411.4 L562.7 404.0 L570.2 396.2 L577.4 388.0 L584.2 379.5 L590.4 370.7 L596.2 361.6 L601.4 352.2 L605.9 342.5 L609.9 332.7 L613.1 322.7 L615.7 312.5 L617.5 302.2 L618.6 291.9 L619.0 281.5 M424.0 284.0 L424.4 294.4 L425.5 304.7 L427.3 315.0 L429.9 325.2 L433.1 335.2 L437.1 345.0 L441.6 354.7 L446.8 364.1 L452.6 373.2 L458.8 382.0 L465.6 390.5 L472.8 398.7 L480.3 406.5 L488.2 413.9 L496.3 420.9 L504.6 427.5 L513.0 433.8 L521.5 439.6 L530.0 444.9 L538.4 449.9 L546.7 454.4 L554.8 458.6 L562.7 462.3 L570.2 465.7 L577.4 468.7 L584.2 471.4 L590.4 473.7 L596.2 475.8 L601.4 477.5 L605.9 479.1 L609.9 480.4 L613.1 481.6 L615.7 482.6 L617.5 483.5 L618.6 484.3 L619.0 485.1 M424.0 485.1 L424.4 484.3 L425.5 483.5 L427.3 482.6 L429.9 481.6 L433.1 480.4 L437.1 479.1 L441.6 477.5 L446.8 475.8 L452.6 473.7 L458.8 471.4 L465.6 468.7 L472.8 465.7 L480.3 462.3 L488.2 458.6 L496.3 454.4 L504.6 449.9 L513.0 444.9 L521.5 439.6 L530.0 433.8 L538.4 427.5 L546.7 420.9 L554.8 413.9 L562.7 406.5 L570.2 398.7 L577.4 390.5 L584.2 382.0 L590.4 373.2 L596.2 364.1 L601.4 354.7 L605.9 345.0 L609.9 335.2 L613.1 325.2 L615.7 315.0 L617.5 304.7 L618.6 294.4 L619.0 284.0 M424.0 292.3 L424.4 302.7 L425.5 313.0 L427.3 323.3 L429.9 333.5 L433.1 343.5 L437.1 353.3 L441.6 363.0 L446.8 372.4 L452.6 381.5 L458.8 390.3 L465.6 398.8 L472.8 407.0 L480.3 414.8 L488.2 422.2 L496.3 429.2 L504.6 435.8 L513.0 442.1 L521.5 447.9 L530.0 453.2 L538.4 458.2 L546.7 462.7 L554.8 466.9 L562.7 470.6 L570.2 474.0 L577.4 477.0 L584.2 479.7 L590.4 482.0 L596.2 484.1 L601.4 485.8 L605.9 487.4 L609.9 488.7 L613.1 489.9 L615.7 490.9 L617.5 491.8 L618.6 492.6 L619.0 493.4 M424.0 493.4 L424.4 492.6 L425.5 491.8 L427.3 490.9 L429.9 489.9 L433.1 488.7 L437.1 487.4 L441.6 485.8 L446.8 484.1 L452.6 482.0 L458.8 479.7 L465.6 477.0 L472.8 474.0 L480.3 470.6 L488.2 466.9 L496.3 462.7 L504.6 458.2 L513.0 453.2 L521.5 447.9 L530.0 442.1 L538.4 435.8 L546.7 429.2 L554.8 422.2 L562.7 414.8 L570.2 407.0 L577.4 398.8 L584.2 390.3 L590.4 381.5 L596.2 372.4 L601.4 363.0 L605.9 353.3 L609.9 343.5 L613.1 333.5 L615.7 323.3 L617.5 313.0 L618.6 302.7 L619.0 292.3 M424.0 294.8 L424.4 305.2 L425.5 315.5 L427.3 325.8 L429.9 336.0 L433.1 346.0 L437.1 355.8 L441.6 365.5 L446.8 374.9 L452.6 384.0 L458.8 392.8 L465.6 401.3 L472.8 409.5 L480.3 417.3 L488.2 424.7 L496.3 431.7 L504.6 438.3 L513.0 444.6 L521.5 450.4 L530.0 455.7 L538.4 460.7 L546.7 465.2 L554.8 469.4 L562.7 473.1 L570.2 476.5 L577.4 479.5 L584.2 482.2 L590.4 484.5 L596.2 486.6 L601.4 488.3 L605.9 489.9 L609.9 491.2 L613.1 492.4 L615.7 493.4 L617.5 494.3 L618.6 495.1 L619.0 495.9 M424.0 495.9 L424.4 495.1 L425.5 494.3 L427.3 493.4 L429.9 492.4 L433.1 491.2 L437.1 489.9 L441.6 488.3 L446.8 486.6 L452.6 484.5 L458.8 482.2 L465.6 479.5 L472.8 476.5 L480.3 473.1 L488.2 469.4 L496.3 465.2 L504.6 460.7 L513.0 455.7 L521.5 450.4 L530.0 444.6 L538.4 438.3 L546.7 431.7 L554.8 424.7 L562.7 417.3 L570.2 409.5 L577.4 401.3 L584.2 392.8 L590.4 384.0 L596.2 374.9 L601.4 365.5 L605.9 355.8 L609.9 346.0 L613.1 336.0 L615.7 325.8 L617.5 315.5 L618.6 305.2 L619.0 294.8 M424.0 303.1 L424.4 313.5 L425.5 323.8 L427.3 334.1 L429.9 344.3 L433.1 354.3 L437.1 364.1 L441.6 373.8 L446.8 383.2 L452.6 392.3 L458.8 401.1 L465.6 409.6 L472.8 417.8 L480.3 425.6 L488.2 433.0 L496.3 440.0 L504.6 446.6 L513.0 452.9 L521.5 458.7 L530.0 464.0 L538.4 469.0 L546.7 473.5 L554.8 477.7 L562.7 481.4 L570.2 484.8 L577.4 487.8 L584.2 490.5 L590.4 492.8 L596.2 494.9 L601.4 496.6 L605.9 498.2 L609.9 499.5 L613.1 500.7 L615.7 501.7 L617.5 502.6 L618.6 503.4 L619.0 504.2 M424.0 504.2 L424.4 503.4 L425.5 502.6 L427.3 501.7 L429.9 500.7 L433.1 499.5 L437.1 498.2 L441.6 496.6 L446.8 494.9 L452.6 492.8 L458.8 490.5 L465.6 487.8 L472.8 484.8 L480.3 481.4 L488.2 477.7 L496.3 473.5 L504.6 469.0 L513.0 464.0 L521.5 458.7 L530.0 452.9 L538.4 446.6 L546.7 440.0 L554.8 433.0 L562.7 425.6 L570.2 417.8 L577.4 409.6 L584.2 401.1 L590.4 392.3 L596.2 383.2 L601.4 373.8 L605.9 364.1 L609.9 354.3 L613.1 344.3 L615.7 334.1 L617.5 323.8 L618.6 313.5 L619.0 303.1 M424.0 305.6 L424.4 316.0 L425.5 326.3 L427.3 336.6 L429.9 346.8 L433.1 356.8 L437.1 366.6 L441.6 376.3 L446.8 385.7 L452.6 394.8 L458.8 403.6 L465.6 412.1 L472.8 420.3 L480.3 428.1 L488.2 435.5 L496.3 442.5 L504.6 449.1 L513.0 455.4 L521.5 461.2 L530.0 466.5 L538.4 471.5 L546.7 476.0 L554.8 480.2 L562.7 483.9 L570.2 487.3 L577.4 490.3 L584.2 493.0 L590.4 495.3 L596.2 497.4 L601.4 499.1 L605.9 500.7 L609.9 502.0 L613.1 503.2 L615.7 504.2 L617.5 505.1 L618.6 505.9 L619.0 506.7 M424.0 506.7 L424.4 505.9 L425.5 505.1 L427.3 504.2 L429.9 503.2 L433.1 502.0 L437.1 500.7 L441.6 499.1 L446.8 497.4 L452.6 495.3 L458.8 493.0 L465.6 490.3 L472.8 487.3 L480.3 483.9 L488.2 480.2 L496.3 476.0 L504.6 471.5 L513.0 466.5 L521.5 461.2 L530.0 455.4 L538.4 449.1 L546.7 442.5 L554.8 435.5 L562.7 428.1 L570.2 420.3 L577.4 412.1 L584.2 403.6 L590.4 394.8 L596.2 385.7 L601.4 376.3 L605.9 366.6 L609.9 356.8 L613.1 346.8 L615.7 336.6 L617.5 326.3 L618.6 316.0 L619.0 305.6 M424.0 313.9 L424.4 324.3 L425.5 334.6 L427.3 344.9 L429.9 355.1 L433.1 365.1 L437.1 374.9 L441.6 384.6 L446.8 394.0 L452.6 403.1 L458.8 411.9 L465.6 420.4 L472.8 428.6 L480.3 436.4 L488.2 443.8 L496.3 450.8 L504.6 457.4 L513.0 463.7 L521.5 469.5 L530.0 474.8 L538.4 479.8 L546.7 484.3 L554.8 488.5 L562.7 492.2 L570.2 495.6 L577.4 498.6 L584.2 501.3 L590.4 503.6 L596.2 505.7 L601.4 507.4 L605.9 509.0 L609.9 510.3 L613.1 511.5 L615.7 512.5 L617.5 513.4 L618.6 514.2 L619.0 515.0 M424.0 515.0 L424.4 514.2 L425.5 513.4 L427.3 512.5 L429.9 511.5 L433.1 510.3 L437.1 509.0 L441.6 507.4 L446.8 505.7 L452.6 503.6 L458.8 501.3 L465.6 498.6 L472.8 495.6 L480.3 492.2 L488.2 488.5 L496.3 484.3 L504.6 479.8 L513.0 474.8 L521.5 469.5 L530.0 463.7 L538.4 457.4 L546.7 450.8 L554.8 443.8 L562.7 436.4 L570.2 428.6 L577.4 420.4 L584.2 411.9 L590.4 403.1 L596.2 394.0 L601.4 384.6 L605.9 374.9 L609.9 365.1 L613.1 355.1 L615.7 344.9 L617.5 334.6 L618.6 324.3 L619.0 313.9 M424.0 316.4 L424.4 326.8 L425.5 337.1 L427.3 347.4 L429.9 357.6 L433.1 367.6 L437.1 377.4 L441.6 387.1 L446.8 396.5 L452.6 405.6 L458.8 414.4 L465.6 422.9 L472.8 431.1 L480.3 438.9 L488.2 446.3 L496.3 453.3 L504.6 459.9 L513.0 466.2 L521.5 472.0 L530.0 477.3 L538.4 482.3 L546.7 486.8 L554.8 491.0 L562.7 494.7 L570.2 498.1 L577.4 501.1 L584.2 503.8 L590.4 506.1 L596.2 508.2 L601.4 509.9 L605.9 511.5 L609.9 512.8 L613.1 514.0 L615.7 515.0 L617.5 515.9 L618.6 516.7 L619.0 517.5 M424.0 517.5 L424.4 516.7 L425.5 515.9 L427.3 515.0 L429.9 514.0 L433.1 512.8 L437.1 511.5 L441.6 509.9 L446.8 508.2 L452.6 506.1 L458.8 503.8 L465.6 501.1 L472.8 498.1 L480.3 494.7 L488.2 491.0 L496.3 486.8 L504.6 482.3 L513.0 477.3 L521.5 472.0 L530.0 466.2 L538.4 459.9 L546.7 453.3 L554.8 446.3 L562.7 438.9 L570.2 431.1 L577.4 422.9 L584.2 414.4 L590.4 405.6 L596.2 396.5 L601.4 387.1 L605.9 377.4 L609.9 367.6 L613.1 357.6 L615.7 347.4 L617.5 337.1 L618.6 326.8 L619.0 316.4 M424.0 324.7 L424.4 335.1 L425.5 345.4 L427.3 355.7 L429.9 365.9 L433.1 375.9 L437.1 385.7 L441.6 395.4 L446.8 404.8 L452.6 413.9 L458.8 422.7 L465.6 431.2 L472.8 439.4 L480.3 447.2 L488.2 454.6 L496.3 461.6 L504.6 468.2 L513.0 474.5 L521.5 480.3 L530.0 485.6 L538.4 490.6 L546.7 495.1 L554.8 499.3 L562.7 503.0 L570.2 506.4 L577.4 509.4 L584.2 512.1 L590.4 514.4 L596.2 516.5 L601.4 518.2 L605.9 519.8 L609.9 521.1 L613.1 522.3 L615.7 523.3 L617.5 524.2 L618.6 525.0 L619.0 525.8 M424.0 525.8 L424.4 525.0 L425.5 524.2 L427.3 523.3 L429.9 522.3 L433.1 521.1 L437.1 519.8 L441.6 518.2 L446.8 516.5 L452.6 514.4 L458.8 512.1 L465.6 509.4 L472.8 506.4 L480.3 503.0 L488.2 499.3 L496.3 495.1 L504.6 490.6 L513.0 485.6 L521.5 480.3 L530.0 474.5 L538.4 468.2 L546.7 461.6 L554.8 454.6 L562.7 447.2 L570.2 439.4 L577.4 431.2 L584.2 422.7 L590.4 413.9 L596.2 404.8 L601.4 395.4 L605.9 385.7 L609.9 375.9 L613.1 365.9 L615.7 355.7 L617.5 345.4 L618.6 335.1 L619.0 324.7 M424.0 327.2 L424.4 337.6 L425.5 347.9 L427.3 358.2 L429.9 368.4 L433.1 378.4 L437.1 388.2 L441.6 397.9 L446.8 407.3 L452.6 416.4 L458.8 425.2 L465.6 433.7 L472.8 441.9 L480.3 449.7 L488.2 457.1 L496.3 464.1 L504.6 470.7 L513.0 477.0 L521.5 482.8 L530.0 488.1 L538.4 493.1 L546.7 497.6 L554.8 501.8 L562.7 505.5 L570.2 508.9 L577.4 511.9 L584.2 514.6 L590.4 516.9 L596.2 519.0 L601.4 520.7 L605.9 522.3 L609.9 523.6 L613.1 524.8 L615.7 525.8 L617.5 526.7 L618.6 527.5 L619.0 528.3 M424.0 528.3 L424.4 527.5 L425.5 526.7 L427.3 525.8 L429.9 524.8 L433.1 523.6 L437.1 522.3 L441.6 520.7 L446.8 519.0 L452.6 516.9 L458.8 514.6 L465.6 511.9 L472.8 508.9 L480.3 505.5 L488.2 501.8 L496.3 497.6 L504.6 493.1 L513.0 488.1 L521.5 482.8 L530.0 477.0 L538.4 470.7 L546.7 464.1 L554.8 457.1 L562.7 449.7 L570.2 441.9 L577.4 433.7 L584.2 425.2 L590.4 416.4 L596.2 407.3 L601.4 397.9 L605.9 388.2 L609.9 378.4 L613.1 368.4 L615.7 358.2 L617.5 347.9 L618.6 337.6 L619.0 327.2 M424.0 335.5 L424.4 345.9 L425.5 356.2 L427.3 366.5 L429.9 376.7 L433.1 386.7 L437.1 396.5 L441.6 406.2 L446.8 415.6 L452.6 424.7 L458.8 433.5 L465.6 442.0 L472.8 450.2 L480.3 458.0 L488.2 465.4 L496.3 472.4 L504.6 479.0 L513.0 485.3 L521.5 491.1 L530.0 496.4 L538.4 501.4 L546.7 505.9 L554.8 510.1 L562.7 513.8 L570.2 517.2 L577.4 520.2 L584.2 522.9 L590.4 525.2 L596.2 527.3 L601.4 529.0 L605.9 530.6 L609.9 531.9 L613.1 533.1 L615.7 534.1 L617.5 535.0 L618.6 535.8 L619.0 536.6 M424.0 536.6 L424.4 535.8 L425.5 535.0 L427.3 534.1 L429.9 533.1 L433.1 531.9 L437.1 530.6 L441.6 529.0 L446.8 527.3 L452.6 525.2 L458.8 522.9 L465.6 520.2 L472.8 517.2 L480.3 513.8 L488.2 510.1 L496.3 505.9 L504.6 501.4 L513.0 496.4 L521.5 491.1 L530.0 485.3 L538.4 479.0 L546.7 472.4 L554.8 465.4 L562.7 458.0 L570.2 450.2 L577.4 442.0 L584.2 433.5 L590.4 424.7 L596.2 415.6 L601.4 406.2 L605.9 396.5 L609.9 386.7 L613.1 376.7 L615.7 366.5 L617.5 356.2 L618.6 345.9 L619.0 335.5 M424.0 338.0 L424.4 348.4 L425.5 358.7 L427.3 369.0 L429.9 379.2 L433.1 389.2 L437.1 399.0 L441.6 408.7 L446.8 418.1 L452.6 427.2 L458.8 436.0 L465.6 444.5 L472.8 452.7 L480.3 460.5 L488.2 467.9 L496.3 474.9 L504.6 481.5 L513.0 487.8 L521.5 493.6 L530.0 498.9 L538.4 503.9 L546.7 508.4 L554.8 512.6 L562.7 516.3 L570.2 519.7 L577.4 522.7 L584.2 525.4 L590.4 527.7 L596.2 529.8 L601.4 531.5 L605.9 533.1 L609.9 534.4 L613.1 535.6 L615.7 536.6 L617.5 537.5 L618.6 538.3 L619.0 539.1 M424.0 539.1 L424.4 538.3 L425.5 537.5 L427.3 536.6 L429.9 535.6 L433.1 534.4 L437.1 533.1 L441.6 531.5 L446.8 529.8 L452.6 527.7 L458.8 525.4 L465.6 522.7 L472.8 519.7 L480.3 516.3 L488.2 512.6 L496.3 508.4 L504.6 503.9 L513.0 498.9 L521.5 493.6 L530.0 487.8 L538.4 481.5 L546.7 474.9 L554.8 467.9 L562.7 460.5 L570.2 452.7 L577.4 444.5 L584.2 436.0 L590.4 427.2 L596.2 418.1 L601.4 408.7 L605.9 399.0 L609.9 389.2 L613.1 379.2 L615.7 369.0 L617.5 358.7 L618.6 348.4 L619.0 338.0 M424.0 346.3 L424.4 356.7 L425.5 367.0 L427.3 377.3 L429.9 387.5 L433.1 397.5 L437.1 407.3 L441.6 417.0 L446.8 426.4 L452.6 435.5 L458.8 444.3 L465.6 452.8 L472.8 461.0 L480.3 468.8 L488.2 476.2 L496.3 483.2 L504.6 489.8 L513.0 496.1 L521.5 501.9 L530.0 507.2 L538.4 512.2 L546.7 516.7 L554.8 520.9 L562.7 524.6 L570.2 528.0 L577.4 531.0 L584.2 533.7 L590.4 536.0 L596.2 538.1 L601.4 539.8 L605.9 541.4 L609.9 542.7 L613.1 543.9 L615.7 544.9 L617.5 545.8 L618.6 546.6 L619.0 547.4 M424.0 547.4 L424.4 546.6 L425.5 545.8 L427.3 544.9 L429.9 543.9 L433.1 542.7 L437.1 541.4 L441.6 539.8 L446.8 538.1 L452.6 536.0 L458.8 533.7 L465.6 531.0 L472.8 528.0 L480.3 524.6 L488.2 520.9 L496.3 516.7 L504.6 512.2 L513.0 507.2 L521.5 501.9 L530.0 496.1 L538.4 489.8 L546.7 483.2 L554.8 476.2 L562.7 468.8 L570.2 461.0 L577.4 452.8 L584.2 444.3 L590.4 435.5 L596.2 426.4 L601.4 417.0 L605.9 407.3 L609.9 397.5 L613.1 387.5 L615.7 377.3 L617.5 367.0 L618.6 356.7 L619.0 346.3 M424.0 348.8 L424.4 359.2 L425.5 369.5 L427.3 379.8 L429.9 390.0 L433.1 400.0 L437.1 409.8 L441.6 419.5 L446.8 428.9 L452.6 438.0 L458.8 446.8 L465.6 455.3 L472.8 463.5 L480.3 471.3 L488.2 478.7 L496.3 485.7 L504.6 492.3 L513.0 498.6 L521.5 504.4 L530.0 509.7 L538.4 514.7 L546.7 519.2 L554.8 523.4 L562.7 527.1 L570.2 530.5 L577.4 533.5 L584.2 536.2 L590.4 538.5 L596.2 540.6 L601.4 542.3 L605.9 543.9 L609.9 545.2 L613.1 546.4 L615.7 547.4 L617.5 548.3 L618.6 549.1 L619.0 549.9 M424.0 549.9 L424.4 549.1 L425.5 548.3 L427.3 547.4 L429.9 546.4 L433.1 545.2 L437.1 543.9 L441.6 542.3 L446.8 540.6 L452.6 538.5 L458.8 536.2 L465.6 533.5 L472.8 530.5 L480.3 527.1 L488.2 523.4 L496.3 519.2 L504.6 514.7 L513.0 509.7 L521.5 504.4 L530.0 498.6 L538.4 492.3 L546.7 485.7 L554.8 478.7 L562.7 471.3 L570.2 463.5 L577.4 455.3 L584.2 446.8 L590.4 438.0 L596.2 428.9 L601.4 419.5 L605.9 409.8 L609.9 400.0 L613.1 390.0 L615.7 379.8 L617.5 369.5 L618.6 359.2 L619.0 348.8 M424.0 357.1 L424.4 367.5 L425.5 377.8 L427.3 388.1 L429.9 398.3 L433.1 408.3 L437.1 418.1 L441.6 427.8 L446.8 437.2 L452.6 446.3 L458.8 455.1 L465.6 463.6 L472.8 471.8 L480.3 479.6 L488.2 487.0 L496.3 494.0 L504.6 500.6 L513.0 506.9 L521.5 512.7 L530.0 518.0 L538.4 523.0 L546.7 527.5 L554.8 531.7 L562.7 535.4 L570.2 538.8 L577.4 541.8 L584.2 544.5 L590.4 546.8 L596.2 548.9 L601.4 550.6 L605.9 552.2 L609.9 553.5 L613.1 554.7 L615.7 555.7 L617.5 556.6 L618.6 557.4 L619.0 558.2 M424.0 558.2 L424.4 557.4 L425.5 556.6 L427.3 555.7 L429.9 554.7 L433.1 553.5 L437.1 552.2 L441.6 550.6 L446.8 548.9 L452.6 546.8 L458.8 544.5 L465.6 541.8 L472.8 538.8 L480.3 535.4 L488.2 531.7 L496.3 527.5 L504.6 523.0 L513.0 518.0 L521.5 512.7 L530.0 506.9 L538.4 500.6 L546.7 494.0 L554.8 487.0 L562.7 479.6 L570.2 471.8 L577.4 463.6 L584.2 455.1 L590.4 446.3 L596.2 437.2 L601.4 427.8 L605.9 418.1 L609.9 408.3 L613.1 398.3 L615.7 388.1 L617.5 377.8 L618.6 367.5 L619.0 357.1 M424.0 359.6 L424.4 370.0 L425.5 380.3 L427.3 390.6 L429.9 400.8 L433.1 410.8 L437.1 420.6 L441.6 430.3 L446.8 439.7 L452.6 448.8 L458.8 457.6 L465.6 466.1 L472.8 474.3 L480.3 482.1 L488.2 489.5 L496.3 496.5 L504.6 503.1 L513.0 509.4 L521.5 515.2 L530.0 520.5 L538.4 525.5 L546.7 530.0 L554.8 534.2 L562.7 537.9 L570.2 541.3 L577.4 544.3 L584.2 547.0 L590.4 549.3 L596.2 551.4 L601.4 553.1 L605.9 554.7 L609.9 556.0 L613.1 557.2 L615.7 558.2 L617.5 559.1 L618.6 559.9 L619.0 560.7 M424.0 560.7 L424.4 559.9 L425.5 559.1 L427.3 558.2 L429.9 557.2 L433.1 556.0 L437.1 554.7 L441.6 553.1 L446.8 551.4 L452.6 549.3 L458.8 547.0 L465.6 544.3 L472.8 541.3 L480.3 537.9 L488.2 534.2 L496.3 530.0 L504.6 525.5 L513.0 520.5 L521.5 515.2 L530.0 509.4 L538.4 503.1 L546.7 496.5 L554.8 489.5 L562.7 482.1 L570.2 474.3 L577.4 466.1 L584.2 457.6 L590.4 448.8 L596.2 439.7 L601.4 430.3 L605.9 420.6 L609.9 410.8 L613.1 400.8 L615.7 390.6 L617.5 380.3 L618.6 370.0 L619.0 359.6 M424.0 367.9 L424.4 378.3 L425.5 388.6 L427.3 398.9 L429.9 409.1 L433.1 419.1 L437.1 428.9 L441.6 438.6 L446.8 448.0 L452.6 457.1 L458.8 465.9 L465.6 474.4 L472.8 482.6 L480.3 490.4 L488.2 497.8 L496.3 504.8 L504.6 511.4 L513.0 517.7 L521.5 523.5 L530.0 528.8 L538.4 533.8 L546.7 538.3 L554.8 542.5 L562.7 546.2 L570.2 549.6 L577.4 552.6 L584.2 555.3 L590.4 557.6 L596.2 559.7 L601.4 561.4 L605.9 563.0 L609.9 564.3 L613.1 565.5 L615.7 566.5 L617.5 567.4 L618.6 568.2 L619.0 569.0 M424.0 569.0 L424.4 568.2 L425.5 567.4 L427.3 566.5 L429.9 565.5 L433.1 564.3 L437.1 563.0 L441.6 561.4 L446.8 559.7 L452.6 557.6 L458.8 555.3 L465.6 552.6 L472.8 549.6 L480.3 546.2 L488.2 542.5 L496.3 538.3 L504.6 533.8 L513.0 528.8 L521.5 523.5 L530.0 517.7 L538.4 511.4 L546.7 504.8 L554.8 497.8 L562.7 490.4 L570.2 482.6 L577.4 474.4 L584.2 465.9 L590.4 457.1 L596.2 448.0 L601.4 438.6 L605.9 428.9 L609.9 419.1 L613.1 409.1 L615.7 398.9 L617.5 388.6 L618.6 378.3 L619.0 367.9 M424.0 370.4 L424.4 380.8 L425.5 391.1 L427.3 401.4 L429.9 411.6 L433.1 421.6 L437.1 431.4 L441.6 441.1 L446.8 450.5 L452.6 459.6 L458.8 468.4 L465.6 476.9 L472.8 485.1 L480.3 492.9 L488.2 500.3 L496.3 507.3 L504.6 513.9 L513.0 520.2 L521.5 526.0 L530.0 531.3 L538.4 536.3 L546.7 540.8 L554.8 545.0 L562.7 548.7 L570.2 552.1 L577.4 555.1 L584.2 557.8 L590.4 560.1 L596.2 562.2 L601.4 563.9 L605.9 565.5 L609.9 566.8 L613.1 568.0 L615.7 569.0 L617.5 569.9 L618.6 570.7 L619.0 571.5 M424.0 571.5 L424.4 570.7 L425.5 569.9 L427.3 569.0 L429.9 568.0 L433.1 566.8 L437.1 565.5 L441.6 563.9 L446.8 562.2 L452.6 560.1 L458.8 557.8 L465.6 555.1 L472.8 552.1 L480.3 548.7 L488.2 545.0 L496.3 540.8 L504.6 536.3 L513.0 531.3 L521.5 526.0 L530.0 520.2 L538.4 513.9 L546.7 507.3 L554.8 500.3 L562.7 492.9 L570.2 485.1 L577.4 476.9 L584.2 468.4 L590.4 459.6 L596.2 450.5 L601.4 441.1 L605.9 431.4 L609.9 421.6 L613.1 411.6 L615.7 401.4 L617.5 391.1 L618.6 380.8 L619.0 370.4 M424.0 378.7 L424.4 389.1 L425.5 399.4 L427.3 409.7 L429.9 419.9 L433.1 429.9 L437.1 439.7 L441.6 449.4 L446.8 458.8 L452.6 467.9 L458.8 476.7 L465.6 485.2 L472.8 493.4 L480.3 501.2 L488.2 508.6 L496.3 515.6 L504.6 522.2 L513.0 528.5 L521.5 534.2 L530.0 539.6 L538.4 544.6 L546.7 549.1 L554.8 553.3 L562.7 557.0 L570.2 560.4 L577.4 563.4 L584.2 566.1 L590.4 568.4 L596.2 570.5 L601.4 572.2 L605.9 573.8 L609.9 575.1 L613.1 576.3 L615.7 577.3 L617.5 578.2 L618.6 579.0 L619.0 579.8 M424.0 579.8 L424.4 579.0 L425.5 578.2 L427.3 577.3 L429.9 576.3 L433.1 575.1 L437.1 573.8 L441.6 572.2 L446.8 570.5 L452.6 568.4 L458.8 566.1 L465.6 563.4 L472.8 560.4 L480.3 557.0 L488.2 553.3 L496.3 549.1 L504.6 544.6 L513.0 539.6 L521.5 534.2 L530.0 528.5 L538.4 522.2 L546.7 515.6 L554.8 508.6 L562.7 501.2 L570.2 493.4 L577.4 485.2 L584.2 476.7 L590.4 467.9 L596.2 458.8 L601.4 449.4 L605.9 439.7 L609.9 429.9 L613.1 419.9 L615.7 409.7 L617.5 399.4 L618.6 389.1 L619.0 378.7 M424.0 381.2 L424.4 391.6 L425.5 401.9 L427.3 412.2 L429.9 422.4 L433.1 432.4 L437.1 442.2 L441.6 451.9 L446.8 461.3 L452.6 470.4 L458.8 479.2 L465.6 487.7 L472.8 495.9 L480.3 503.7 L488.2 511.1 L496.3 518.1 L504.6 524.7 L513.0 531.0 L521.5 536.8 L530.0 542.1 L538.4 547.1 L546.7 551.6 L554.8 555.8 L562.7 559.5 L570.2 562.9 L577.4 565.9 L584.2 568.6 L590.4 570.9 L596.2 573.0 L601.4 574.7 L605.9 576.3 L609.9 577.6 L613.1 578.8 L615.7 579.8 L617.5 580.7 L618.6 581.5 L619.0 582.3 M424.0 582.3 L424.4 581.5 L425.5 580.7 L427.3 579.8 L429.9 578.8 L433.1 577.6 L437.1 576.3 L441.6 574.7 L446.8 573.0 L452.6 570.9 L458.8 568.6 L465.6 565.9 L472.8 562.9 L480.3 559.5 L488.2 555.8 L496.3 551.6 L504.6 547.1 L513.0 542.1 L521.5 536.8 L530.0 531.0 L538.4 524.7 L546.7 518.1 L554.8 511.1 L562.7 503.7 L570.2 495.9 L577.4 487.7 L584.2 479.2 L590.4 470.4 L596.2 461.3 L601.4 451.9 L605.9 442.2 L609.9 432.4 L613.1 422.4 L615.7 412.2 L617.5 401.9 L618.6 391.6 L619.0 381.2 M424.0 389.5 L424.4 399.9 L425.5 410.2 L427.3 420.5 L429.9 430.7 L433.1 440.7 L437.1 450.5 L441.6 460.2 L446.8 469.6 L452.6 478.7 L458.8 487.5 L465.6 496.0 L472.8 504.2 L480.3 512.0 L488.2 519.4 L496.3 526.4 L504.6 533.0 L513.0 539.3 L521.5 545.1 L530.0 550.4 L538.4 555.4 L546.7 559.9 L554.8 564.1 L562.7 567.8 L570.2 571.2 L577.4 574.2 L584.2 576.9 L590.4 579.2 L596.2 581.3 L601.4 583.0 L605.9 584.6 L609.9 585.9 L613.1 587.1 L615.7 588.1 L617.5 589.0 L618.6 589.8 L619.0 590.6 M424.0 590.6 L424.4 589.8 L425.5 589.0 L427.3 588.1 L429.9 587.1 L433.1 585.9 L437.1 584.6 L441.6 583.0 L446.8 581.3 L452.6 579.2 L458.8 576.9 L465.6 574.2 L472.8 571.2 L480.3 567.8 L488.2 564.1 L496.3 559.9 L504.6 555.4 L513.0 550.4 L521.5 545.1 L530.0 539.3 L538.4 533.0 L546.7 526.4 L554.8 519.4 L562.7 512.0 L570.2 504.2 L577.4 496.0 L584.2 487.5 L590.4 478.7 L596.2 469.6 L601.4 460.2 L605.9 450.5 L609.9 440.7 L613.1 430.7 L615.7 420.5 L617.5 410.2 L618.6 399.9 L619.0 389.5 M424.0 392.0 L424.4 402.4 L425.5 412.7 L427.3 423.0 L429.9 433.2 L433.1 443.2 L437.1 453.0 L441.6 462.7 L446.8 472.1 L452.6 481.2 L458.8 490.0 L465.6 498.5 L472.8 506.7 L480.3 514.5 L488.2 521.9 L496.3 528.9 L504.6 535.5 L513.0 541.8 L521.5 547.6 L530.0 552.9 L538.4 557.9 L546.7 562.4 L554.8 566.6 L562.7 570.3 L570.2 573.7 L577.4 576.7 L584.2 579.4 L590.4 581.7 L596.2 583.8 L601.4 585.5 L605.9 587.1 L609.9 588.4 L613.1 589.6 L615.7 590.6 L617.5 591.5 L618.6 592.3 L619.0 593.1 M424.0 593.1 L424.4 592.3 L425.5 591.5 L427.3 590.6 L429.9 589.6 L433.1 588.4 L437.1 587.1 L441.6 585.5 L446.8 583.8 L452.6 581.7 L458.8 579.4 L465.6 576.7 L472.8 573.7 L480.3 570.3 L488.2 566.6 L496.3 562.4 L504.6 557.9 L513.0 552.9 L521.5 547.6 L530.0 541.8 L538.4 535.5 L546.7 528.9 L554.8 521.9 L562.7 514.5 L570.2 506.7 L577.4 498.5 L584.2 490.0 L590.4 481.2 L596.2 472.1 L601.4 462.7 L605.9 453.0 L609.9 443.2 L613.1 433.2 L615.7 423.0 L617.5 412.7 L618.6 402.4 L619.0 392.0 M424.0 400.3 L424.4 410.7 L425.5 421.0 L427.3 431.3 L429.9 441.5 L433.1 451.5 L437.1 461.3 L441.6 471.0 L446.8 480.4 L452.6 489.5 L458.8 498.3 L465.6 506.8 L472.8 515.0 L480.3 522.8 L488.2 530.2 L496.3 537.2 L504.6 543.8 L513.0 550.1 L521.5 555.9 L530.0 561.2 L538.4 566.2 L546.7 570.7 L554.8 574.9 L562.7 578.6 L570.2 582.0 L577.4 585.0 L584.2 587.7 L590.4 590.0 L596.2 592.1 L601.4 593.8 L605.9 595.4 L609.9 596.7 L613.1 597.9 L615.7 598.9 L617.5 599.8 L618.6 600.6 L619.0 601.4 M424.0 601.4 L424.4 600.6 L425.5 599.8 L427.3 598.9 L429.9 597.9 L433.1 596.7 L437.1 595.4 L441.6 593.8 L446.8 592.1 L452.6 590.0 L458.8 587.7 L465.6 585.0 L472.8 582.0 L480.3 578.6 L488.2 574.9 L496.3 570.7 L504.6 566.2 L513.0 561.2 L521.5 555.9 L530.0 550.1 L538.4 543.8 L546.7 537.2 L554.8 530.2 L562.7 522.8 L570.2 515.0 L577.4 506.8 L584.2 498.3 L590.4 489.5 L596.2 480.4 L601.4 471.0 L605.9 461.3 L609.9 451.5 L613.1 441.5 L615.7 431.3 L617.5 421.0 L618.6 410.7 L619.0 400.3 M424.0 402.8 L424.4 413.2 L425.5 423.5 L427.3 433.8 L429.9 444.0 L433.1 454.0 L437.1 463.8 L441.6 473.5 L446.8 482.9 L452.6 492.0 L458.8 500.8 L465.6 509.3 L472.8 517.5 L480.3 525.3 L488.2 532.7 L496.3 539.7 L504.6 546.3 L513.0 552.6 L521.5 558.4 L530.0 563.7 L538.4 568.7 L546.7 573.2 L554.8 577.4 L562.7 581.1 L570.2 584.5 L577.4 587.5 L584.2 590.2 L590.4 592.5 L596.2 594.6 L601.4 596.3 L605.9 597.9 L609.9 599.2 L613.1 600.4 L615.7 601.4 L617.5 602.3 L618.6 603.1 L619.0 603.9 M424.0 603.9 L424.4 603.1 L425.5 602.3 L427.3 601.4 L429.9 600.4 L433.1 599.2 L437.1 597.9 L441.6 596.3 L446.8 594.6 L452.6 592.5 L458.8 590.2 L465.6 587.5 L472.8 584.5 L480.3 581.1 L488.2 577.4 L496.3 573.2 L504.6 568.7 L513.0 563.7 L521.5 558.4 L530.0 552.6 L538.4 546.3 L546.7 539.7 L554.8 532.7 L562.7 525.3 L570.2 517.5 L577.4 509.3 L584.2 500.8 L590.4 492.0 L596.2 482.9 L601.4 473.5 L605.9 463.8 L609.9 454.0 L613.1 444.0 L615.7 433.8 L617.5 423.5 L618.6 413.2 L619.0 402.8 M424.0 411.1 L424.4 421.5 L425.5 431.8 L427.3 442.1 L429.9 452.3 L433.1 462.3 L437.1 472.1 L441.6 481.8 L446.8 491.2 L452.6 500.3 L458.8 509.1 L465.6 517.6 L472.8 525.8 L480.3 533.6 L488.2 541.0 L496.3 548.0 L504.6 554.6 L513.0 560.9 L521.5 566.7 L530.0 572.0 L538.4 577.0 L546.7 581.5 L554.8 585.7 L562.7 589.4 L570.2 592.8 L577.4 595.8 L584.2 598.5 L590.4 600.8 L596.2 602.9 L601.4 604.6 L605.9 606.2 L609.9 607.5 L613.1 608.7 L615.7 609.7 L617.5 610.6 L618.6 611.4 L619.0 612.2 M424.0 612.2 L424.4 611.4 L425.5 610.6 L427.3 609.7 L429.9 608.7 L433.1 607.5 L437.1 606.2 L441.6 604.6 L446.8 602.9 L452.6 600.8 L458.8 598.5 L465.6 595.8 L472.8 592.8 L480.3 589.4 L488.2 585.7 L496.3 581.5 L504.6 577.0 L513.0 572.0 L521.5 566.7 L530.0 560.9 L538.4 554.6 L546.7 548.0 L554.8 541.0 L562.7 533.6 L570.2 525.8 L577.4 517.6 L584.2 509.1 L590.4 500.3 L596.2 491.2 L601.4 481.8 L605.9 472.1 L609.9 462.3 L613.1 452.3 L615.7 442.1 L617.5 431.8 L618.6 421.5 L619.0 411.1 M424.0 413.6 L424.4 424.0 L425.5 434.3 L427.3 444.6 L429.9 454.8 L433.1 464.8 L437.1 474.6 L441.6 484.3 L446.8 493.7 L452.6 502.8 L458.8 511.6 L465.6 520.1 L472.8 528.3 L480.3 536.1 L488.2 543.5 L496.3 550.5 L504.6 557.1 L513.0 563.4 L521.5 569.2 L530.0 574.5 L538.4 579.5 L546.7 584.0 L554.8 588.2 L562.7 591.9 L570.2 595.3 L577.4 598.3 L584.2 601.0 L590.4 603.3 L596.2 605.4 L601.4 607.1 L605.9 608.7 L609.9 610.0 L613.1 611.2 L615.7 612.2 L617.5 613.1 L618.6 613.9 L619.0 614.7 M424.0 614.7 L424.4 613.9 L425.5 613.1 L427.3 612.2 L429.9 611.2 L433.1 610.0 L437.1 608.7 L441.6 607.1 L446.8 605.4 L452.6 603.3 L458.8 601.0 L465.6 598.3 L472.8 595.3 L480.3 591.9 L488.2 588.2 L496.3 584.0 L504.6 579.5 L513.0 574.5 L521.5 569.2 L530.0 563.4 L538.4 557.1 L546.7 550.5 L554.8 543.5 L562.7 536.1 L570.2 528.3 L577.4 520.1 L584.2 511.6 L590.4 502.8 L596.2 493.7 L601.4 484.3 L605.9 474.6 L609.9 464.8 L613.1 454.8 L615.7 444.6 L617.5 434.3 L618.6 424.0 L619.0 413.6 M424.0 421.9 L424.4 432.3 L425.5 442.6 L427.3 452.9 L429.9 463.1 L433.1 473.1 L437.1 482.9 L441.6 492.6 L446.8 502.0 L452.6 511.1 L458.8 519.9 L465.6 528.4 L472.8 536.6 L480.3 544.4 L488.2 551.8 L496.3 558.8 L504.6 565.4 L513.0 571.7 L521.5 577.5 L530.0 582.8 L538.4 587.8 L546.7 592.3 L554.8 596.5 L562.7 600.2 L570.2 603.6 L577.4 606.6 L584.2 609.3 L590.4 611.6 L596.2 613.7 L601.4 615.4 L605.9 617.0 L609.9 618.3 L613.1 619.5 L615.7 620.5 L617.5 621.4 L618.6 622.2 L619.0 623.0 M424.0 623.0 L424.4 622.2 L425.5 621.4 L427.3 620.5 L429.9 619.5 L433.1 618.3 L437.1 617.0 L441.6 615.4 L446.8 613.7 L452.6 611.6 L458.8 609.3 L465.6 606.6 L472.8 603.6 L480.3 600.2 L488.2 596.5 L496.3 592.3 L504.6 587.8 L513.0 582.8 L521.5 577.5 L530.0 571.7 L538.4 565.4 L546.7 558.8 L554.8 551.8 L562.7 544.4 L570.2 536.6 L577.4 528.4 L584.2 519.9 L590.4 511.1 L596.2 502.0 L601.4 492.6 L605.9 482.9 L609.9 473.1 L613.1 463.1 L615.7 452.9 L617.5 442.6 L618.6 432.3 L619.0 421.9 M424.0 424.4 L424.4 434.8 L425.5 445.1 L427.3 455.4 L429.9 465.6 L433.1 475.6 L437.1 485.4 L441.6 495.1 L446.8 504.5 L452.6 513.6 L458.8 522.4 L465.6 530.9 L472.8 539.1 L480.3 546.9 L488.2 554.3 L496.3 561.3 L504.6 567.9 L513.0 574.2 L521.5 580.0 L530.0 585.3 L538.4 590.3 L546.7 594.8 L554.8 599.0 L562.7 602.7 L570.2 606.1 L577.4 609.1 L584.2 611.8 L590.4 614.1 L596.2 616.2 L601.4 617.9 L605.9 619.5 L609.9 620.8 L613.1 622.0 L615.7 623.0 L617.5 623.9 L618.6 624.7 L619.0 625.5 M424.0 625.5 L424.4 624.7 L425.5 623.9 L427.3 623.0 L429.9 622.0 L433.1 620.8 L437.1 619.5 L441.6 617.9 L446.8 616.2 L452.6 614.1 L458.8 611.8 L465.6 609.1 L472.8 606.1 L480.3 602.7 L488.2 599.0 L496.3 594.8 L504.6 590.3 L513.0 585.3 L521.5 580.0 L530.0 574.2 L538.4 567.9 L546.7 561.3 L554.8 554.3 L562.7 546.9 L570.2 539.1 L577.4 530.9 L584.2 522.4 L590.4 513.6 L596.2 504.5 L601.4 495.1 L605.9 485.4 L609.9 475.6 L613.1 465.6 L615.7 455.4 L617.5 445.1 L618.6 434.8 L619.0 424.4 M424.0 432.7 L424.4 443.1 L425.5 453.4 L427.3 463.7 L429.9 473.9 L433.1 483.9 L437.1 493.7 L441.6 503.4 L446.8 512.8 L452.6 521.9 L458.8 530.7 L465.6 539.2 L472.8 547.4 L480.3 555.2 L488.2 562.6 L496.3 569.6 L504.6 576.2 L513.0 582.5 L521.5 588.2 L530.0 593.6 L538.4 598.6 L546.7 603.1 L554.8 607.3 L562.7 611.0 L570.2 614.4 L577.4 617.4 L584.2 620.1 L590.4 622.4 L596.2 624.5 L601.4 626.2 L605.9 627.8 L609.9 629.1 L613.1 630.3 L615.7 631.3 L617.5 632.2 L618.6 633.0 L619.0 633.8 M424.0 633.8 L424.4 633.0 L425.5 632.2 L427.3 631.3 L429.9 630.3 L433.1 629.1 L437.1 627.8 L441.6 626.2 L446.8 624.5 L452.6 622.4 L458.8 620.1 L465.6 617.4 L472.8 614.4 L480.3 611.0 L488.2 607.3 L496.3 603.1 L504.6 598.6 L513.0 593.6 L521.5 588.2 L530.0 582.5 L538.4 576.2 L546.7 569.6 L554.8 562.6 L562.7 555.2 L570.2 547.4 L577.4 539.2 L584.2 530.7 L590.4 521.9 L596.2 512.8 L601.4 503.4 L605.9 493.7 L609.9 483.9 L613.1 473.9 L615.7 463.7 L617.5 453.4 L618.6 443.1 L619.0 432.7 M424.0 435.2 L424.4 445.6 L425.5 455.9 L427.3 466.2 L429.9 476.4 L433.1 486.4 L437.1 496.2 L441.6 505.9 L446.8 515.3 L452.6 524.4 L458.8 533.2 L465.6 541.7 L472.8 549.9 L480.3 557.7 L488.2 565.1 L496.3 572.1 L504.6 578.7 L513.0 585.0 L521.5 590.8 L530.0 596.1 L538.4 601.1 L546.7 605.6 L554.8 609.8 L562.7 613.5 L570.2 616.9 L577.4 619.9 L584.2 622.6 L590.4 624.9 L596.2 627.0 L601.4 628.7 L605.9 630.3 L609.9 631.6 L613.1 632.8 L615.7 633.8 L617.5 634.7 L618.6 635.5 L619.0 636.3 M424.0 636.3 L424.4 635.5 L425.5 634.7 L427.3 633.8 L429.9 632.8 L433.1 631.6 L437.1 630.3 L441.6 628.7 L446.8 627.0 L452.6 624.9 L458.8 622.6 L465.6 619.9 L472.8 616.9 L480.3 613.5 L488.2 609.8 L496.3 605.6 L504.6 601.1 L513.0 596.1 L521.5 590.8 L530.0 585.0 L538.4 578.7 L546.7 572.1 L554.8 565.1 L562.7 557.7 L570.2 549.9 L577.4 541.7 L584.2 533.2 L590.4 524.4 L596.2 515.3 L601.4 505.9 L605.9 496.2 L609.9 486.4 L613.1 476.4 L615.7 466.2 L617.5 455.9 L618.6 445.6 L619.0 435.2 M424.0 443.5 L424.4 453.9 L425.5 464.2 L427.3 474.5 L429.9 484.7 L433.1 494.7 L437.1 504.5 L441.6 514.2 L446.8 523.6 L452.6 532.7 L458.8 541.5 L465.6 550.0 L472.8 558.2 L480.3 566.0 L488.2 573.4 L496.3 580.4 L504.6 587.0 L513.0 593.3 L521.5 599.1 L530.0 604.4 L538.4 609.4 L546.7 613.9 L554.8 618.1 L562.7 621.8 L570.2 625.2 L577.4 628.2 L584.2 630.9 L590.4 633.2 L596.2 635.3 L601.4 637.0 L605.9 638.6 L609.9 639.9 L613.1 641.1 L615.7 642.1 L617.5 643.0 L618.6 643.8 L619.0 644.6 M424.0 644.6 L424.4 643.8 L425.5 643.0 L427.3 642.1 L429.9 641.1 L433.1 639.9 L437.1 638.6 L441.6 637.0 L446.8 635.3 L452.6 633.2 L458.8 630.9 L465.6 628.2 L472.8 625.2 L480.3 621.8 L488.2 618.1 L496.3 613.9 L504.6 609.4 L513.0 604.4 L521.5 599.1 L530.0 593.3 L538.4 587.0 L546.7 580.4 L554.8 573.4 L562.7 566.0 L570.2 558.2 L577.4 550.0 L584.2 541.5 L590.4 532.7 L596.2 523.6 L601.4 514.2 L605.9 504.5 L609.9 494.7 L613.1 484.7 L615.7 474.5 L617.5 464.2 L618.6 453.9 L619.0 443.5 M424.0 446.0 L424.4 456.4 L425.5 466.7 L427.3 477.0 L429.9 487.2 L433.1 497.2 L437.1 507.0 L441.6 516.7 L446.8 526.1 L452.6 535.2 L458.8 544.0 L465.6 552.5 L472.8 560.7 L480.3 568.5 L488.2 575.9 L496.3 582.9 L504.6 589.5 L513.0 595.8 L521.5 601.6 L530.0 606.9 L538.4 611.9 L546.7 616.4 L554.8 620.6 L562.7 624.3 L570.2 627.7 L577.4 630.7 L584.2 633.4 L590.4 635.7 L596.2 637.8 L601.4 639.5 L605.9 641.1 L609.9 642.4 L613.1 643.6 L615.7 644.6 L617.5 645.5 L618.6 646.3 L619.0 647.1 M424.0 647.1 L424.4 646.3 L425.5 645.5 L427.3 644.6 L429.9 643.6 L433.1 642.4 L437.1 641.1 L441.6 639.5 L446.8 637.8 L452.6 635.7 L458.8 633.4 L465.6 630.7 L472.8 627.7 L480.3 624.3 L488.2 620.6 L496.3 616.4 L504.6 611.9 L513.0 606.9 L521.5 601.6 L530.0 595.8 L538.4 589.5 L546.7 582.9 L554.8 575.9 L562.7 568.5 L570.2 560.7 L577.4 552.5 L584.2 544.0 L590.4 535.2 L596.2 526.1 L601.4 516.7 L605.9 507.0 L609.9 497.2 L613.1 487.2 L615.7 477.0 L617.5 466.7 L618.6 456.4 L619.0 446.0 M424.0 454.3 L424.4 464.7 L425.5 475.0 L427.3 485.3 L429.9 495.5 L433.1 505.5 L437.1 515.3 L441.6 525.0 L446.8 534.4 L452.6 543.5 L458.8 552.3 L465.6 560.8 L472.8 569.0 L480.3 576.8 L488.2 584.2 L496.3 591.2 L504.6 597.8 L513.0 604.1 L521.5 609.9 L530.0 615.2 L538.4 620.2 L546.7 624.7 L554.8 628.9 L562.7 632.6 L570.2 636.0 L577.4 639.0 L584.2 641.7 L590.4 644.0 L596.2 646.1 L601.4 647.8 L605.9 649.4 L609.9 650.7 L613.1 651.9 L615.7 652.9 L617.5 653.8 L618.6 654.6 L619.0 655.4 M424.0 655.4 L424.4 654.6 L425.5 653.8 L427.3 652.9 L429.9 651.9 L433.1 650.7 L437.1 649.4 L441.6 647.8 L446.8 646.1 L452.6 644.0 L458.8 641.7 L465.6 639.0 L472.8 636.0 L480.3 632.6 L488.2 628.9 L496.3 624.7 L504.6 620.2 L513.0 615.2 L521.5 609.9 L530.0 604.1 L538.4 597.8 L546.7 591.2 L554.8 584.2 L562.7 576.8 L570.2 569.0 L577.4 560.8 L584.2 552.3 L590.4 543.5 L596.2 534.4 L601.4 525.0 L605.9 515.3 L609.9 505.5 L613.1 495.5 L615.7 485.3 L617.5 475.0 L618.6 464.7 L619.0 454.3 M424.0 456.8 L424.4 467.2 L425.5 477.5 L427.3 487.8 L429.9 498.0 L433.1 508.0 L437.1 517.8 L441.6 527.5 L446.8 536.9 L452.6 546.0 L458.8 554.8 L465.6 563.3 L472.8 571.5 L480.3 579.3 L488.2 586.7 L496.3 593.7 L504.6 600.3 L513.0 606.6 L521.5 612.4 L530.0 617.7 L538.4 622.7 L546.7 627.2 L554.8 631.4 L562.7 635.1 L570.2 638.5 L577.4 641.5 L584.2 644.2 L590.4 646.5 L596.2 648.6 L601.4 650.3 L605.9 651.9 L609.9 653.2 L613.1 654.4 L615.7 655.4 L617.5 656.3 L618.6 657.1 L619.0 657.9 M424.0 657.9 L424.4 657.1 L425.5 656.3 L427.3 655.4 L429.9 654.4 L433.1 653.2 L437.1 651.9 L441.6 650.3 L446.8 648.6 L452.6 646.5 L458.8 644.2 L465.6 641.5 L472.8 638.5 L480.3 635.1 L488.2 631.4 L496.3 627.2 L504.6 622.7 L513.0 617.7 L521.5 612.4 L530.0 606.6 L538.4 600.3 L546.7 593.7 L554.8 586.7 L562.7 579.3 L570.2 571.5 L577.4 563.3 L584.2 554.8 L590.4 546.0 L596.2 536.9 L601.4 527.5 L605.9 517.8 L609.9 508.0 L613.1 498.0 L615.7 487.8 L617.5 477.5 L618.6 467.2 L619.0 456.8 M424.0 465.1 L424.4 475.5 L425.5 485.8 L427.3 496.1 L429.9 506.3 L433.1 516.3 L437.1 526.1 L441.6 535.8 L446.8 545.2 L452.6 554.3 L458.8 563.1 L465.6 571.6 L472.8 579.8 L480.3 587.6 L488.2 595.0 L496.3 602.0 L504.6 608.6 L513.0 614.9 L521.5 620.7 L530.0 626.0 L538.4 631.0 L546.7 635.5 L554.8 639.7 L562.7 643.4 L570.2 646.8 L577.4 649.8 L584.2 652.5 L590.4 654.8 L596.2 656.9 L601.4 658.6 L605.9 660.2 L609.9 661.5 L613.1 662.7 L615.7 663.7 L617.5 664.6 L618.6 665.4 L619.0 666.2 M424.0 666.2 L424.4 665.4 L425.5 664.6 L427.3 663.7 L429.9 662.7 L433.1 661.5 L437.1 660.2 L441.6 658.6 L446.8 656.9 L452.6 654.8 L458.8 652.5 L465.6 649.8 L472.8 646.8 L480.3 643.4 L488.2 639.7 L496.3 635.5 L504.6 631.0 L513.0 626.0 L521.5 620.7 L530.0 614.9 L538.4 608.6 L546.7 602.0 L554.8 595.0 L562.7 587.6 L570.2 579.8 L577.4 571.6 L584.2 563.1 L590.4 554.3 L596.2 545.2 L601.4 535.8 L605.9 526.1 L609.9 516.3 L613.1 506.3 L615.7 496.1 L617.5 485.8 L618.6 475.5 L619.0 465.1 M424.0 467.6 L424.4 478.0 L425.5 488.3 L427.3 498.6 L429.9 508.8 L433.1 518.8 L437.1 528.6 L441.6 538.3 L446.8 547.7 L452.6 556.8 L458.8 565.6 L465.6 574.1 L472.8 582.3 L480.3 590.1 L488.2 597.5 L496.3 604.5 L504.6 611.1 L513.0 617.4 L521.5 623.2 L530.0 628.5 L538.4 633.5 L546.7 638.0 L554.8 642.2 L562.7 645.9 L570.2 649.3 L577.4 652.3 L584.2 655.0 L590.4 657.3 L596.2 659.4 L601.4 661.1 L605.9 662.7 L609.9 664.0 L613.1 665.2 L615.7 666.2 L617.5 667.1 L618.6 667.9 L619.0 668.7 M424.0 668.7 L424.4 667.9 L425.5 667.1 L427.3 666.2 L429.9 665.2 L433.1 664.0 L437.1 662.7 L441.6 661.1 L446.8 659.4 L452.6 657.3 L458.8 655.0 L465.6 652.3 L472.8 649.3 L480.3 645.9 L488.2 642.2 L496.3 638.0 L504.6 633.5 L513.0 628.5 L521.5 623.2 L530.0 617.4 L538.4 611.1 L546.7 604.5 L554.8 597.5 L562.7 590.1 L570.2 582.3 L577.4 574.1 L584.2 565.6 L590.4 556.8 L596.2 547.7 L601.4 538.3 L605.9 528.6 L609.9 518.8 L613.1 508.8 L615.7 498.6 L617.5 488.3 L618.6 478.0 L619.0 467.6 M424.0 475.9 L424.4 486.3 L425.5 496.6 L427.3 506.9 L429.9 517.1 L433.1 527.1 L437.1 536.9 L441.6 546.6 L446.8 556.0 L452.6 565.1 L458.8 573.9 L465.6 582.4 L472.8 590.6 L480.3 598.4 L488.2 605.8 L496.3 612.8 L504.6 619.4 L513.0 625.7 L521.5 631.5 L530.0 636.8 L538.4 641.8 L546.7 646.3 L554.8 650.5 L562.7 654.2 L570.2 657.6 L577.4 660.6 L584.2 663.3 L590.4 665.6 L596.2 667.7 L601.4 669.4 L605.9 671.0 L609.9 672.3 L613.1 673.5 L615.7 674.5 L617.5 675.4 L618.6 676.2 L619.0 677.0 M424.0 677.0 L424.4 676.2 L425.5 675.4 L427.3 674.5 L429.9 673.5 L433.1 672.3 L437.1 671.0 L441.6 669.4 L446.8 667.7 L452.6 665.6 L458.8 663.3 L465.6 660.6 L472.8 657.6 L480.3 654.2 L488.2 650.5 L496.3 646.3 L504.6 641.8 L513.0 636.8 L521.5 631.5 L530.0 625.7 L538.4 619.4 L546.7 612.8 L554.8 605.8 L562.7 598.4 L570.2 590.6 L577.4 582.4 L584.2 573.9 L590.4 565.1 L596.2 556.0 L601.4 546.6 L605.9 536.9 L609.9 527.1 L613.1 517.1 L615.7 506.9 L617.5 496.6 L618.6 486.3 L619.0 475.9 M424.0 478.4 L424.4 488.8 L425.5 499.1 L427.3 509.4 L429.9 519.6 L433.1 529.6 L437.1 539.4 L441.6 549.1 L446.8 558.5 L452.6 567.6 L458.8 576.4 L465.6 584.9 L472.8 593.1 L480.3 600.9 L488.2 608.3 L496.3 615.3 L504.6 621.9 L513.0 628.2 L521.5 634.0 L530.0 639.3 L538.4 644.3 L546.7 648.8 L554.8 653.0 L562.7 656.7 L570.2 660.1 L577.4 663.1 L584.2 665.8 L590.4 668.1 L596.2 670.2 L601.4 671.9 L605.9 673.5 L609.9 674.8 L613.1 676.0 L615.7 677.0 L617.5 677.9 L618.6 678.7 L619.0 679.5 M424.0 679.5 L424.4 678.7 L425.5 677.9 L427.3 677.0 L429.9 676.0 L433.1 674.8 L437.1 673.5 L441.6 671.9 L446.8 670.2 L452.6 668.1 L458.8 665.8 L465.6 663.1 L472.8 660.1 L480.3 656.7 L488.2 653.0 L496.3 648.8 L504.6 644.3 L513.0 639.3 L521.5 634.0 L530.0 628.2 L538.4 621.9 L546.7 615.3 L554.8 608.3 L562.7 600.9 L570.2 593.1 L577.4 584.9 L584.2 576.4 L590.4 567.6 L596.2 558.5 L601.4 549.1 L605.9 539.4 L609.9 529.6 L613.1 519.6 L615.7 509.4 L617.5 499.1 L618.6 488.8 L619.0 478.4 M424.0 486.7 L424.4 497.1 L425.5 507.4 L427.3 517.7 L429.9 527.9 L433.1 537.9 L437.1 547.7 L441.6 557.4 L446.8 566.8 L452.6 575.9 L458.8 584.7 L465.6 593.2 L472.8 601.4 L480.3 609.2 L488.2 616.6 L496.3 623.6 L504.6 630.2 L513.0 636.5 L521.5 642.2 L530.0 647.6 L538.4 652.6 L546.7 657.1 L554.8 661.3 L562.7 665.0 L570.2 668.4 L577.4 671.4 L584.2 674.1 L590.4 676.4 L596.2 678.5 L601.4 680.2 L605.9 681.8 L609.9 683.1 L613.1 684.3 L615.7 685.3 L617.5 686.2 L618.6 687.0 L619.0 687.8 M424.0 687.8 L424.4 687.0 L425.5 686.2 L427.3 685.3 L429.9 684.3 L433.1 683.1 L437.1 681.8 L441.6 680.2 L446.8 678.5 L452.6 676.4 L458.8 674.1 L465.6 671.4 L472.8 668.4 L480.3 665.0 L488.2 661.3 L496.3 657.1 L504.6 652.6 L513.0 647.6 L521.5 642.2 L530.0 636.5 L538.4 630.2 L546.7 623.6 L554.8 616.6 L562.7 609.2 L570.2 601.4 L577.4 593.2 L584.2 584.7 L590.4 575.9 L596.2 566.8 L601.4 557.4 L605.9 547.7 L609.9 537.9 L613.1 527.9 L615.7 517.7 L617.5 507.4 L618.6 497.1 L619.0 486.7 M424.0 489.2 L424.4 499.6 L425.5 509.9 L427.3 520.2 L429.9 530.4 L433.1 540.4 L437.1 550.2 L441.6 559.9 L446.8 569.3 L452.6 578.4 L458.8 587.2 L465.6 595.7 L472.8 603.9 L480.3 611.7 L488.2 619.1 L496.3 626.1 L504.6 632.7 L513.0 639.0 L521.5 644.8 L530.0 650.1 L538.4 655.1 L546.7 659.6 L554.8 663.8 L562.7 667.5 L570.2 670.9 L577.4 673.9 L584.2 676.6 L590.4 678.9 L596.2 681.0 L601.4 682.7 L605.9 684.3 L609.9 685.6 L613.1 686.8 L615.7 687.8 L617.5 688.7 L618.6 689.5 L619.0 690.3 M424.0 690.3 L424.4 689.5 L425.5 688.7 L427.3 687.8 L429.9 686.8 L433.1 685.6 L437.1 684.3 L441.6 682.7 L446.8 681.0 L452.6 678.9 L458.8 676.6 L465.6 673.9 L472.8 670.9 L480.3 667.5 L488.2 663.8 L496.3 659.6 L504.6 655.1 L513.0 650.1 L521.5 644.8 L530.0 639.0 L538.4 632.7 L546.7 626.1 L554.8 619.1 L562.7 611.7 L570.2 603.9 L577.4 595.7 L584.2 587.2 L590.4 578.4 L596.2 569.3 L601.4 559.9 L605.9 550.2 L609.9 540.4 L613.1 530.4 L615.7 520.2 L617.5 509.9 L618.6 499.6 L619.0 489.2 M424.0 497.5 L424.4 507.9 L425.5 518.2 L427.3 528.5 L429.9 538.7 L433.1 548.7 L437.1 558.5 L441.6 568.2 L446.8 577.6 L452.6 586.7 L458.8 595.5 L465.6 604.0 L472.8 612.2 L480.3 620.0 L488.2 627.4 L496.3 634.4 L504.6 641.0 L513.0 647.3 L521.5 653.1 L530.0 658.4 L538.4 663.4 L546.7 667.9 L554.8 672.1 L562.7 675.8 L570.2 679.2 L577.4 682.2 L584.2 684.9 L590.4 687.2 L596.2 689.3 L601.4 691.0 L605.9 692.6 L609.9 693.9 L613.1 695.1 L615.7 696.1 L617.5 697.0 L618.6 697.8 L619.0 698.6 M424.0 698.6 L424.4 697.8 L425.5 697.0 L427.3 696.1 L429.9 695.1 L433.1 693.9 L437.1 692.6 L441.6 691.0 L446.8 689.3 L452.6 687.2 L458.8 684.9 L465.6 682.2 L472.8 679.2 L480.3 675.8 L488.2 672.1 L496.3 667.9 L504.6 663.4 L513.0 658.4 L521.5 653.1 L530.0 647.3 L538.4 641.0 L546.7 634.4 L554.8 627.4 L562.7 620.0 L570.2 612.2 L577.4 604.0 L584.2 595.5 L590.4 586.7 L596.2 577.6 L601.4 568.2 L605.9 558.5 L609.9 548.7 L613.1 538.7 L615.7 528.5 L617.5 518.2 L618.6 507.9 L619.0 497.5 M424.0 500.0 L424.4 510.4 L425.5 520.7 L427.3 531.0 L429.9 541.2 L433.1 551.2 L437.1 561.0 L441.6 570.7 L446.8 580.1 L452.6 589.2 L458.8 598.0 L465.6 606.5 L472.8 614.7 L480.3 622.5 L488.2 629.9 L496.3 636.9 L504.6 643.5 L513.0 649.8 L521.5 655.6 L530.0 660.9 L538.4 665.9 L546.7 670.4 L554.8 674.6 L562.7 678.3 L570.2 681.7 L577.4 684.7 L584.2 687.4 L590.4 689.7 L596.2 691.8 L601.4 693.5 L605.9 695.1 L609.9 696.4 L613.1 697.6 L615.7 698.6 L617.5 699.5 L618.6 700.3 L619.0 701.1 M424.0 701.1 L424.4 700.3 L425.5 699.5 L427.3 698.6 L429.9 697.6 L433.1 696.4 L437.1 695.1 L441.6 693.5 L446.8 691.8 L452.6 689.7 L458.8 687.4 L465.6 684.7 L472.8 681.7 L480.3 678.3 L488.2 674.6 L496.3 670.4 L504.6 665.9 L513.0 660.9 L521.5 655.6 L530.0 649.8 L538.4 643.5 L546.7 636.9 L554.8 629.9 L562.7 622.5 L570.2 614.7 L577.4 606.5 L584.2 598.0 L590.4 589.2 L596.2 580.1 L601.4 570.7 L605.9 561.0 L609.9 551.2 L613.1 541.2 L615.7 531.0 L617.5 520.7 L618.6 510.4 L619.0 500.0 M424.0 508.3 L424.4 518.7 L425.5 529.0 L427.3 539.3 L429.9 549.5 L433.1 559.5 L437.1 569.3 L441.6 579.0 L446.8 588.4 L452.6 597.5 L458.8 606.3 L465.6 614.8 L472.8 623.0 L480.3 630.8 L488.2 638.2 L496.3 645.2 L504.6 651.8 L513.0 658.1 L521.5 663.9 L530.0 669.2 L538.4 674.2 L546.7 678.7 L554.8 682.9 L562.7 686.6 L570.2 690.0 L577.4 693.0 L584.2 695.7 L590.4 698.0 L596.2 700.1 L601.4 701.8 L605.9 703.4 L609.9 704.7 L613.1 705.9 L615.7 706.9 L617.5 707.8 L618.6 708.6 L619.0 709.4 M424.0 709.4 L424.4 708.6 L425.5 707.8 L427.3 706.9 L429.9 705.9 L433.1 704.7 L437.1 703.4 L441.6 701.8 L446.8 700.1 L452.6 698.0 L458.8 695.7 L465.6 693.0 L472.8 690.0 L480.3 686.6 L488.2 682.9 L496.3 678.7 L504.6 674.2 L513.0 669.2 L521.5 663.9 L530.0 658.1 L538.4 651.8 L546.7 645.2 L554.8 638.2 L562.7 630.8 L570.2 623.0 L577.4 614.8 L584.2 606.3 L590.4 597.5 L596.2 588.4 L601.4 579.0 L605.9 569.3 L609.9 559.5 L613.1 549.5 L615.7 539.3 L617.5 529.0 L618.6 518.7 L619.0 508.3 M424.0 510.8 L424.4 521.2 L425.5 531.5 L427.3 541.8 L429.9 552.0 L433.1 562.0 L437.1 571.8 L441.6 581.5 L446.8 590.9 L452.6 600.0 L458.8 608.8 L465.6 617.3 L472.8 625.5 L480.3 633.3 L488.2 640.7 L496.3 647.7 L504.6 654.3 L513.0 660.6 L521.5 666.4 L530.0 671.7 L538.4 676.7 L546.7 681.2 L554.8 685.4 L562.7 689.1 L570.2 692.5 L577.4 695.5 L584.2 698.2 L590.4 700.5 L596.2 702.6 L601.4 704.3 L605.9 705.9 L609.9 707.2 L613.1 708.4 L615.7 709.4 L617.5 710.3 L618.6 711.1 L619.0 711.9 M424.0 711.9 L424.4 711.1 L425.5 710.3 L427.3 709.4 L429.9 708.4 L433.1 707.2 L437.1 705.9 L441.6 704.3 L446.8 702.6 L452.6 700.5 L458.8 698.2 L465.6 695.5 L472.8 692.5 L480.3 689.1 L488.2 685.4 L496.3 681.2 L504.6 676.7 L513.0 671.7 L521.5 666.4 L530.0 660.6 L538.4 654.3 L546.7 647.7 L554.8 640.7 L562.7 633.3 L570.2 625.5 L577.4 617.3 L584.2 608.8 L590.4 600.0 L596.2 590.9 L601.4 581.5 L605.9 571.8 L609.9 562.0 L613.1 552.0 L615.7 541.8 L617.5 531.5 L618.6 521.2 L619.0 510.8 M424.0 519.1 L424.4 529.5 L425.5 539.8 L427.3 550.1 L429.9 560.3 L433.1 570.3 L437.1 580.1 L441.6 589.8 L446.8 599.2 L452.6 608.3 L458.8 617.1 L465.6 625.6 L472.8 633.8 L480.3 641.6 L488.2 649.0 L496.3 656.0 L504.6 662.6 L513.0 668.9 L521.5 674.7 L530.0 680.0 L538.4 685.0 L546.7 689.5 L554.8 693.7 L562.7 697.4 L570.2 700.8 L577.4 703.8 L584.2 706.5 L590.4 708.8 L596.2 710.9 L601.4 712.6 L605.9 714.2 L609.9 715.5 L613.1 716.7 L615.7 717.7 L617.5 718.6 L618.6 719.4 L619.0 720.2 M424.0 720.2 L424.4 719.4 L425.5 718.6 L427.3 717.7 L429.9 716.7 L433.1 715.5 L437.1 714.2 L441.6 712.6 L446.8 710.9 L452.6 708.8 L458.8 706.5 L465.6 703.8 L472.8 700.8 L480.3 697.4 L488.2 693.7 L496.3 689.5 L504.6 685.0 L513.0 680.0 L521.5 674.7 L530.0 668.9 L538.4 662.6 L546.7 656.0 L554.8 649.0 L562.7 641.6 L570.2 633.8 L577.4 625.6 L584.2 617.1 L590.4 608.3 L596.2 599.2 L601.4 589.8 L605.9 580.1 L609.9 570.3 L613.1 560.3 L615.7 550.1 L617.5 539.8 L618.6 529.5 L619.0 519.1 M424.0 521.6 L424.4 532.0 L425.5 542.3 L427.3 552.6 L429.9 562.8 L433.1 572.8 L437.1 582.6 L441.6 592.3 L446.8 601.7 L452.6 610.8 L458.8 619.6 L465.6 628.1 L472.8 636.3 L480.3 644.1 L488.2 651.5 L496.3 658.5 L504.6 665.1 L513.0 671.4 L521.5 677.2 L530.0 682.5 L538.4 687.5 L546.7 692.0 L554.8 696.2 L562.7 699.9 L570.2 703.3 L577.4 706.3 L584.2 709.0 L590.4 711.3 L596.2 713.4 L601.4 715.1 L605.9 716.7 L609.9 718.0 L613.1 719.2 L615.7 720.2 L617.5 721.1 L618.6 721.9 L619.0 722.7 M424.0 722.7 L424.4 721.9 L425.5 721.1 L427.3 720.2 L429.9 719.2 L433.1 718.0 L437.1 716.7 L441.6 715.1 L446.8 713.4 L452.6 711.3 L458.8 709.0 L465.6 706.3 L472.8 703.3 L480.3 699.9 L488.2 696.2 L496.3 692.0 L504.6 687.5 L513.0 682.5 L521.5 677.2 L530.0 671.4 L538.4 665.1 L546.7 658.5 L554.8 651.5 L562.7 644.1 L570.2 636.3 L577.4 628.1 L584.2 619.6 L590.4 610.8 L596.2 601.7 L601.4 592.3 L605.9 582.6 L609.9 572.8 L613.1 562.8 L615.7 552.6 L617.5 542.3 L618.6 532.0 L619.0 521.6 M424.0 529.9 L424.4 540.3 L425.5 550.6 L427.3 560.9 L429.9 571.1 L433.1 581.1 L437.1 590.9 L441.6 600.6 L446.8 610.0 L452.6 619.1 L458.8 627.9 L465.6 636.4 L472.8 644.6 L480.3 652.4 L488.2 659.8 L496.3 666.8 L504.6 673.4 L513.0 679.7 L521.5 685.5 L530.0 690.8 L538.4 695.8 L546.7 700.3 L554.8 704.5 L562.7 708.2 L570.2 711.6 L577.4 714.6 L584.2 717.3 L590.4 719.6 L596.2 721.7 L601.4 723.4 L605.9 725.0 L609.9 726.3 L613.1 727.5 L615.7 728.5 L617.5 729.4 L618.6 730.2 L619.0 731.0 M424.0 731.0 L424.4 730.2 L425.5 729.4 L427.3 728.5 L429.9 727.5 L433.1 726.3 L437.1 725.0 L441.6 723.4 L446.8 721.7 L452.6 719.6 L458.8 717.3 L465.6 714.6 L472.8 711.6 L480.3 708.2 L488.2 704.5 L496.3 700.3 L504.6 695.8 L513.0 690.8 L521.5 685.5 L530.0 679.7 L538.4 673.4 L546.7 666.8 L554.8 659.8 L562.7 652.4 L570.2 644.6 L577.4 636.4 L584.2 627.9 L590.4 619.1 L596.2 610.0 L601.4 600.6 L605.9 590.9 L609.9 581.1 L613.1 571.1 L615.7 560.9 L617.5 550.6 L618.6 540.3 L619.0 529.9 M424.0 532.4 L424.4 542.8 L425.5 553.1 L427.3 563.4 L429.9 573.6 L433.1 583.6 L437.1 593.4 L441.6 603.1 L446.8 612.5 L452.6 621.6 L458.8 630.4 L465.6 638.9 L472.8 647.1 L480.3 654.9 L488.2 662.3 L496.3 669.3 L504.6 675.9 L513.0 682.2 L521.5 688.0 L530.0 693.3 L538.4 698.3 L546.7 702.8 L554.8 707.0 L562.7 710.7 L570.2 714.1 L577.4 717.1 L584.2 719.8 L590.4 722.1 L596.2 724.2 L601.4 725.9 L605.9 727.5 L609.9 728.8 L613.1 730.0 L615.7 731.0 L617.5 731.9 L618.6 732.7 L619.0 733.5 M424.0 733.5 L424.4 732.7 L425.5 731.9 L427.3 731.0 L429.9 730.0 L433.1 728.8 L437.1 727.5 L441.6 725.9 L446.8 724.2 L452.6 722.1 L458.8 719.8 L465.6 717.1 L472.8 714.1 L480.3 710.7 L488.2 707.0 L496.3 702.8 L504.6 698.3 L513.0 693.3 L521.5 688.0 L530.0 682.2 L538.4 675.9 L546.7 669.3 L554.8 662.3 L562.7 654.9 L570.2 647.1 L577.4 638.9 L584.2 630.4 L590.4 621.6 L596.2 612.5 L601.4 603.1 L605.9 593.4 L609.9 583.6 L613.1 573.6 L615.7 563.4 L617.5 553.1 L618.6 542.8 L619.0 532.4 M424.0 540.7 L424.4 551.1 L425.5 561.4 L427.3 571.7 L429.9 581.9 L433.1 591.9 L437.1 601.7 L441.6 611.4 L446.8 620.8 L452.6 629.9 L458.8 638.7 L465.6 647.2 L472.8 655.4 L480.3 663.2 L488.2 670.6 L496.3 677.6 L504.6 684.2 L513.0 690.5 L521.5 696.2 L530.0 701.6 L538.4 706.6 L546.7 711.1 L554.8 715.3 L562.7 719.0 L570.2 722.4 L577.4 725.4 L584.2 728.1 L590.4 730.4 L596.2 732.5 L601.4 734.2 L605.9 735.8 L609.9 737.1 L613.1 738.3 L615.7 739.3 L617.5 740.2 L618.6 741.0 L619.0 741.8 M424.0 741.8 L424.4 741.0 L425.5 740.2 L427.3 739.3 L429.9 738.3 L433.1 737.1 L437.1 735.8 L441.6 734.2 L446.8 732.5 L452.6 730.4 L458.8 728.1 L465.6 725.4 L472.8 722.4 L480.3 719.0 L488.2 715.3 L496.3 711.1 L504.6 706.6 L513.0 701.6 L521.5 696.2 L530.0 690.5 L538.4 684.2 L546.7 677.6 L554.8 670.6 L562.7 663.2 L570.2 655.4 L577.4 647.2 L584.2 638.7 L590.4 629.9 L596.2 620.8 L601.4 611.4 L605.9 601.7 L609.9 591.9 L613.1 581.9 L615.7 571.7 L617.5 561.4 L618.6 551.1 L619.0 540.7 M424.0 543.2 L424.4 553.6 L425.5 563.9 L427.3 574.2 L429.9 584.4 L433.1 594.4 L437.1 604.2 L441.6 613.9 L446.8 623.3 L452.6 632.4 L458.8 641.2 L465.6 649.7 L472.8 657.9 L480.3 665.7 L488.2 673.1 L496.3 680.1 L504.6 686.7 L513.0 693.0 L521.5 698.8 L530.0 704.1 L538.4 709.1 L546.7 713.6 L554.8 717.8 L562.7 721.5 L570.2 724.9 L577.4 727.9 L584.2 730.6 L590.4 732.9 L596.2 735.0 L601.4 736.7 L605.9 738.3 L609.9 739.6 L613.1 740.8 L615.7 741.8 L617.5 742.7 L618.6 743.5 L619.0 744.3 M424.0 744.3 L424.4 743.5 L425.5 742.7 L427.3 741.8 L429.9 740.8 L433.1 739.6 L437.1 738.3 L441.6 736.7 L446.8 735.0 L452.6 732.9 L458.8 730.6 L465.6 727.9 L472.8 724.9 L480.3 721.5 L488.2 717.8 L496.3 713.6 L504.6 709.1 L513.0 704.1 L521.5 698.8 L530.0 693.0 L538.4 686.7 L546.7 680.1 L554.8 673.1 L562.7 665.7 L570.2 657.9 L577.4 649.7 L584.2 641.2 L590.4 632.4 L596.2 623.3 L601.4 613.9 L605.9 604.2 L609.9 594.4 L613.1 584.4 L615.7 574.2 L617.5 563.9 L618.6 553.6 L619.0 543.2 M424.0 551.5 L424.4 561.9 L425.5 572.2 L427.3 582.5 L429.9 592.7 L433.1 602.7 L437.1 612.5 L441.6 622.2 L446.8 631.6 L452.6 640.7 L458.8 649.5 L465.6 658.0 L472.8 666.2 L480.3 674.0 L488.2 681.4 L496.3 688.4 L504.6 695.0 L513.0 701.3 L521.5 707.1 L530.0 712.4 L538.4 717.4 L546.7 721.9 L554.8 726.1 L562.7 729.8 L570.2 733.2 L577.4 736.2 L584.2 738.9 L590.4 741.2 L596.2 743.3 L601.4 745.0 L605.9 746.6 L609.9 747.9 L613.1 749.1 L615.7 750.1 L617.5 751.0 L618.6 751.8 L619.0 752.6 M424.0 752.6 L424.4 751.8 L425.5 751.0 L427.3 750.1 L429.9 749.1 L433.1 747.9 L437.1 746.6 L441.6 745.0 L446.8 743.3 L452.6 741.2 L458.8 738.9 L465.6 736.2 L472.8 733.2 L480.3 729.8 L488.2 726.1 L496.3 721.9 L504.6 717.4 L513.0 712.4 L521.5 707.1 L530.0 701.3 L538.4 695.0 L546.7 688.4 L554.8 681.4 L562.7 674.0 L570.2 666.2 L577.4 658.0 L584.2 649.5 L590.4 640.7 L596.2 631.6 L601.4 622.2 L605.9 612.5 L609.9 602.7 L613.1 592.7 L615.7 582.5 L617.5 572.2 L618.6 561.9 L619.0 551.5 M424.0 554.0 L424.4 564.4 L425.5 574.7 L427.3 585.0 L429.9 595.2 L433.1 605.2 L437.1 615.0 L441.6 624.7 L446.8 634.1 L452.6 643.2 L458.8 652.0 L465.6 660.5 L472.8 668.7 L480.3 676.5 L488.2 683.9 L496.3 690.9 L504.6 697.5 L513.0 703.8 L521.5 709.6 L530.0 714.9 L538.4 719.9 L546.7 724.4 L554.8 728.6 L562.7 732.3 L570.2 735.7 L577.4 738.7 L584.2 741.4 L590.4 743.7 L596.2 745.8 L601.4 747.5 L605.9 749.1 L609.9 750.4 L613.1 751.6 L615.7 752.6 L617.5 753.5 L618.6 754.3 L619.0 755.1 M424.0 755.1 L424.4 754.3 L425.5 753.5 L427.3 752.6 L429.9 751.6 L433.1 750.4 L437.1 749.1 L441.6 747.5 L446.8 745.8 L452.6 743.7 L458.8 741.4 L465.6 738.7 L472.8 735.7 L480.3 732.3 L488.2 728.6 L496.3 724.4 L504.6 719.9 L513.0 714.9 L521.5 709.6 L530.0 703.8 L538.4 697.5 L546.7 690.9 L554.8 683.9 L562.7 676.5 L570.2 668.7 L577.4 660.5 L584.2 652.0 L590.4 643.2 L596.2 634.1 L601.4 624.7 L605.9 615.0 L609.9 605.2 L613.1 595.2 L615.7 585.0 L617.5 574.7 L618.6 564.4 L619.0 554.0 M424.0 562.3 L424.4 572.7 L425.5 583.0 L427.3 593.3 L429.9 603.5 L433.1 613.5 L437.1 623.3 L441.6 633.0 L446.8 642.4 L452.6 651.5 L458.8 660.3 L465.6 668.8 L472.8 677.0 L480.3 684.8 L488.2 692.2 L496.3 699.2 L504.6 705.8 L513.0 712.1 L521.5 717.9 L530.0 723.2 L538.4 728.2 L546.7 732.7 L554.8 736.9 L562.7 740.6 L570.2 744.0 L577.4 747.0 L584.2 749.7 L590.4 752.0 L596.2 754.1 L601.4 755.8 L605.9 757.4 L609.9 758.7 L613.1 759.9 L615.7 760.9 L617.5 761.8 L618.6 762.6 L619.0 763.4 M424.0 763.4 L424.4 762.6 L425.5 761.8 L427.3 760.9 L429.9 759.9 L433.1 758.7 L437.1 757.4 L441.6 755.8 L446.8 754.1 L452.6 752.0 L458.8 749.7 L465.6 747.0 L472.8 744.0 L480.3 740.6 L488.2 736.9 L496.3 732.7 L504.6 728.2 L513.0 723.2 L521.5 717.9 L530.0 712.1 L538.4 705.8 L546.7 699.2 L554.8 692.2 L562.7 684.8 L570.2 677.0 L577.4 668.8 L584.2 660.3 L590.4 651.5 L596.2 642.4 L601.4 633.0 L605.9 623.3 L609.9 613.5 L613.1 603.5 L615.7 593.3 L617.5 583.0 L618.6 572.7 L619.0 562.3 M424.0 564.8 L424.4 575.2 L425.5 585.5 L427.3 595.8 L429.9 606.0 L433.1 616.0 L437.1 625.8 L441.6 635.5 L446.8 644.9 L452.6 654.0 L458.8 662.8 L465.6 671.3 L472.8 679.5 L480.3 687.3 L488.2 694.7 L496.3 701.7 L504.6 708.3 L513.0 714.6 L521.5 720.4 L530.0 725.7 L538.4 730.7 L546.7 735.2 L554.8 739.4 L562.7 743.1 L570.2 746.5 L577.4 749.5 L584.2 752.2 L590.4 754.5 L596.2 756.6 L601.4 758.3 L605.9 759.9 L609.9 761.2 L613.1 762.4 L615.7 763.4 L617.5 764.3 L618.6 765.1 L619.0 765.9 M424.0 765.9 L424.4 765.1 L425.5 764.3 L427.3 763.4 L429.9 762.4 L433.1 761.2 L437.1 759.9 L441.6 758.3 L446.8 756.6 L452.6 754.5 L458.8 752.2 L465.6 749.5 L472.8 746.5 L480.3 743.1 L488.2 739.4 L496.3 735.2 L504.6 730.7 L513.0 725.7 L521.5 720.4 L530.0 714.6 L538.4 708.3 L546.7 701.7 L554.8 694.7 L562.7 687.3 L570.2 679.5 L577.4 671.3 L584.2 662.8 L590.4 654.0 L596.2 644.9 L601.4 635.5 L605.9 625.8 L609.9 616.0 L613.1 606.0 L615.7 595.8 L617.5 585.5 L618.6 575.2 L619.0 564.8 M424.0 573.1 L424.4 583.5 L425.5 593.8 L427.3 604.1 L429.9 614.3 L433.1 624.3 L437.1 634.1 L441.6 643.8 L446.8 653.2 L452.6 662.3 L458.8 671.1 L465.6 679.6 L472.8 687.8 L480.3 695.6 L488.2 703.0 L496.3 710.0 L504.6 716.6 L513.0 722.9 L521.5 728.7 L530.0 734.0 L538.4 739.0 L546.7 743.5 L554.8 747.7 L562.7 751.4 L570.2 754.8 L577.4 757.8 L584.2 760.5 L590.4 762.8 L596.2 764.9 L601.4 766.6 L605.9 768.2 L609.9 769.5 L613.1 770.7 L615.7 771.7 L617.5 772.6 L618.6 773.4 L619.0 774.2 M424.0 774.2 L424.4 773.4 L425.5 772.6 L427.3 771.7 L429.9 770.7 L433.1 769.5 L437.1 768.2 L441.6 766.6 L446.8 764.9 L452.6 762.8 L458.8 760.5 L465.6 757.8 L472.8 754.8 L480.3 751.4 L488.2 747.7 L496.3 743.5 L504.6 739.0 L513.0 734.0 L521.5 728.7 L530.0 722.9 L538.4 716.6 L546.7 710.0 L554.8 703.0 L562.7 695.6 L570.2 687.8 L577.4 679.6 L584.2 671.1 L590.4 662.3 L596.2 653.2 L601.4 643.8 L605.9 634.1 L609.9 624.3 L613.1 614.3 L615.7 604.1 L617.5 593.8 L618.6 583.5 L619.0 573.1 M424.0 575.6 L424.4 586.0 L425.5 596.3 L427.3 606.6 L429.9 616.8 L433.1 626.8 L437.1 636.6 L441.6 646.3 L446.8 655.7 L452.6 664.8 L458.8 673.6 L465.6 682.1 L472.8 690.3 L480.3 698.1 L488.2 705.5 L496.3 712.5 L504.6 719.1 L513.0 725.4 L521.5 731.2 L530.0 736.5 L538.4 741.5 L546.7 746.0 L554.8 750.2 L562.7 753.9 L570.2 757.3 L577.4 760.3 L584.2 763.0 L590.4 765.3 L596.2 767.4 L601.4 769.1 L605.9 770.7 L609.9 772.0 L613.1 773.2 L615.7 774.2 L617.5 775.1 L618.6 775.9 L619.0 776.7 M424.0 776.7 L424.4 775.9 L425.5 775.1 L427.3 774.2 L429.9 773.2 L433.1 772.0 L437.1 770.7 L441.6 769.1 L446.8 767.4 L452.6 765.3 L458.8 763.0 L465.6 760.3 L472.8 757.3 L480.3 753.9 L488.2 750.2 L496.3 746.0 L504.6 741.5 L513.0 736.5 L521.5 731.2 L530.0 725.4 L538.4 719.1 L546.7 712.5 L554.8 705.5 L562.7 698.1 L570.2 690.3 L577.4 682.1 L584.2 673.6 L590.4 664.8 L596.2 655.7 L601.4 646.3 L605.9 636.6 L609.9 626.8 L613.1 616.8 L615.7 606.6 L617.5 596.3 L618.6 586.0 L619.0 575.6 M424.0 583.9 L424.4 594.3 L425.5 604.6 L427.3 614.9 L429.9 625.1 L433.1 635.1 L437.1 644.9 L441.6 654.6 L446.8 664.0 L452.6 673.1 L458.8 681.9 L465.6 690.4 L472.8 698.6 L480.3 706.4 L488.2 713.8 L496.3 720.8 L504.6 727.4 L513.0 733.7 L521.5 739.5 L530.0 744.8 L538.4 749.8 L546.7 754.3 L554.8 758.5 L562.7 762.2 L570.2 765.6 L577.4 768.6 L584.2 771.3 L590.4 773.6 L596.2 775.7 L601.4 777.4 L605.9 779.0 L609.9 780.3 L613.1 781.5 L615.7 782.5 L617.5 783.4 L618.6 784.2 L619.0 785.0 M424.0 785.0 L424.4 784.2 L425.5 783.4 L427.3 782.5 L429.9 781.5 L433.1 780.3 L437.1 779.0 L441.6 777.4 L446.8 775.7 L452.6 773.6 L458.8 771.3 L465.6 768.6 L472.8 765.6 L480.3 762.2 L488.2 758.5 L496.3 754.3 L504.6 749.8 L513.0 744.8 L521.5 739.5 L530.0 733.7 L538.4 727.4 L546.7 720.8 L554.8 713.8 L562.7 706.4 L570.2 698.6 L577.4 690.4 L584.2 681.9 L590.4 673.1 L596.2 664.0 L601.4 654.6 L605.9 644.9 L609.9 635.1 L613.1 625.1 L615.7 614.9 L617.5 604.6 L618.6 594.3 L619.0 583.9 M424.0 586.4 L424.4 596.8 L425.5 607.1 L427.3 617.4 L429.9 627.6 L433.1 637.6 L437.1 647.4 L441.6 657.1 L446.8 666.5 L452.6 675.6 L458.8 684.4 L465.6 692.9 L472.8 701.1 L480.3 708.9 L488.2 716.3 L496.3 723.3 L504.6 729.9 L513.0 736.2 L521.5 742.0 L530.0 747.3 L538.4 752.3 L546.7 756.8 L554.8 761.0 L562.7 764.7 L570.2 768.1 L577.4 771.1 L584.2 773.8 L590.4 776.1 L596.2 778.2 L601.4 779.9 L605.9 781.5 L609.9 782.8 L613.1 784.0 L615.7 785.0 L617.5 785.9 L618.6 786.7 L619.0 787.5 M424.0 787.5 L424.4 786.7 L425.5 785.9 L427.3 785.0 L429.9 784.0 L433.1 782.8 L437.1 781.5 L441.6 779.9 L446.8 778.2 L452.6 776.1 L458.8 773.8 L465.6 771.1 L472.8 768.1 L480.3 764.7 L488.2 761.0 L496.3 756.8 L504.6 752.3 L513.0 747.3 L521.5 742.0 L530.0 736.2 L538.4 729.9 L546.7 723.3 L554.8 716.3 L562.7 708.9 L570.2 701.1 L577.4 692.9 L584.2 684.4 L590.4 675.6 L596.2 666.5 L601.4 657.1 L605.9 647.4 L609.9 637.6 L613.1 627.6 L615.7 617.4 L617.5 607.1 L618.6 596.8 L619.0 586.4 M424.0 594.7 L424.4 605.1 L425.5 615.4 L427.3 625.7 L429.9 635.9 L433.1 645.9 L437.1 655.7 L441.6 665.4 L446.8 674.8 L452.6 683.9 L458.8 692.7 L465.6 701.2 L472.8 709.4 L480.3 717.2 L488.2 724.6 L496.3 731.6 L504.6 738.2 L513.0 744.5 L521.5 750.2 L530.0 755.6 L538.4 760.6 L546.7 765.1 L554.8 769.3 L562.7 773.0 L570.2 776.4 L577.4 779.4 L584.2 782.1 L590.4 784.4 L596.2 786.5 L601.4 788.2 L605.9 789.8 L609.9 791.1 L613.1 792.3 L615.7 793.3 L617.5 794.2 L618.6 795.0 L619.0 795.8 M424.0 795.8 L424.4 795.0 L425.5 794.2 L427.3 793.3 L429.9 792.3 L433.1 791.1 L437.1 789.8 L441.6 788.2 L446.8 786.5 L452.6 784.4 L458.8 782.1 L465.6 779.4 L472.8 776.4 L480.3 773.0 L488.2 769.3 L496.3 765.1 L504.6 760.6 L513.0 755.6 L521.5 750.2 L530.0 744.5 L538.4 738.2 L546.7 731.6 L554.8 724.6 L562.7 717.2 L570.2 709.4 L577.4 701.2 L584.2 692.7 L590.4 683.9 L596.2 674.8 L601.4 665.4 L605.9 655.7 L609.9 645.9 L613.1 635.9 L615.7 625.7 L617.5 615.4 L618.6 605.1 L619.0 594.7 M424.0 597.2 L424.4 607.6 L425.5 617.9 L427.3 628.2 L429.9 638.4 L433.1 648.4 L437.1 658.2 L441.6 667.9 L446.8 677.3 L452.6 686.4 L458.8 695.2 L465.6 703.7 L472.8 711.9 L480.3 719.7 L488.2 727.1 L496.3 734.1 L504.6 740.7 L513.0 747.0 L521.5 752.8 L530.0 758.1 L538.4 763.1 L546.7 767.6 L554.8 771.8 L562.7 775.5 L570.2 778.9 L577.4 781.9 L584.2 784.6 L590.4 786.9 L596.2 789.0 L601.4 790.7 L605.9 792.3 L609.9 793.6 L613.1 794.8 L615.7 795.8 L617.5 796.7 L618.6 797.5 L619.0 798.3 M424.0 798.3 L424.4 797.5 L425.5 796.7 L427.3 795.8 L429.9 794.8 L433.1 793.6 L437.1 792.3 L441.6 790.7 L446.8 789.0 L452.6 786.9 L458.8 784.6 L465.6 781.9 L472.8 778.9 L480.3 775.5 L488.2 771.8 L496.3 767.6 L504.6 763.1 L513.0 758.1 L521.5 752.8 L530.0 747.0 L538.4 740.7 L546.7 734.1 L554.8 727.1 L562.7 719.7 L570.2 711.9 L577.4 703.7 L584.2 695.2 L590.4 686.4 L596.2 677.3 L601.4 667.9 L605.9 658.2 L609.9 648.4 L613.1 638.4 L615.7 628.2 L617.5 617.9 L618.6 607.6 L619.0 597.2 M424.0 605.5 L424.4 615.9 L425.5 626.2 L427.3 636.5 L429.9 646.7 L433.1 656.7 L437.1 666.5 L441.6 676.2 L446.8 685.6 L452.6 694.7 L458.8 703.5 L465.6 712.0 L472.8 720.2 L480.3 728.0 L488.2 735.4 L496.3 742.4 L504.6 749.0 L513.0 755.3 L521.5 761.1 L530.0 766.4 L538.4 771.4 L546.7 775.9 L554.8 780.1 L562.7 783.8 L570.2 787.2 L577.4 790.2 L584.2 792.9 L590.4 795.2 L596.2 797.3 L601.4 799.0 L605.9 800.6 L609.9 801.9 L613.1 803.1 L615.7 804.1 L617.5 805.0 L618.6 805.8 L619.0 806.6 M424.0 806.6 L424.4 805.8 L425.5 805.0 L427.3 804.1 L429.9 803.1 L433.1 801.9 L437.1 800.6 L441.6 799.0 L446.8 797.3 L452.6 795.2 L458.8 792.9 L465.6 790.2 L472.8 787.2 L480.3 783.8 L488.2 780.1 L496.3 775.9 L504.6 771.4 L513.0 766.4 L521.5 761.1 L530.0 755.3 L538.4 749.0 L546.7 742.4 L554.8 735.4 L562.7 728.0 L570.2 720.2 L577.4 712.0 L584.2 703.5 L590.4 694.7 L596.2 685.6 L601.4 676.2 L605.9 666.5 L609.9 656.7 L613.1 646.7 L615.7 636.5 L617.5 626.2 L618.6 615.9 L619.0 605.5 M424.0 608.0 L424.4 618.4 L425.5 628.7 L427.3 639.0 L429.9 649.2 L433.1 659.2 L437.1 669.0 L441.6 678.7 L446.8 688.1 L452.6 697.2 L458.8 706.0 L465.6 714.5 L472.8 722.7 L480.3 730.5 L488.2 737.9 L496.3 744.9 L504.6 751.5 L513.0 757.8 L521.5 763.6 L530.0 768.9 L538.4 773.9 L546.7 778.4 L554.8 782.6 L562.7 786.3 L570.2 789.7 L577.4 792.7 L584.2 795.4 L590.4 797.7 L596.2 799.8 L601.4 801.5 L605.9 803.1 L609.9 804.4 L613.1 805.6 L615.7 806.6 L617.5 807.5 L618.6 808.3 L619.0 809.1 M424.0 809.1 L424.4 808.3 L425.5 807.5 L427.3 806.6 L429.9 805.6 L433.1 804.4 L437.1 803.1 L441.6 801.5 L446.8 799.8 L452.6 797.7 L458.8 795.4 L465.6 792.7 L472.8 789.7 L480.3 786.3 L488.2 782.6 L496.3 778.4 L504.6 773.9 L513.0 768.9 L521.5 763.6 L530.0 757.8 L538.4 751.5 L546.7 744.9 L554.8 737.9 L562.7 730.5 L570.2 722.7 L577.4 714.5 L584.2 706.0 L590.4 697.2 L596.2 688.1 L601.4 678.7 L605.9 669.0 L609.9 659.2 L613.1 649.2 L615.7 639.0 L617.5 628.7 L618.6 618.4 L619.0 608.0 M424.0 616.3 L424.4 626.7 L425.5 637.0 L427.3 647.3 L429.9 657.5 L433.1 667.5 L437.1 677.3 L441.6 687.0 L446.8 696.4 L452.6 705.5 L458.8 714.3 L465.6 722.8 L472.8 731.0 L480.3 738.8 L488.2 746.2 L496.3 753.2 L504.6 759.8 L513.0 766.1 L521.5 771.9 L530.0 777.2 L538.4 782.2 L546.7 786.7 L554.8 790.9 L562.7 794.6 L570.2 798.0 L577.4 801.0 L584.2 803.7 L590.4 806.0 L596.2 808.1 L601.4 809.8 L605.9 811.4 L609.9 812.7 L613.1 813.9 L615.7 814.9 L617.5 815.8 L618.6 816.6 L619.0 817.4 M424.0 817.4 L424.4 816.6 L425.5 815.8 L427.3 814.9 L429.9 813.9 L433.1 812.7 L437.1 811.4 L441.6 809.8 L446.8 808.1 L452.6 806.0 L458.8 803.7 L465.6 801.0 L472.8 798.0 L480.3 794.6 L488.2 790.9 L496.3 786.7 L504.6 782.2 L513.0 777.2 L521.5 771.9 L530.0 766.1 L538.4 759.8 L546.7 753.2 L554.8 746.2 L562.7 738.8 L570.2 731.0 L577.4 722.8 L584.2 714.3 L590.4 705.5 L596.2 696.4 L601.4 687.0 L605.9 677.3 L609.9 667.5 L613.1 657.5 L615.7 647.3 L617.5 637.0 L618.6 626.7 L619.0 616.3 M424.0 618.8 L424.4 629.2 L425.5 639.5 L427.3 649.8 L429.9 660.0 L433.1 670.0 L437.1 679.8 L441.6 689.5 L446.8 698.9 L452.6 708.0 L458.8 716.8 L465.6 725.3 L472.8 733.5 L480.3 741.3 L488.2 748.7 L496.3 755.7 L504.6 762.3 L513.0 768.6 L521.5 774.4 L530.0 779.7 L538.4 784.7 L546.7 789.2 L554.8 793.4 L562.7 797.1 L570.2 800.5 L577.4 803.5 L584.2 806.2 L590.4 808.5 L596.2 810.6 L601.4 812.3 L605.9 813.9 L609.9 815.2 L613.1 816.4 L615.7 817.4 L617.5 818.3 L618.6 819.1 L619.0 819.9 M424.0 819.9 L424.4 819.1 L425.5 818.3 L427.3 817.4 L429.9 816.4 L433.1 815.2 L437.1 813.9 L441.6 812.3 L446.8 810.6 L452.6 808.5 L458.8 806.2 L465.6 803.5 L472.8 800.5 L480.3 797.1 L488.2 793.4 L496.3 789.2 L504.6 784.7 L513.0 779.7 L521.5 774.4 L530.0 768.6 L538.4 762.3 L546.7 755.7 L554.8 748.7 L562.7 741.3 L570.2 733.5 L577.4 725.3 L584.2 716.8 L590.4 708.0 L596.2 698.9 L601.4 689.5 L605.9 679.8 L609.9 670.0 L613.1 660.0 L615.7 649.8 L617.5 639.5 L618.6 629.2 L619.0 618.8 M424.0 627.1 L424.4 637.5 L425.5 647.8 L427.3 658.1 L429.9 668.3 L433.1 678.3 L437.1 688.1 L441.6 697.8 L446.8 707.2 L452.6 716.3 L458.8 725.1 L465.6 733.6 L472.8 741.8 L480.3 749.6 L488.2 757.0 L496.3 764.0 L504.6 770.6 L513.0 776.9 L521.5 782.7 L530.0 788.0 L538.4 793.0 L546.7 797.5 L554.8 801.7 L562.7 805.4 L570.2 808.8 L577.4 811.8 L584.2 814.5 L590.4 816.8 L596.2 818.9 L601.4 820.6 L605.9 822.2 L609.9 823.5 L613.1 824.7 L615.7 825.7 L617.5 826.6 L618.6 827.4 L619.0 828.2 M424.0 828.2 L424.4 827.4 L425.5 826.6 L427.3 825.7 L429.9 824.7 L433.1 823.5 L437.1 822.2 L441.6 820.6 L446.8 818.9 L452.6 816.8 L458.8 814.5 L465.6 811.8 L472.8 808.8 L480.3 805.4 L488.2 801.7 L496.3 797.5 L504.6 793.0 L513.0 788.0 L521.5 782.7 L530.0 776.9 L538.4 770.6 L546.7 764.0 L554.8 757.0 L562.7 749.6 L570.2 741.8 L577.4 733.6 L584.2 725.1 L590.4 716.3 L596.2 707.2 L601.4 697.8 L605.9 688.1 L609.9 678.3 L613.1 668.3 L615.7 658.1 L617.5 647.8 L618.6 637.5 L619.0 627.1 M424.0 629.6 L424.4 640.0 L425.5 650.3 L427.3 660.6 L429.9 670.8 L433.1 680.8 L437.1 690.6 L441.6 700.3 L446.8 709.7 L452.6 718.8 L458.8 727.6 L465.6 736.1 L472.8 744.3 L480.3 752.1 L488.2 759.5 L496.3 766.5 L504.6 773.1 L513.0 779.4 L521.5 785.2 L530.0 790.5 L538.4 795.5 L546.7 800.0 L554.8 804.2 L562.7 807.9 L570.2 811.3 L577.4 814.3 L584.2 817.0 L590.4 819.3 L596.2 821.4 L601.4 823.1 L605.9 824.7 L609.9 826.0 L613.1 827.2 L615.7 828.2 L617.5 829.1 L618.6 829.9 L619.0 830.7 M424.0 830.7 L424.4 829.9 L425.5 829.1 L427.3 828.2 L429.9 827.2 L433.1 826.0 L437.1 824.7 L441.6 823.1 L446.8 821.4 L452.6 819.3 L458.8 817.0 L465.6 814.3 L472.8 811.3 L480.3 807.9 L488.2 804.2 L496.3 800.0 L504.6 795.5 L513.0 790.5 L521.5 785.2 L530.0 779.4 L538.4 773.1 L546.7 766.5 L554.8 759.5 L562.7 752.1 L570.2 744.3 L577.4 736.1 L584.2 727.6 L590.4 718.8 L596.2 709.7 L601.4 700.3 L605.9 690.6 L609.9 680.8 L613.1 670.8 L615.7 660.6 L617.5 650.3 L618.6 640.0 L619.0 629.6"/>
</g>
<path d="M468.800 550.400 Q472 546 485 552 Q505 560 509.500 566.300 Q506 570 492 565 Q474 558 468.800 550.400 Z" fill="#92928d"/>
<path d="M430 534 Q433 531 439 536 Q441 539 437 539 Q432 538 430 534 Z" fill="#92928d"/>
<path d="M424.7 533.5 C427.0 541.5 430.0 548.5 435.0 554.5 C439.0 559.5 444.0 563.5 450.0 567.5 C458.0 572.0 467.0 575.0 477.0 578.0 C492.0 582.0 508.0 584.0 525.0 584.0 C542.0 584.0 558.0 582.5 573.0 578.5 C581.0 576.5 588.0 573.5 595.0 569.5 C601.0 565.5 607.0 559.5 612.0 552.5 C615.0 548.5 617.0 544.5 619.3 534.5 L619.300 600 L424.700 600 Z" fill="#787873"/>
<g transform="translate(0 2.600)"><path d="M424.7 533.5 C427.0 541.5 430.0 548.5 435.0 554.5 C439.0 559.5 444.0 563.5 450.0 567.5 C458.0 572.0 467.0 575.0 477.0 578.0 C492.0 582.0 508.0 584.0 525.0 584.0 C542.0 584.0 558.0 582.5 573.0 578.5 C581.0 576.5 588.0 573.5 595.0 569.5 C601.0 565.5 607.0 559.5 612.0 552.5 C615.0 548.5 617.0 544.5 619.3 534.5 L619.300 600 L424.700 600 Z" fill="#55554f"/></g>
<path d="M424.7 533.5 C427.0 541.5 430.0 548.5 435.0 554.5 C439.0 559.5 444.0 563.5 450.0 567.5 C458.0 572.0 467.0 575.0 477.0 578.0 C492.0 582.0 508.0 584.0 525.0 584.0 C542.0 584.0 558.0 582.5 573.0 578.5 C581.0 576.5 588.0 573.5 595.0 569.5 C601.0 565.5 607.0 559.5 612.0 552.5 C615.0 548.5 617.0 544.5 619.3 534.5" fill="none" stroke="#2c2c29" stroke-width="0.700"/>
<g transform="translate(0 2.600)"><path d="M424.7 533.5 C427.0 541.5 430.0 548.5 435.0 554.5 C439.0 559.5 444.0 563.5 450.0 567.5 C458.0 572.0 467.0 575.0 477.0 578.0 C492.0 582.0 508.0 584.0 525.0 584.0 C542.0 584.0 558.0 582.5 573.0 578.5 C581.0 576.5 588.0 573.5 595.0 569.5 C601.0 565.5 607.0 559.5 612.0 552.5 C615.0 548.5 617.0 544.5 619.3 534.5" fill="none" stroke="#33332f" stroke-width="0.600"/></g>
<path d="M423.900 332 C440 355 480 377 524 377.500 C565 377 605 358 617.500 334 L618 342 C605 366 565 386 524 386.500 C480 386 440 364 424 340 Z" fill="#767671"/>
<path d="M424 340 C440 364 480 386 524 386.500 C565 386 605 366 618 342" fill="none" stroke="#3a3a37" stroke-width="0.700"/>
</g>
<path d="M424.7 330 L424.7 395.5 L430.500 403 L430 452 L424.800 463 L424.700 536 C427 548 432 560 439 568.300 C445 574 451 578 458.200 581.300 C464 584 470 586.500 477.300 588.900 C492 592.500 508 594 525 594 C542 594 558 593 572.700 590 C580 588.500 586 586.500 591.800 584.100 C599 581 606 575 610.900 568.400 C615 561 618 552 619.300 540 L619.600 494 L617 480 L612 463.400 L609.200 444 L607.300 442.800 L607.300 390.600 C610 385 614 383 617.500 381 L617.500 330 Z" fill="none" stroke="#33332f" stroke-width="0.800"/>
<path d="M506.800 447.100 Q545 449.500 579.600 436.500 L579.600 505.200 Q545 518.500 506.800 514.300 Z" fill="none" stroke="#40403c" stroke-width="0.600"/>
<path d="M430.500 402 L430.500 470.400 L506.800 514.300" fill="none" stroke="#40403c" stroke-width="0.600"/>
<path d="M607.300 449.700 L581.200 512.900" fill="none" stroke="#40403c" stroke-width="0.600"/>
<g clip-path="url(#headclip)">
<rect x="385" y="108" width="260" height="275" fill="#20d6e6"/>
<ellipse cx="470" cy="250" rx="45" ry="26" fill="#20e4dc" filter="url(#b10)"/>
<ellipse cx="455" cy="288" rx="34" ry="16" fill="#20e6da" filter="url(#b10)"/>
<ellipse cx="505" cy="165" rx="70" ry="45" fill="#2fe6b2" filter="url(#b10)"/>
<ellipse cx="508" cy="190" rx="40" ry="28" fill="#3ce88c" filter="url(#b10)"/>
<ellipse cx="590" cy="212" rx="22" ry="30" fill="#34e8a0" filter="url(#b6)"/>
<ellipse cx="398" cy="160" rx="12" ry="24" fill="#2a78e4" filter="url(#b6)"/>
<ellipse cx="394" cy="208" rx="7" ry="24" fill="#28c4f0" filter="url(#b6)"/>
<ellipse cx="632" cy="160" rx="6" ry="14" fill="#2aa4ee" filter="url(#b6)"/>
<ellipse cx="605" cy="128" rx="28" ry="8" fill="#26bcf2" filter="url(#b6)"/>
<ellipse cx="418" cy="222" rx="30" ry="12" fill="#2a74e2" filter="url(#b10)"/>
<ellipse cx="555" cy="272" rx="42" ry="16" fill="#2a6ee0" filter="url(#b10)"/>
<ellipse cx="624" cy="178" rx="12" ry="14" fill="#24b4f2" filter="url(#b6)"/>
<ellipse cx="606" cy="225" rx="12" ry="22" fill="#32e8b8" filter="url(#b6)"/>
<ellipse cx="430" cy="345" rx="40" ry="28" fill="#1d55d2" filter="url(#b10)"/>
<ellipse cx="470" cy="372" rx="40" ry="14" fill="#1a48c8" filter="url(#b10)"/>
<ellipse cx="608" cy="330" rx="16" ry="34" fill="#1d4fd0" filter="url(#b10)"/>
<ellipse cx="560" cy="372" rx="40" ry="8" fill="#2078dc" filter="url(#b6)"/>
<ellipse cx="458" cy="352" rx="30" ry="13" fill="#1a4ccc" filter="url(#b6)"/>
<path d="M392 250 L420 262 L470 292 L515 322 L515 338 L465 312 L415 284 L392 272 Z" fill="#34ecb4" filter="url(#b3)"/>
<ellipse cx="404" cy="266" rx="12" ry="9" fill="#52ea58" filter="url(#b3)"/>
<ellipse cx="497" cy="318" rx="10" ry="8" fill="#5cea50" filter="url(#b3)"/>
<ellipse cx="440" cy="315" rx="28" ry="12" fill="#2488ee" filter="url(#b6)"/>
<path d="M500 318 L520 326 L520 338 L498 330 Z" fill="#c8f030" filter="url(#b3)"/>
<ellipse cx="624" cy="292" rx="10" ry="34" fill="#2456d8" filter="url(#b6)"/>
<path d="M636 214 L628 222 L613 250 L604 270 L598 288 L594 300 L604 302 L612 282 L623 260 L634 240 Z" fill="#50ea5c" filter="url(#b3)"/>
<path d="M633 220 L624 236 L629 238 L634 230 Z" fill="#a8ec34" filter="url(#b3)"/>
</g>
<g clip-path="url(#headclip)">
<defs><linearGradient id="yel" x1="0" x2="1" y1="0" y2="0"><stop offset="0" stop-color="#7eea4a"/><stop offset="0.35" stop-color="#d6ee22"/><stop offset="0.7" stop-color="#d0ee24"/><stop offset="1" stop-color="#74e850"/></linearGradient><linearGradient id="teal" x1="0" x2="1" y1="0" y2="0"><stop offset="0" stop-color="#2ce6a0"/><stop offset="0.5" stop-color="#22dcc0"/><stop offset="1" stop-color="#2ae890"/></linearGradient><linearGradient id="cy1" x1="0" x2="1" y1="0" y2="0"><stop offset="0" stop-color="#22d4d8"/><stop offset="0.5" stop-color="#22c4ea"/><stop offset="1" stop-color="#24b0e8"/></linearGradient><linearGradient id="cy2" x1="0" x2="1" y1="0" y2="0"><stop offset="0" stop-color="#22b8e6"/><stop offset="0.5" stop-color="#20a8e8"/><stop offset="1" stop-color="#2090e0"/></linearGradient></defs>
<path d="M494 252 L514.100 259.200 Q555 257 592.900 246.600 L599 272 L598 287 Q555 298 514.100 292 L494 284 Z" fill="#2a70e2" fill-opacity="0.85" filter="url(#b3)"/>
<defs><linearGradient id="gapg" x1="0" x2="0" y1="0" y2="1"><stop offset="0" stop-color="#2ee6a8"/><stop offset="0.35" stop-color="#4ae87a"/><stop offset="0.6" stop-color="#28d4e0"/><stop offset="1" stop-color="#24a0ea"/></linearGradient></defs>
<path d="M501.500 292 Q548 293 597 278.500 L601.800 318 L601.800 345 Q548 366 493.600 361 L493.600 330 L501.500 325 Z" fill="url(#gapg)"/>
<path d="M509.5 289.5 Q553.25 285.2 594 277.5 L597 278.5 Q549.25 288.8 501.5 292.0 Z" fill="#36ecc4" stroke="#12303c" stroke-width="0.5"/>
<path d="M501.5 292.0 Q549.25 288.8 597 278.5 L597 288.5 Q549.25 298.8 501.5 302.0 Z" fill="url(#teal)" stroke="#12303c" stroke-width="0.5"/>
<path d="M509.5 311.0 Q553.75 307.0 595 299.5 L598 308.0 Q549.75 318.0 501.5 321.0 Z" fill="#c2ee38" stroke="#12303c" stroke-width="0.5"/>
<path d="M501.5 321.0 Q549.75 318.0 598 308.0 L598 318.0 Q549.75 328.0 501.5 331.0 Z" fill="url(#yel)" stroke="#12303c" stroke-width="0.5"/>
<path d="M501.6 327.5 Q551.7 325.0 598.8 318.0 L601.8 320.0 Q547.7 329.5 493.6 331.0 Z" fill="#38e0e6" stroke="#12303c" stroke-width="0.5"/>
<path d="M493.6 331.0 Q547.7 329.5 601.8 320.0 L601.8 329.0 Q547.7 338.5 493.6 340.0 Z" fill="url(#cy1)" stroke="#12303c" stroke-width="0.5"/>
<path d="M501.6 347.5 Q551.7 343.5 598.8 333.0 L601.8 335.0 Q547.7 348.0 493.6 351.0 Z" fill="#2ec8ee" stroke="#12303c" stroke-width="0.5"/>
<path d="M493.6 351.0 Q547.7 348.0 601.8 335.0 L601.8 344.5 Q547.7 357.5 493.6 360.5 Z" fill="url(#cy2)" stroke="#12303c" stroke-width="0.5"/>
<path d="M514.100 258.200 Q555 256 592.900 245.600 M494.200 246.700 L515.200 256.100 Q555 253.800 591.800 243.500 L600 231 M514.100 258.200 V292 M593.500 245.600 L599.500 272 M493.600 330 V377" fill="none" stroke="#12303c" stroke-width="0.6"/>
<path d="M392 185 Q400 196 413.600 201.600 L440.900 210 L459.800 215 Q470 220 476.600 226.800 L490 243.600 L494.200 246.700" fill="none" stroke="#12303c" stroke-width="0.6"/>
<path d="M392 188.500 Q400 199 413.600 204.600 L440.900 213 L459 218.200" fill="none" stroke="#12303c" stroke-width="0.4"/>
<path d="M412.800 201.500 V216.300 M440 209.500 V223.900" stroke="#12303c" stroke-width="0.6"/>
<path d="M412.800 216.300 L440 223.900 Q462 231 478 247 L493.400 251 L493.400 262.500 L470 250 L440 232 Z" fill="#2cd0ee" stroke="#12303c" stroke-width="0.6"/>
<path d="M412.800 217.300 L440 231 L470 250 L493.400 262.500" fill="none" stroke="#0e2430" stroke-width="1.4" stroke-dasharray="0.8 0.9"/>
<path d="M440 223.900 Q458 226 468 238 Q474 246 476 249.500" fill="none" stroke="#12303c" stroke-width="0.5"/>
<path d="M637.500 149.500 L630.500 168 L613.700 180.600 Q601 192 598.500 203 Q597 214 603.200 222.600 L604 236" fill="none" stroke="#12303c" stroke-width="0.6"/>
<path d="M637.500 152.500 L631.500 171 L615 183.500 Q604 194 602 204 Q601.500 212 605.500 220" fill="none" stroke="#12303c" stroke-width="0.4"/>
<path d="M613.700 181 V200 M630.500 168.500 V186 M613.700 200 Q606 206 603.500 214 M630.500 186 L613.700 200 M605 236 L622 203 L634 194" fill="none" stroke="#12303c" stroke-width="0.5"/>
<path d="M634.500 197 L638 194.500 L637.800 203 L633.500 207 Z" fill="#2ee6b0" stroke="#12303c" stroke-width="0.5"/>
<path d="M633.500 213 L637.500 209.500 L637 226 L631 233 Z" fill="#b4ec30" stroke="#12303c" stroke-width="0.5"/>
<path d="M607.400 281.700 L623.200 252.300 L623.800 281.700 L613.700 298.500 L613.700 313.200 L609.100 311.100 Z" fill="#3f4e4a" stroke="#1a2426" stroke-width="0.6"/>
<path d="M611 281 L621.500 262 L622 280 L613 294 Z" fill="#5c6e66"/>
<path d="M391.800 221.500 L404.500 226.500 V237.500 L391.800 231 Z" fill="#22ecd0" stroke="#12303c" stroke-width="0.5"/>
<path d="M391.800 229 L404.500 235 V237.500 L391.800 231 Z" fill="#0e5a60"/>
<path d="M391.800 241 L404.500 246 V258.500 L391.800 254 Z" fill="#a8ec28" stroke="#12303c" stroke-width="0.5"/>
<path d="M391.800 251.500 L404.500 256 V258.500 L391.800 254 Z" fill="#4a7a10"/>
<path d="M391.800 254 L404.500 258.500 L405.200 267 L391.800 260.400 Z" fill="#5ee850"/>
<defs><linearGradient id="btng" x1="0" x2="0" y1="0" y2="1"><stop offset="0" stop-color="#8e9e78"/><stop offset="1" stop-color="#7a9a8c"/></linearGradient></defs>
<g transform="translate(430.2 268.1) rotate(-21)"><ellipse rx="16.2" ry="23.5" fill="#5c7060" stroke="#1c2a26" stroke-width="0.7"/><ellipse rx="15.2" ry="22.4" cx="0.2" cy="0.1" fill="#7a9484"/><ellipse rx="14.2" ry="21.4" cx="0.4" cy="0.2" fill="#84864e" stroke="#2a3a34" stroke-width="0.5"/><ellipse rx="12" ry="20.2" cx="-1.4" cy="0.8" fill="url(#btng)" stroke="#3a4a40" stroke-width="0.5"/><path d="M-7 -13 Q-8 -2 -3 5 L2 0 L10 2 M-1 -15 L-1 3 M3 -15 L2 0" fill="none" stroke="#a08a84" stroke-width="0.45"/></g>
<g transform="translate(474.7 293.3) rotate(-21)"><ellipse rx="16.2" ry="23.5" fill="#5c7060" stroke="#1c2a26" stroke-width="0.7"/><ellipse rx="15.2" ry="22.4" cx="0.2" cy="0.1" fill="#7a9484"/><ellipse rx="14.2" ry="21.4" cx="0.4" cy="0.2" fill="#84864e" stroke="#2a3a34" stroke-width="0.5"/><ellipse rx="12" ry="20.2" cx="-1.4" cy="0.8" fill="url(#btng)" stroke="#3a4a40" stroke-width="0.5"/><path d="M-7 -13 Q-8 -2 -3 5 L2 0 L10 2 M-1 -15 L-1 3 M3 -15 L2 0" fill="none" stroke="#a08a84" stroke-width="0.45"/></g>
<g transform="rotate(1.5 458.2 170.1)">
<ellipse cx="458.2" cy="170.1" rx="52.0" ry="31.6" fill="#2c342c" stroke="#1a2018" stroke-width="0.6"/>
<ellipse cx="458.2" cy="169.9" rx="51.2" ry="30.900000000000002" fill="#6c7f6c"/>
<ellipse cx="458.2" cy="169.5" rx="49.9" ry="29.6" fill="#2c342c"/>
<ellipse cx="458.3" cy="169.29999999999998" rx="49.3" ry="29.0" fill="#647664"/>
<ellipse cx="458.4" cy="168.9" rx="48.2" ry="27.900000000000002" fill="#2c342c"/>
<ellipse cx="458.4" cy="168.79999999999998" rx="47.7" ry="27.400000000000002" fill="#7c8e78"/>
<ellipse cx="458.5" cy="168.6" rx="46.8" ry="26.6" fill="#728c80" stroke="#222c24" stroke-width="0.6"/>
<clipPath id="lc458"><ellipse cx="458.5" cy="168.6" rx="46.6" ry="26.400000000000002"/></clipPath>
<g clip-path="url(#lc458)">
<ellipse cx="436.2" cy="153.1" rx="14" ry="5" fill="#b4c6bc" filter="url(#b3)"/>
<ellipse cx="488.2" cy="157.1" rx="10" ry="5" fill="#a8bcb0" filter="url(#b3)"/>
<ellipse cx="458.59999999999997" cy="172.6" rx="46.2" ry="25.1" fill="#88a094" fill-opacity="0.8" stroke="#3a4a42" stroke-width="0.4"/>
<ellipse cx="458.59999999999997" cy="174.7" rx="45.4" ry="22.200000000000003" fill="#566e64" stroke="#2c3a34" stroke-width="0.5"/>
<ellipse cx="458.7" cy="175.9" rx="44.4" ry="19.8" fill="#7c968a" stroke="#3a4a42" stroke-width="0.4"/>
<ellipse cx="458.8" cy="177.0" rx="43.2" ry="17.900000000000002" fill="url(#lensg)" stroke="#4a5c50" stroke-width="0.6"/>
<clipPath id="gc458"><ellipse cx="458.8" cy="177.0" rx="43.2" ry="17.900000000000002"/></clipPath>
<g clip-path="url(#gc458)">
<ellipse cx="431.2" cy="183.1" rx="13" ry="9" fill="#86c68a" fill-opacity="0.8" filter="url(#b3)"/>
<ellipse cx="456.2" cy="192.1" rx="24" ry="5" fill="#a4c88a" fill-opacity="0.85" filter="url(#b3)"/>
<ellipse cx="482.2" cy="174.1" rx="15" ry="7" fill="#c4d8cc" fill-opacity="0.8" filter="url(#b3)"/>
<ellipse cx="458.8" cy="180.1" rx="42.0" ry="15.600000000000001" fill="none" stroke="#b08a80" stroke-width="0.35"/>
<path d="M441.7 169.6 q-2.500 9 2.500 20.500 l3.500 0 q-3.500 -10 -2 -16.500 q6 -0.500 13 3.500 l0 -3.500 q-8 -4.500 -17 -4z" fill="#f4f6f0" fill-opacity="0.9" filter="url(#b1)"/>
<path d="M462.2 175.6 l2.300 0.500 l1.200 8 l-2.600 0z" fill="#f4f6f0" fill-opacity="0.92" filter="url(#b1)"/>
<path d="M466.1 177.8 l2.300 0.500 l1.200 8 l-2.600 0z" fill="#f4f6f0" fill-opacity="0.92" filter="url(#b1)"/>
<path d="M470.0 180.0 l2.300 0.500 l1.200 8 l-2.600 0z" fill="#f4f6f0" fill-opacity="0.92" filter="url(#b1)"/>
<path d="M473.9 182.2 l2.300 0.500 l1.200 8 l-2.600 0z" fill="#f4f6f0" fill-opacity="0.92" filter="url(#b1)"/>
<path d="M477.8 184.4 l2.300 0.500 l1.200 8 l-2.600 0z" fill="#f4f6f0" fill-opacity="0.92" filter="url(#b1)"/>
<path d="M488.2 170.1 q5 5 5.500 13" stroke="#e8ece4" stroke-width="1.600" stroke-opacity="0.55" fill="none" filter="url(#b1)"/>
</g>
</g>
<path d="M440.2 144.29999999999998 l2.500 -3.400 l3.500 0.300 l1.500 4z M484.2 151.29999999999998 l2.800 -3 l3 0.600 l0.600 4z M412.7 165.1 l2 -3 l2.400 1.600 l-1 4z" fill="#7e9488" stroke="#222c24" stroke-width="0.45"/>
</g>
<g transform="rotate(1.5 568.4 152.8)">
<ellipse cx="568.4" cy="152.8" rx="52.0" ry="31.6" fill="#2c342c" stroke="#1a2018" stroke-width="0.6"/>
<ellipse cx="568.4" cy="152.60000000000002" rx="51.2" ry="30.900000000000002" fill="#6c7f6c"/>
<ellipse cx="568.4" cy="152.20000000000002" rx="49.9" ry="29.6" fill="#2c342c"/>
<ellipse cx="568.5" cy="152.0" rx="49.3" ry="29.0" fill="#647664"/>
<ellipse cx="568.6" cy="151.60000000000002" rx="48.2" ry="27.900000000000002" fill="#2c342c"/>
<ellipse cx="568.6" cy="151.5" rx="47.7" ry="27.400000000000002" fill="#7c8e78"/>
<ellipse cx="568.6999999999999" cy="151.3" rx="46.8" ry="26.6" fill="#728c80" stroke="#222c24" stroke-width="0.6"/>
<clipPath id="lc568"><ellipse cx="568.6999999999999" cy="151.3" rx="46.6" ry="26.400000000000002"/></clipPath>
<g clip-path="url(#lc568)">
<ellipse cx="546.4" cy="135.8" rx="14" ry="5" fill="#b4c6bc" filter="url(#b3)"/>
<ellipse cx="598.4" cy="139.8" rx="10" ry="5" fill="#a8bcb0" filter="url(#b3)"/>
<ellipse cx="568.8" cy="155.3" rx="46.2" ry="25.1" fill="#88a094" fill-opacity="0.8" stroke="#3a4a42" stroke-width="0.4"/>
<ellipse cx="568.8" cy="157.4" rx="45.4" ry="22.200000000000003" fill="#566e64" stroke="#2c3a34" stroke-width="0.5"/>
<ellipse cx="568.9" cy="158.60000000000002" rx="44.4" ry="19.8" fill="#7c968a" stroke="#3a4a42" stroke-width="0.4"/>
<ellipse cx="569.0" cy="159.70000000000002" rx="43.2" ry="17.900000000000002" fill="url(#lensg)" stroke="#4a5c50" stroke-width="0.6"/>
<clipPath id="gc568"><ellipse cx="569.0" cy="159.70000000000002" rx="43.2" ry="17.900000000000002"/></clipPath>
<g clip-path="url(#gc568)">
<ellipse cx="541.4" cy="165.8" rx="13" ry="9" fill="#86c68a" fill-opacity="0.8" filter="url(#b3)"/>
<ellipse cx="566.4" cy="174.8" rx="24" ry="5" fill="#a4c88a" fill-opacity="0.85" filter="url(#b3)"/>
<ellipse cx="592.4" cy="156.8" rx="15" ry="7" fill="#c4d8cc" fill-opacity="0.8" filter="url(#b3)"/>
<ellipse cx="569.0" cy="162.8" rx="42.0" ry="15.600000000000001" fill="none" stroke="#b08a80" stroke-width="0.35"/>
<path d="M551.9 152.3 q-2.500 9 2.500 20.500 l3.500 0 q-3.500 -10 -2 -16.500 q6 -0.500 13 3.500 l0 -3.500 q-8 -4.500 -17 -4z" fill="#f4f6f0" fill-opacity="0.9" filter="url(#b1)"/>
<path d="M572.4 158.3 l2.300 0.500 l1.200 8 l-2.600 0z" fill="#f4f6f0" fill-opacity="0.92" filter="url(#b1)"/>
<path d="M576.3 160.5 l2.300 0.500 l1.200 8 l-2.600 0z" fill="#f4f6f0" fill-opacity="0.92" filter="url(#b1)"/>
<path d="M580.2 162.7 l2.300 0.500 l1.200 8 l-2.600 0z" fill="#f4f6f0" fill-opacity="0.92" filter="url(#b1)"/>
<path d="M584.1 164.9 l2.300 0.500 l1.200 8 l-2.600 0z" fill="#f4f6f0" fill-opacity="0.92" filter="url(#b1)"/>
<path d="M588.0 167.1 l2.300 0.500 l1.200 8 l-2.600 0z" fill="#f4f6f0" fill-opacity="0.92" filter="url(#b1)"/>
<path d="M598.4 152.8 q5 5 5.500 13" stroke="#e8ece4" stroke-width="1.600" stroke-opacity="0.55" fill="none" filter="url(#b1)"/>
</g>
</g>
<path d="M550.4 127.00000000000001 l2.500 -3.400 l3.500 0.300 l1.500 4z M594.4 134.0 l2.800 -3 l3 0.600 l0.600 4z M522.9 147.8 l2 -3 l2.400 1.600 l-1 4z" fill="#7e9488" stroke="#222c24" stroke-width="0.45"/>
</g>
<g transform="rotate(1.5 538.8 216.7)">
<ellipse cx="538.8" cy="216.7" rx="52.0" ry="31.6" fill="#2c342c" stroke="#1a2018" stroke-width="0.6"/>
<ellipse cx="538.8" cy="216.5" rx="51.2" ry="30.900000000000002" fill="#7e8a5c"/>
<ellipse cx="538.8" cy="216.1" rx="49.9" ry="29.6" fill="#2c342c"/>
<ellipse cx="538.9" cy="215.89999999999998" rx="49.3" ry="29.0" fill="#727e54"/>
<ellipse cx="539.0" cy="215.5" rx="48.2" ry="27.900000000000002" fill="#2c342c"/>
<ellipse cx="539.0" cy="215.39999999999998" rx="47.7" ry="27.400000000000002" fill="#8a9662"/>
<ellipse cx="539.0999999999999" cy="215.2" rx="46.8" ry="26.6" fill="#728c80" stroke="#222c24" stroke-width="0.6"/>
<clipPath id="lc538"><ellipse cx="539.0999999999999" cy="215.2" rx="46.6" ry="26.400000000000002"/></clipPath>
<g clip-path="url(#lc538)">
<ellipse cx="516.8" cy="199.7" rx="14" ry="5" fill="#b4c6bc" filter="url(#b3)"/>
<ellipse cx="568.8" cy="203.7" rx="10" ry="5" fill="#a8bcb0" filter="url(#b3)"/>
<ellipse cx="539.1999999999999" cy="219.2" rx="46.2" ry="25.1" fill="#88a094" fill-opacity="0.8" stroke="#3a4a42" stroke-width="0.4"/>
<ellipse cx="539.1999999999999" cy="221.29999999999998" rx="45.4" ry="22.200000000000003" fill="#566e64" stroke="#2c3a34" stroke-width="0.5"/>
<ellipse cx="539.3" cy="222.5" rx="44.4" ry="19.8" fill="#7c968a" stroke="#3a4a42" stroke-width="0.4"/>
<ellipse cx="539.4" cy="223.6" rx="43.2" ry="17.900000000000002" fill="url(#lensg)" stroke="#4a5c50" stroke-width="0.6"/>
<clipPath id="gc538"><ellipse cx="539.4" cy="223.6" rx="43.2" ry="17.900000000000002"/></clipPath>
<g clip-path="url(#gc538)">
<ellipse cx="511.79999999999995" cy="229.7" rx="13" ry="9" fill="#86c68a" fill-opacity="0.8" filter="url(#b3)"/>
<ellipse cx="536.8" cy="238.7" rx="24" ry="5" fill="#a4c88a" fill-opacity="0.85" filter="url(#b3)"/>
<ellipse cx="562.8" cy="220.7" rx="15" ry="7" fill="#c4d8cc" fill-opacity="0.8" filter="url(#b3)"/>
<ellipse cx="539.4" cy="226.7" rx="42.0" ry="15.600000000000001" fill="none" stroke="#b08a80" stroke-width="0.35"/>
<path d="M522.3 216.2 q-2.500 9 2.500 20.500 l3.500 0 q-3.500 -10 -2 -16.500 q6 -0.500 13 3.500 l0 -3.500 q-8 -4.500 -17 -4z" fill="#f4f6f0" fill-opacity="0.9" filter="url(#b1)"/>
<path d="M542.8 222.2 l2.300 0.500 l1.200 8 l-2.600 0z" fill="#f4f6f0" fill-opacity="0.92" filter="url(#b1)"/>
<path d="M546.7 224.4 l2.300 0.500 l1.200 8 l-2.600 0z" fill="#f4f6f0" fill-opacity="0.92" filter="url(#b1)"/>
<path d="M550.6 226.6 l2.300 0.500 l1.200 8 l-2.600 0z" fill="#f4f6f0" fill-opacity="0.92" filter="url(#b1)"/>
<path d="M554.5 228.8 l2.300 0.500 l1.200 8 l-2.600 0z" fill="#f4f6f0" fill-opacity="0.92" filter="url(#b1)"/>
<path d="M558.4 231.0 l2.300 0.500 l1.200 8 l-2.600 0z" fill="#f4f6f0" fill-opacity="0.92" filter="url(#b1)"/>
<path d="M568.8 216.7 q5 5 5.500 13" stroke="#e8ece4" stroke-width="1.600" stroke-opacity="0.55" fill="none" filter="url(#b1)"/>
</g>
</g>
<path d="M520.8 190.89999999999998 l2.500 -3.400 l3.500 0.300 l1.500 4z M564.8 197.89999999999998 l2.800 -3 l3 0.600 l0.600 4z M493.29999999999995 211.7 l2 -3 l2.400 1.600 l-1 4z" fill="#7e9488" stroke="#222c24" stroke-width="0.45"/>
</g>
</g>
<path d="M391.800 185 L392.800 173.700 L395.200 163 Q403 152 413.100 140.900 C425 138.800 438 136 455 135.500 C468 135.500 480 137 493.600 137.100 C502 137 510 135 520.900 130.500 C530 126 540 122 552.600 119.700 L580.500 115.300 L603.600 125.100 L619.100 135.900 L637.500 149.500 L638 189 L634.500 192.500 L634.500 197 L638 194.500 L637.800 203 L633.500 207 L633.500 213 L637.500 209.500 L637 226 L631 233 L629 254 L625.500 282.600 L621.200 307.500 L617.500 334 C605 358 565 377 524 377.5 C480 377 440 355 423.900 332 L415.7 321 L411.300 309 L408 290 L408.5 276 L405.200 267 L391.8 260.400 Z" fill="none" stroke="#1a2a3a" stroke-width="0.800"/>
</svg>
<!--/MODEL-->
<!--EXTRAS-->
<svg class="abs" style="left:1030px;top:78px" width="70" height="70" viewBox="1030 78 70 70">
<defs><filter id="vb" x="-50%" y="-50%" width="200%" height="200%"><feGaussianBlur stdDeviation="2.2"/></filter></defs>
<ellipse cx="1064" cy="133" rx="15" ry="6" fill="#c8c8c8" filter="url(#vb)"/>
<path d="M1063.400 94.400 L1083.700 103.400 L1063.700 114.200 L1043 103.400 Z" fill="#efefef" stroke="#8a8a8a" stroke-width="0.5" stroke-dasharray="1.2 0.500"/>
<path d="M1043 103.400 L1063.700 114.200 L1063.700 138.500 L1045.300 124.900 Z" fill="#e4e4e4" stroke="#8a8a8a" stroke-width="0.5"/>
<path d="M1063.700 114.200 L1083.700 103.400 L1082 124.400 L1063.700 138.500 Z" fill="#d9d9d9" stroke="#8a8a8a" stroke-width="0.5"/>
<path d="M1063.700 114.200 V138.500" stroke="#666" stroke-width="0.7"/>
<path d="M1063.600 91 V94.400" stroke="#6fe86f" stroke-width="1"/><path d="M1045 125 L1042.500 126.800" stroke="#5a5af0" stroke-width="0.9"/><path d="M1082 124.400 L1085 126.500" stroke="#f08080" stroke-width="0.9"/>
<text x="1063.600" y="89.600" font-family="Liberation Sans, sans-serif" font-size="6.600" fill="#6fe86f" text-anchor="middle">Y</text>
<text x="1039.200" y="131.200" font-family="Liberation Sans, sans-serif" font-size="6.400" fill="#6a6af2" text-anchor="middle">Z</text>
<text x="1088" y="131.200" font-family="Liberation Sans, sans-serif" font-size="6.400" fill="#f28a8a" text-anchor="middle">X</text>
<text transform="matrix(0.86 0.40 -0.88 0.42 1059 101.800)" font-family="Liberation Sans, sans-serif" font-size="4.800" fill="#9a9a9a">TOP</text>
<text transform="matrix(0.80 0.46 0 1 1046.600 117.300)" font-family="Liberation Sans, sans-serif" font-size="5" fill="#858585">FRONT</text>
<text transform="matrix(0.80 -0.46 0 1 1067 126.400)" font-family="Liberation Sans, sans-serif" font-size="5" fill="#858585">RIGHT</text>
</svg>
<div class="abs" style="left:491px;top:603px;width:118px;height:13.600px;background:#f0f0f0"></div>
<svg class="abs" style="left:488px;top:600px" width="124" height="18" viewBox="488 600 124 18">
<g fill="#444"><path d="M505.300 608.600 h2.600 l-1.300 1.600z M568.600 608.600 h2.600 l-1.300 1.600z M586.100 608.600 h2.600 l-1.300 1.600z M603.700 608.600 h2.600 l-1.300 1.600z"/></g>
<!-- orbit -->
<ellipse cx="497.800" cy="609.300" rx="4.300" ry="1.900" fill="none" stroke="#555" stroke-width="0.8"/><path d="M497.800 604.500 V614 M496 606 L497.800 604.300 L499.600 606" stroke="#555" stroke-width="0.8" fill="none"/><path d="M494.500 608.800 H497" stroke="#1c80dc" stroke-width="1"/>
<!-- look at -->
<rect x="512" y="607" width="8.800" height="6.600" fill="#f6f6f6" stroke="#555" stroke-width="0.9"/><path d="M513.500 607 V605.200 H519.300 V607" fill="none" stroke="#555" stroke-width="0.8"/><rect x="514" y="609.200" width="4.800" height="2.200" fill="#fff" stroke="#555" stroke-width="0.600"/>
<!-- pan -->
<path d="M528.800 609.500 Q527 607 528.200 606.800 Q529.200 606.800 530 608.200 V605.300 Q530.500 604.500 531.200 605.300 V604.800 Q531.800 604 532.500 604.800 V605.300 Q533.100 604.600 533.800 605.400 V606.300 Q534.500 605.700 535.200 606.500 V610 Q535 613 533.500 613.800 H530.500 Q529.500 612 528.800 609.500 Z" fill="#fafafa" stroke="#444" stroke-width="0.700"/>
<!-- zoom -->
<circle cx="545" cy="608.200" r="3" fill="#eef4f8" stroke="#555" stroke-width="0.9"/><path d="M547.200 610.600 L550.200 613.800" stroke="#444" stroke-width="1.300"/><path d="M549.800 604.300 V606.700 M548.600 605.500 H551" stroke="#555" stroke-width="0.600"/>
<!-- zoom window -->
<rect x="556.400" y="604.600" width="7.600" height="7.600" fill="none" stroke="#666" stroke-width="0.600" stroke-dasharray="1.400 1"/><circle cx="560.500" cy="608" r="3.200" fill="#eef4f8" stroke="#555" stroke-width="0.9"/><path d="M562.800 610.500 L566 613.900" stroke="#444" stroke-width="1.300"/>
<!-- display -->
<rect x="575.400" y="604.700" width="9.400" height="7" fill="#8fb6e6" stroke="#444" stroke-width="0.9"/><path d="M578.200 613.800 H582 M580.100 611.700 V613.800" stroke="#444" stroke-width="0.9"/>
<!-- grid -->
<rect x="593.300" y="604.700" width="9" height="9" fill="#d0d0d0" stroke="#555" stroke-width="0.700"/><path d="M596.300 604.700 V613.700 M599.300 604.700 V613.700 M593.300 607.700 H602.300 M593.300 610.700 H602.300" stroke="#555" stroke-width="0.700"/>
</svg>
<svg class="abs" style="left:1080px;top:602px" width="16" height="14" viewBox="1080 602 16 14"><path d="M1088 605.800 A4.100 4.100 0 1 0 1088 614 H1092 V609.900 A4.100 4.100 0 0 0 1088 605.800Z" fill="#333"/><text x="1088" y="612.300" font-family="Liberation Sans, sans-serif" font-size="6" font-weight="bold" fill="#fff" text-anchor="middle">a</text></svg>

<!--/EXTRAS-->
</div>
<div class="abs" style="left:0;top:617.600px;width:1100px;height:1.400px;background:#383838"></div>
</div>
</body>
</html>
